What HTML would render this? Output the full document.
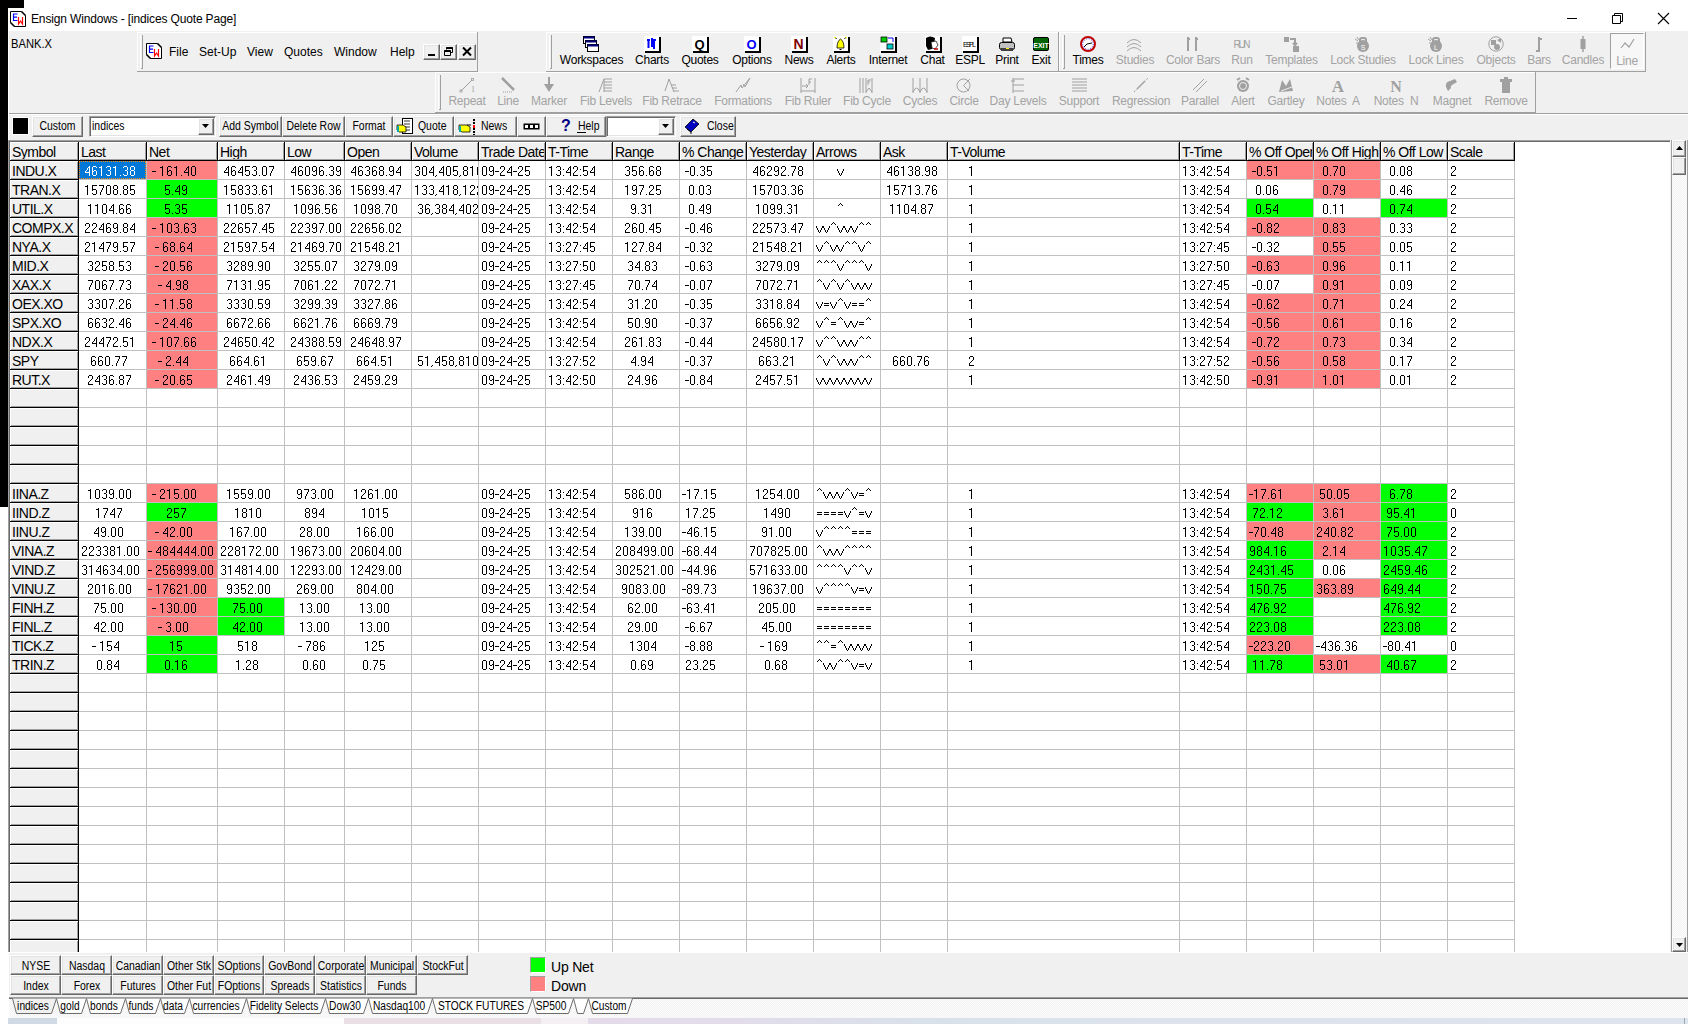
<!DOCTYPE html><html><head><meta charset="utf-8"><style>html,body{margin:0;padding:0;}
body{width:1696px;height:1024px;position:relative;overflow:hidden;background:#fff;font-family:"Liberation Sans", sans-serif;}
body div{position:absolute;box-sizing:border-box;}
.t{white-space:pre;line-height:1;}
.btn{background:#f0f0f0;border-style:solid;border-width:1px;border-color:#fff #696969 #696969 #fff;box-shadow:inset -1px -1px 0 #a0a0a0, inset 1px 1px 0 #e3e3e3;}
.sunk{border-style:solid;border-width:1px;border-color:#a0a0a0 #fff #fff #a0a0a0;box-shadow:inset 1px 1px 0 #696969, inset -1px -1px 0 #e3e3e3;}
.dis{color:#a3a3a3;}
svg{position:absolute;overflow:visible;}
.g{font-size:14px;letter-spacing:-0.5px;color:#000;}
.n{font-size:14px;letter-spacing:-1px;}
.b{letter-spacing:-0.4px;}
</style></head><body><div style="left:0px;top:0px;width:1696px;height:31px;background:#fff;"></div><div style="left:9px;top:31px;width:1679px;height:987px;background:#f0f0f0;"></div><div style="left:0px;top:0px;width:24px;height:8px;background:#000;"></div><div style="left:0px;top:0px;width:8px;height:507px;background:#000;"></div><svg style="left:10px;top:11px" width="16" height="16" viewBox="0 0 16 16"><path d="M0.5 0.5 H11.5 L15.5 4.5 V15.5 H4.5 L0.5 11.5 Z" fill="#fff" stroke="#000" stroke-width="1"/><path d="M11.5 0.5 L15.5 4.5 M0.5 11.5 L4.5 15.5" stroke="#000" stroke-width="1.6"/><path d="M7.5 3 H3.5 V9.5 H7.5 M3.5 6.2 H7" fill="none" stroke="#00f" stroke-width="1.2"/><path d="M8.5 6 V13 L10.5 10 L12.5 13 V6" fill="none" stroke="#f00" stroke-width="1.2"/></svg><div class="t " style="left:31px;top:13px;font-size:12px;color:#000;letter-spacing:-0.15px;">Ensign Windows - [indices Quote Page]</div><div style="left:1567px;top:18px;width:10px;height:1px;background:#000;"></div><svg style="left:1612px;top:13px" width="11" height="11" viewBox="0 0 11 11"><path d="M0.5 2.5 H8.5 V10.5 H0.5 Z M2.5 2.5 V0.5 H10.5 V8.5 H8.5" fill="none" stroke="#000" stroke-width="1"/></svg><svg style="left:1658px;top:13px" width="11" height="11" viewBox="0 0 11 11"><path d="M0 0 L11 11 M11 0 L0 11" stroke="#000" stroke-width="1.1"/></svg><div class="t " style="left:11px;top:37px;font-size:13px;color:#000;transform:scaleX(0.86);transform-origin:0 0;">BANK.X</div><div style="left:137px;top:32px;width:341px;height:40px;background:#f0f0f0;"></div><div style="left:137px;top:32px;width:341px;height:1px;background:#fff;"></div><div style="left:137px;top:32px;width:1px;height:40px;background:#fff;"></div><div style="left:137px;top:71px;width:341px;height:1px;background:#a0a0a0;"></div><div style="left:477px;top:32px;width:1px;height:40px;background:#a0a0a0;"></div><div style="left:140px;top:35px;width:1px;height:34px;background:#fff;"></div><div style="left:142px;top:35px;width:1px;height:34px;background:#a0a0a0;"></div><div style="left:141px;top:68px;width:2px;height:1px;background:#a0a0a0;"></div><svg style="left:146px;top:43px" width="16" height="16" viewBox="0 0 16 16"><path d="M0.5 0.5 H11.5 L15.5 4.5 V15.5 H4.5 L0.5 11.5 Z" fill="#fff" stroke="#000" stroke-width="1"/><path d="M11.5 0.5 L15.5 4.5 M0.5 11.5 L4.5 15.5" stroke="#000" stroke-width="1.6"/><path d="M7.5 3 H3.5 V9.5 H7.5 M3.5 6.2 H7" fill="none" stroke="#00f" stroke-width="1.2"/><path d="M8.5 6 V13 L10.5 10 L12.5 13 V6" fill="none" stroke="#f00" stroke-width="1.2"/></svg><div class="t " style="left:169px;top:46px;font-size:12px;color:#000;">File</div><div class="t " style="left:199px;top:46px;font-size:12px;color:#000;">Set-Up</div><div class="t " style="left:247px;top:46px;font-size:12px;color:#000;">View</div><div class="t " style="left:284px;top:46px;font-size:12px;color:#000;">Quotes</div><div class="t " style="left:334px;top:46px;font-size:12px;color:#000;">Window</div><div class="t " style="left:390px;top:46px;font-size:12px;color:#000;">Help</div><div class="btn" style="left:423px;top:44px;width:17px;height:16px;"></div><div class="btn" style="left:440px;top:44px;width:17px;height:16px;"></div><div class="btn" style="left:458px;top:44px;width:18px;height:16px;"></div><div style="left:428px;top:54px;width:7px;height:2px;background:#000;"></div><svg style="left:443px;top:46px" width="12" height="11" viewBox="0 0 12 11"><path d="M3.5 1.5 H9.5 V6.5 H7.5 M3.5 1.5 V3.5 M1.5 4.5 H7.5 V9.5 H1.5 Z" fill="none" stroke="#000" stroke-width="1"/><path d="M3.5 2 H9.5 M1.5 5 H7.5" stroke="#000" stroke-width="2"/></svg><svg style="left:462px;top:47px" width="10" height="9" viewBox="0 0 10 9"><path d="M1 0.5 L9 8.5 M9 0.5 L1 8.5" stroke="#000" stroke-width="2"/></svg><div style="left:546px;top:32px;width:513px;height:40px;background:#f0f0f0;"></div><div style="left:546px;top:32px;width:513px;height:1px;background:#fff;"></div><div style="left:546px;top:32px;width:1px;height:40px;background:#fff;"></div><div style="left:546px;top:71px;width:513px;height:1px;background:#a0a0a0;"></div><div style="left:1058px;top:32px;width:1px;height:40px;background:#a0a0a0;"></div><div style="left:549px;top:35px;width:1px;height:34px;background:#fff;"></div><div style="left:551px;top:35px;width:1px;height:34px;background:#a0a0a0;"></div><div style="left:550px;top:68px;width:2px;height:1px;background:#a0a0a0;"></div><div style="left:1059px;top:32px;width:587px;height:40px;background:#f0f0f0;"></div><div style="left:1059px;top:32px;width:587px;height:1px;background:#fff;"></div><div style="left:1059px;top:32px;width:1px;height:40px;background:#fff;"></div><div style="left:1059px;top:71px;width:587px;height:1px;background:#a0a0a0;"></div><div style="left:1645px;top:32px;width:1px;height:40px;background:#a0a0a0;"></div><div style="left:1062px;top:35px;width:1px;height:34px;background:#fff;"></div><div style="left:1064px;top:35px;width:1px;height:34px;background:#a0a0a0;"></div><div style="left:1063px;top:68px;width:2px;height:1px;background:#a0a0a0;"></div><div style="left:435px;top:72px;width:1101px;height:41px;background:#f0f0f0;"></div><div style="left:435px;top:72px;width:1101px;height:1px;background:#fff;"></div><div style="left:435px;top:72px;width:1px;height:41px;background:#fff;"></div><div style="left:435px;top:112px;width:1101px;height:1px;background:#a0a0a0;"></div><div style="left:1535px;top:72px;width:1px;height:41px;background:#a0a0a0;"></div><div style="left:438px;top:75px;width:1px;height:35px;background:#fff;"></div><div style="left:440px;top:75px;width:1px;height:35px;background:#a0a0a0;"></div><div style="left:439px;top:109px;width:2px;height:1px;background:#a0a0a0;"></div><svg style="left:583px;top:36px" width="17" height="17" viewBox="0 0 17 17"><rect x="0.5" y="0.5" width="11" height="7" fill="#fff" stroke="#000"/><rect x="0.5" y="0.5" width="11" height="2" fill="#000080"/><rect x="2.5" y="4.5" width="11" height="7" fill="#fff" stroke="#000"/><rect x="2.5" y="4.5" width="11" height="2" fill="#000080"/><rect x="4.5" y="8.5" width="11" height="7" fill="#fff" stroke="#000"/><rect x="4.5" y="8.5" width="11" height="2" fill="#000080"/></svg><div class="t " style="left:531.5px;top:54px;width:120px;text-align:center;font-size:12px;color:#000;letter-spacing:-0.25px;">Workspaces</div><svg style="left:644px;top:36px" width="17" height="17" viewBox="0 0 17 17"><rect x="1" y="1" width="16" height="16" fill="#000"/><rect x="0" y="0" width="15" height="15" fill="#fff"/><path d="M3 4 H6 M4.5 3 V12 M8 2 V11 M10 3 V13 M9 4 H12 M8 9 H11" stroke="#00f" stroke-width="2" fill="none"/></svg><div class="t " style="left:592.0px;top:54px;width:120px;text-align:center;font-size:12px;color:#000;letter-spacing:-0.25px;">Charts</div><svg style="left:692px;top:36px" width="17" height="17" viewBox="0 0 17 17"><rect x="1" y="1" width="16" height="16" fill="#000"/><rect x="0" y="0" width="15" height="15" fill="#fff"/><text x="7.5" y="12.5" font-family="Liberation Sans" font-weight="bold" font-size="13" text-anchor="middle" fill="#000">Q</text></svg><div class="t " style="left:640.0px;top:54px;width:120px;text-align:center;font-size:12px;color:#000;letter-spacing:-0.25px;">Quotes</div><svg style="left:744px;top:36px" width="17" height="17" viewBox="0 0 17 17"><rect x="1" y="1" width="16" height="16" fill="#000"/><rect x="0" y="0" width="15" height="15" fill="#fff"/><text x="7.5" y="12.5" font-family="Liberation Sans" font-weight="bold" font-size="13" text-anchor="middle" fill="#00f">O</text></svg><div class="t " style="left:692.0px;top:54px;width:120px;text-align:center;font-size:12px;color:#000;letter-spacing:-0.25px;">Options</div><svg style="left:791px;top:36px" width="17" height="17" viewBox="0 0 17 17"><rect x="1" y="1" width="16" height="16" fill="#000"/><rect x="0" y="0" width="15" height="15" fill="#fff"/><text x="7.5" y="13" font-family="Liberation Sans" font-weight="bold" font-size="14" text-anchor="middle" fill="#800000">N</text></svg><div class="t " style="left:739.0px;top:54px;width:120px;text-align:center;font-size:12px;color:#000;letter-spacing:-0.25px;">News</div><svg style="left:833px;top:36px" width="17" height="17" viewBox="0 0 17 17"><rect x="1" y="1" width="16" height="16" fill="#000"/><rect x="0" y="0" width="15" height="15" fill="#fff"/><path d="M4 12 Q4 5 7.5 3 Q11 5 11 12 Z" fill="#ff0" stroke="#000" stroke-width="0.8"/><path d="M2 1 L3.5 3 M13 1 L11.5 3 M6.5 13.5 H8.5" stroke="#000" stroke-width="1"/><path d="M1 2 L3 1 M14 2 L12 1" stroke="#ff0" stroke-width="1"/></svg><div class="t " style="left:781.0px;top:54px;width:120px;text-align:center;font-size:12px;color:#000;letter-spacing:-0.25px;">Alerts</div><svg style="left:880px;top:36px" width="17" height="17" viewBox="0 0 17 17"><rect x="1" y="1" width="16" height="16" fill="#000"/><rect x="0" y="0" width="15" height="15" fill="#fff"/><rect x="1" y="1" width="6" height="5" fill="#0c0" stroke="#000" stroke-width="0.8"/><rect x="7" y="8" width="6" height="5" fill="#0cc" stroke="#000" stroke-width="0.8"/><path d="M8 2 H13 V6" stroke="#00f" fill="none" stroke-width="1"/></svg><div class="t " style="left:828.0px;top:54px;width:120px;text-align:center;font-size:12px;color:#000;letter-spacing:-0.25px;">Internet</div><svg style="left:925px;top:36px" width="17" height="17" viewBox="0 0 17 17"><rect x="1" y="1" width="16" height="16" fill="#000"/><rect x="0" y="0" width="15" height="15" fill="#fff"/><path d="M1 2 Q5 -1 10 2 L9 9 L7 13 L3 14 L1 10 Z" fill="#000"/><path d="M6 6 L11 5 L13 9 L10 13 L7 12 Z" fill="#fff" stroke="#000" stroke-width="0.7"/><path d="M9 13 H13" stroke="#c00" stroke-width="1.5"/></svg><div class="t " style="left:872.5px;top:54px;width:120px;text-align:center;font-size:12px;color:#000;letter-spacing:-0.25px;">Chat</div><svg style="left:962px;top:36px" width="17" height="17" viewBox="0 0 17 17"><rect x="1" y="1" width="16" height="16" fill="#000"/><rect x="0" y="0" width="15" height="15" fill="#fff"/><text x="7.5" y="10.5" font-family="Liberation Sans" font-size="7" text-anchor="middle" fill="#000" textLength="13">ESPL</text></svg><div class="t " style="left:910.0px;top:54px;width:120px;text-align:center;font-size:12px;color:#000;letter-spacing:-0.25px;">ESPL</div><svg style="left:999px;top:37px" width="17" height="16" viewBox="0 0 17 16"><path d="M4 1 H12 L13 5 H4 Z" fill="#fff" stroke="#000"/><rect x="0.5" y="5.5" width="15" height="7" rx="2" fill="#c0c0c0" stroke="#000"/><rect x="2" y="11" width="12" height="3" fill="#404040"/><rect x="7" y="11" width="3" height="1" fill="#ff0"/></svg><div class="t " style="left:947.0px;top:54px;width:120px;text-align:center;font-size:12px;color:#000;letter-spacing:-0.25px;">Print</div><svg style="left:1033px;top:37px" width="17" height="15" viewBox="0 0 17 15"><rect x="0.5" y="0.5" width="15" height="13" rx="1.5" fill="#006400" stroke="#000"/><text x="8" y="10.5" font-family="Liberation Sans" font-weight="bold" font-size="7" text-anchor="middle" fill="#fff">EXIT</text></svg><div class="t " style="left:981.0px;top:54px;width:120px;text-align:center;font-size:12px;color:#000;letter-spacing:-0.25px;">Exit</div><svg style="left:1080px;top:36px" width="17" height="17" viewBox="0 0 17 17"><circle cx="8" cy="8" r="7" fill="#fff" stroke="#c00000" stroke-width="2"/><circle cx="8" cy="8" r="5.3" fill="none" stroke="#00f" stroke-width="0.8" stroke-dasharray="1 1.5"/><path d="M4 11 L7 8 L12 7" stroke="#000" stroke-width="1" fill="none"/></svg><div class="t " style="left:1028.0px;top:54px;width:120px;text-align:center;font-size:12px;color:#000;letter-spacing:-0.25px;">Times</div><svg style="left:1126px;top:36px" width="17" height="17" viewBox="0 0 17 17"><path d="M1 7 Q8 0 15 7 M1 11 Q8 4 15 11 M1 15 Q8 8 15 15" stroke="#a0a0a0" fill="none" stroke-width="1"/></svg><div class="t " style="left:1075.0px;top:54px;width:120px;text-align:center;font-size:12px;color:#a3a3a3;letter-spacing:-0.25px;">Studies</div><svg style="left:1185px;top:36px" width="17" height="17" viewBox="0 0 17 17"><path d="M3 1 V15 M2 14 H4 M3 3 H5 M11 1 V15 M10 14 H12 M11 3 H13" stroke="#a0a0a0" fill="none" stroke-width="2"/></svg><div class="t " style="left:1133.0px;top:54px;width:120px;text-align:center;font-size:12px;color:#a3a3a3;letter-spacing:-0.25px;">Color Bars</div><svg style="left:1233px;top:38px" width="18" height="12" viewBox="0 0 18 12"><text x="9" y="10" font-family="Liberation Sans" font-size="10" text-anchor="middle" fill="#a0a0a0" textLength="17">RUN</text></svg><div class="t " style="left:1182.0px;top:54px;width:120px;text-align:center;font-size:12px;color:#a3a3a3;letter-spacing:-0.25px;">Run</div><svg style="left:1283px;top:36px" width="17" height="17" viewBox="0 0 17 17"><rect x="1" y="1" width="5" height="5" fill="#a0a0a0"/><rect x="10" y="10" width="6" height="6" fill="#a0a0a0"/><path d="M7 3 H12 V9 M10 7 L12 9 L14 7" stroke="#a0a0a0" fill="none" stroke-width="2"/></svg><div class="t " style="left:1231.5px;top:54px;width:120px;text-align:center;font-size:12px;color:#a3a3a3;letter-spacing:-0.25px;">Templates</div><svg style="left:1354px;top:36px" width="17" height="17" viewBox="0 0 17 17"><circle cx="9" cy="10" r="6" fill="#a0a0a0"/><rect x="6" y="2" width="6" height="6" rx="2" fill="none" stroke="#a0a0a0" stroke-width="2"/><path d="M1 3 L4 5 M2 7 H4 M3 1 L5 4" stroke="#a0a0a0"/><text x="9" y="14" font-family="Liberation Sans" font-size="7" text-anchor="middle" fill="#fff">S</text></svg><div class="t " style="left:1303.0px;top:54px;width:120px;text-align:center;font-size:12px;color:#a3a3a3;letter-spacing:-0.25px;">Lock Studies</div><svg style="left:1427px;top:36px" width="17" height="17" viewBox="0 0 17 17"><circle cx="9" cy="10" r="6" fill="#a0a0a0"/><rect x="6" y="2" width="6" height="6" rx="2" fill="none" stroke="#a0a0a0" stroke-width="2"/><path d="M1 3 L4 5 M2 7 H4 M3 1 L5 4" stroke="#a0a0a0"/><text x="9" y="14" font-family="Liberation Sans" font-size="7" text-anchor="middle" fill="#fff">L</text></svg><div class="t " style="left:1376.0px;top:54px;width:120px;text-align:center;font-size:12px;color:#a3a3a3;letter-spacing:-0.25px;">Lock Lines</div><svg style="left:1488px;top:36px" width="17" height="17" viewBox="0 0 17 17"><circle cx="8" cy="8" r="7.2" fill="none" stroke="#a0a0a0" stroke-width="1"/><rect x="3" y="4" width="5" height="5" fill="#a0a0a0"/><path d="M9 4 L13 2 L13 7 Z" fill="#a0a0a0"/><circle cx="9" cy="11" r="3" fill="#a0a0a0"/></svg><div class="t " style="left:1436.0px;top:54px;width:120px;text-align:center;font-size:12px;color:#a3a3a3;letter-spacing:-0.25px;">Objects</div><svg style="left:1535px;top:36px" width="10" height="17" viewBox="0 0 10 17"><path d="M4 1 V16 M1 15 H4 M4 3 H7" stroke="#a0a0a0" fill="none" stroke-width="2"/></svg><div class="t " style="left:1479.0px;top:54px;width:120px;text-align:center;font-size:12px;color:#a3a3a3;letter-spacing:-0.25px;">Bars</div><svg style="left:1578px;top:36px" width="10" height="17" viewBox="0 0 10 17"><path d="M5 0 V16" stroke="#a0a0a0" stroke-width="1.5"/><rect x="2.5" y="3" width="5" height="10" fill="#a0a0a0"/></svg><div class="t " style="left:1523.0px;top:54px;width:120px;text-align:center;font-size:12px;color:#a3a3a3;letter-spacing:-0.25px;">Candles</div><div style="left:1610px;top:33px;width:34px;height:36px;border-style:solid;border-width:1px;border-color:#a0a0a0 #fff #fff #a0a0a0;background:#f7f7f7;"></div><svg style="left:1620px;top:38px" width="15" height="12" viewBox="0 0 15 12"><path d="M1 10 L5 5 L9 9 L14 1" stroke="#a0a0a0" fill="none" stroke-width="1.2"/></svg><div class="t " style="left:1567.0px;top:55px;width:120px;text-align:center;font-size:12px;color:#a3a3a3;letter-spacing:-0.25px;">Line</div><svg style="left:459px;top:77px" width="17" height="17" viewBox="0 0 17 17"><path d="M2 14 L13 3" stroke="#a0a0a0"/><rect x="1" y="13" width="2" height="2" fill="none" stroke="#a0a0a0" stroke-width="0.8"/><rect x="12.5" y="1.5" width="2" height="2" fill="none" stroke="#a0a0a0" stroke-width="0.8"/><text x="12" y="15" font-family="Liberation Serif" font-size="8" fill="#a0a0a0">1</text></svg><div class="t " style="left:407.0px;top:95px;width:120px;text-align:center;font-size:12px;color:#a3a3a3;letter-spacing:-0.25px;">Repeat</div><svg style="left:500px;top:77px" width="17" height="17" viewBox="0 0 17 17"><path d="M2 1 L14 13" stroke="#a0a0a0" stroke-width="2.5"/><path d="M3 15 H13" stroke="#a0a0a0" stroke-dasharray="1 1"/></svg><div class="t " style="left:448.0px;top:95px;width:120px;text-align:center;font-size:12px;color:#a3a3a3;letter-spacing:-0.25px;">Line</div><svg style="left:541px;top:77px" width="17" height="17" viewBox="0 0 17 17"><path d="M8 0 V10" stroke="#a0a0a0" stroke-width="2"/><path d="M3 7 L8 15 L13 7 Z" fill="#a0a0a0"/></svg><div class="t " style="left:489.0px;top:95px;width:120px;text-align:center;font-size:12px;color:#a3a3a3;letter-spacing:-0.25px;">Marker</div><svg style="left:598px;top:77px" width="17" height="17" viewBox="0 0 17 17"><path d="M1 15 L6 2 H14 M6 5 H14 M6 8 H14 M6 11 H14 M6 14 H14 M6 2 V15" stroke="#a0a0a0" fill="none" stroke-width="1"/></svg><div class="t " style="left:546.0px;top:95px;width:120px;text-align:center;font-size:12px;color:#a3a3a3;letter-spacing:-0.25px;">Fib Levels</div><svg style="left:664px;top:77px" width="17" height="17" viewBox="0 0 17 17"><path d="M1 14 L5 2 L10 15 M7 8 H12 M8 11 H13 M9 14 H15" stroke="#a0a0a0" fill="none" stroke-width="1"/></svg><div class="t " style="left:612.0px;top:95px;width:120px;text-align:center;font-size:12px;color:#a3a3a3;letter-spacing:-0.25px;">Fib Retrace</div><svg style="left:735px;top:77px" width="17" height="17" viewBox="0 0 17 17"><path d="M1 15 L6 8 L7 11 L15 1 L10 10 L8 7" stroke="#a0a0a0" fill="none" stroke-width="1"/></svg><div class="t " style="left:683.0px;top:95px;width:120px;text-align:center;font-size:12px;color:#a3a3a3;letter-spacing:-0.25px;">Formations</div><svg style="left:800px;top:77px" width="17" height="17" viewBox="0 0 17 17"><path d="M1 1 V16 M15 1 V16 M1 14 H15 M2 9 H8 M6 7 L8 9 L6 11 M9 2 V8 M9 2 H12 M9 5 H11" stroke="#a0a0a0" fill="none" stroke-width="1"/></svg><div class="t " style="left:748.0px;top:95px;width:120px;text-align:center;font-size:12px;color:#a3a3a3;letter-spacing:-0.25px;">Fib Ruler</div><svg style="left:859px;top:77px" width="17" height="17" viewBox="0 0 17 17"><path d="M1 1 V16 M4 1 V16 M7 1 V16 M13 1 V16 M7 15 L10 11 L13 15 M9 3 V8 M9 3 H12 M9 5 H11" stroke="#a0a0a0" fill="none" stroke-width="1"/></svg><div class="t " style="left:807.0px;top:95px;width:120px;text-align:center;font-size:12px;color:#a3a3a3;letter-spacing:-0.25px;">Fib Cycle</div><svg style="left:912px;top:77px" width="17" height="17" viewBox="0 0 17 17"><path d="M1 1 V16 M8 1 V16 M15 1 V16 M1 15 Q4.5 7 8 15 Q11.5 7 15 15" stroke="#a0a0a0" fill="none" stroke-width="1"/></svg><div class="t " style="left:860.0px;top:95px;width:120px;text-align:center;font-size:12px;color:#a3a3a3;letter-spacing:-0.25px;">Cycles</div><svg style="left:956px;top:77px" width="17" height="17" viewBox="0 0 17 17"><circle cx="7.5" cy="8.5" r="6.5" stroke="#a0a0a0" fill="none"/><path d="M7.5 8.5 L14 2 M7.5 8.5 L13 14" stroke="#a0a0a0"/></svg><div class="t " style="left:904.0px;top:95px;width:120px;text-align:center;font-size:12px;color:#a3a3a3;letter-spacing:-0.25px;">Circle</div><svg style="left:1010px;top:77px" width="17" height="17" viewBox="0 0 17 17"><path d="M3 1 V16 M3 2 H14 M3 8 H14 M3 14 H14 M1 4 H5" stroke="#a0a0a0" fill="none" stroke-width="1"/></svg><div class="t " style="left:958.0px;top:95px;width:120px;text-align:center;font-size:12px;color:#a3a3a3;letter-spacing:-0.25px;">Day Levels</div><svg style="left:1071px;top:77px" width="17" height="17" viewBox="0 0 17 17"><path d="M1 2 H16 M1 5 H16 M1 8 H16 M1 11 H16 M1 14 H16" stroke="#a0a0a0" stroke-width="1"/></svg><div class="t " style="left:1019.0px;top:95px;width:120px;text-align:center;font-size:12px;color:#a3a3a3;letter-spacing:-0.25px;">Support</div><svg style="left:1133px;top:77px" width="17" height="17" viewBox="0 0 17 17"><path d="M1 15 L15 1" stroke="#a0a0a0" stroke-dasharray="2 1.5"/><path d="M4 12 L12 4" stroke="#a0a0a0" stroke-width="1.5"/></svg><div class="t " style="left:1081.0px;top:95px;width:120px;text-align:center;font-size:12px;color:#a3a3a3;letter-spacing:-0.25px;">Regression</div><svg style="left:1192px;top:77px" width="17" height="17" viewBox="0 0 17 17"><path d="M1 13 L12 2 M4 15 L15 4" stroke="#a0a0a0" stroke-width="1"/></svg><div class="t " style="left:1140.0px;top:95px;width:120px;text-align:center;font-size:12px;color:#a3a3a3;letter-spacing:-0.25px;">Parallel</div><svg style="left:1235px;top:77px" width="17" height="17" viewBox="0 0 17 17"><circle cx="8" cy="9" r="6" fill="#a0a0a0"/><path d="M2 3 L5 1 M14 3 L11 1" stroke="#a0a0a0" stroke-width="2"/><circle cx="8" cy="9" r="3.5" fill="none" stroke="#f0f0f0" stroke-width="1"/></svg><div class="t " style="left:1183.0px;top:95px;width:120px;text-align:center;font-size:12px;color:#a3a3a3;letter-spacing:-0.25px;">Alert</div><svg style="left:1278px;top:77px" width="17" height="17" viewBox="0 0 17 17"><path d="M1 15 L4 3 L8 9 L12 2 L15 14 Z" fill="#a0a0a0"/><path d="M3 14 L14 10" stroke="#f0f0f0"/></svg><div class="t " style="left:1226.0px;top:95px;width:120px;text-align:center;font-size:12px;color:#a3a3a3;letter-spacing:-0.25px;">Gartley</div><svg style="left:1330px;top:77px" width="17" height="17" viewBox="0 0 17 17"><text x="8" y="15" font-family="Liberation Serif" font-weight="bold" font-size="17" text-anchor="middle" fill="#a0a0a0">A</text></svg><div class="t " style="left:1278.0px;top:95px;width:120px;text-align:center;font-size:12px;color:#a3a3a3;letter-spacing:-0.25px;">Notes  A</div><svg style="left:1388px;top:77px" width="17" height="17" viewBox="0 0 17 17"><text x="8" y="15" font-family="Liberation Serif" font-weight="bold" font-size="16" text-anchor="middle" fill="#a0a0a0">N</text></svg><div class="t " style="left:1336.0px;top:95px;width:120px;text-align:center;font-size:12px;color:#a3a3a3;letter-spacing:-0.25px;">Notes  N</div><svg style="left:1444px;top:77px" width="17" height="17" viewBox="0 0 17 17"><path d="M4 14 L2 10 Q1 5 6 4 L11 2 L13 5 L8 8 Q6 9 7 11 Z" fill="#a0a0a0"/></svg><div class="t " style="left:1392.0px;top:95px;width:120px;text-align:center;font-size:12px;color:#a3a3a3;letter-spacing:-0.25px;">Magnet</div><svg style="left:1498px;top:77px" width="17" height="17" viewBox="0 0 17 17"><rect x="4" y="5" width="8" height="11" fill="#a0a0a0"/><rect x="2" y="2" width="12" height="3" fill="#a0a0a0"/><rect x="6" y="0" width="4" height="2" fill="#a0a0a0"/></svg><div class="t " style="left:1446.0px;top:95px;width:120px;text-align:center;font-size:12px;color:#a3a3a3;letter-spacing:-0.25px;">Remove</div><div style="left:9px;top:113px;width:1679px;height:1px;background:#a0a0a0;"></div><div style="left:9px;top:114px;width:1679px;height:1px;background:#fff;"></div><div style="left:12px;top:117px;width:17px;height:18px;background:#fff;"></div><div style="left:13px;top:118px;width:15px;height:16px;background:#000;"></div><div class="btn" style="left:32px;top:116px;width:51px;height:21px;"></div><div class="t " style="left:12.0px;top:120px;width:91px;text-align:center;font-size:12px;color:#000;transform:scaleX(0.87);">Custom</div><div class="sunk" style="left:89px;top:116px;width:127px;height:21px;background:#fff"></div><div class="t " style="left:92px;top:120px;font-size:12px;color:#000;transform:scaleX(0.87);transform-origin:0 0;">indices</div><div class="btn" style="left:198px;top:118px;width:16px;height:17px;"></div><svg style="left:202px;top:124px" width="8" height="5" viewBox="0 0 8 5"><path d="M0 0 H7 L3.5 4 Z" fill="#000"/></svg><div class="btn" style="left:219px;top:116px;width:63px;height:21px;"></div><div class="t " style="left:199.0px;top:120px;width:103px;text-align:center;font-size:12px;color:#000;transform:scaleX(0.87);">Add Symbol</div><div class="btn" style="left:282px;top:116px;width:63px;height:21px;"></div><div class="t " style="left:262.0px;top:120px;width:103px;text-align:center;font-size:12px;color:#000;transform:scaleX(0.87);">Delete Row</div><div class="btn" style="left:345px;top:116px;width:48px;height:21px;"></div><div class="t " style="left:325.0px;top:120px;width:88px;text-align:center;font-size:12px;color:#000;transform:scaleX(0.87);">Format</div><div class="btn" style="left:393px;top:116px;width:61px;height:21px;"></div><div class="t " style="left:418px;top:120px;font-size:12px;color:#000;transform:scaleX(0.87);transform-origin:0 0;">Quote</div><svg style="left:397px;top:118px" width="18" height="17" viewBox="0 0 18 17"><rect x="5.5" y="0.5" width="10" height="15" fill="#fff" stroke="#000"/><path d="M7 3 H13 M7 6 H13 M7 9 H13 M7 12 H13" stroke="#000" stroke-width="0.8"/><path d="M0 7 H6 L9 9 V14 H2 L0 12 Z" fill="#ff0" stroke="#000" stroke-width="0.8"/><rect x="0" y="8" width="2" height="6" fill="#0aa"/></svg><div class="btn" style="left:454px;top:116px;width:63px;height:21px;"></div><div class="t " style="left:481px;top:120px;font-size:12px;color:#000;transform:scaleX(0.87);transform-origin:0 0;">News</div><svg style="left:459px;top:119px" width="20" height="16" viewBox="0 0 20 16"><path d="M0 6 H8 L11 8 V13 H3 L0 11 Z" fill="#ff0" stroke="#000" stroke-width="0.8"/><path d="M8 6 H12" stroke="#000"/><rect x="0" y="7" width="2" height="6" fill="#0aa"/><path d="M15 0 V16" stroke="#000" stroke-width="2" stroke-dasharray="2 1"/><rect x="14" y="6" width="2" height="3" fill="#f00"/></svg><div class="btn" style="left:517px;top:116px;width:29px;height:21px;"></div><svg style="left:523px;top:123px" width="17" height="7" viewBox="0 0 17 7"><rect x="0.5" y="0.5" width="16" height="6" fill="#000"/><rect x="2" y="2" width="3" height="3" fill="#fff"/><rect x="7" y="2" width="3" height="3" fill="#fff"/><rect x="12" y="2" width="3" height="3" fill="#fff"/></svg><div class="btn" style="left:546px;top:116px;width:60px;height:21px;"></div><div class="t" style="left:561px;top:118px;font-size:16px;font-weight:bold;color:#000080;">?</div><div class="t " style="left:578px;top:120px;font-size:12px;color:#000;transform:scaleX(0.87);transform-origin:0 0;">Help</div><div style="left:577px;top:132px;width:9px;height:1px;background:#000;"></div><div class="sunk" style="left:606px;top:116px;width:70px;height:21px;background:#fff"></div><div class="btn" style="left:658px;top:118px;width:16px;height:17px;"></div><svg style="left:662px;top:124px" width="8" height="5" viewBox="0 0 8 5"><path d="M0 0 H7 L3.5 4 Z" fill="#000"/></svg><div class="btn" style="left:680px;top:116px;width:56px;height:21px;"></div><svg style="left:684px;top:118px" width="17" height="16" viewBox="0 0 17 16"><path d="M1 9 L9 1 L15 6 L7 14 Z" fill="#0000c0" stroke="#000" stroke-width="0.8"/><path d="M7 14 L7 16 M3 11 L7 14" stroke="#000"/><path d="M9 4 L11 5" stroke="#fff"/></svg><div class="t " style="left:707px;top:120px;font-size:12px;color:#000;transform:scaleX(0.87);transform-origin:0 0;">Close</div><div style="left:8px;top:140px;width:1662px;height:1px;background:#a0a0a0;"></div><div style="left:8px;top:140px;width:1px;height:812px;background:#a0a0a0;"></div><div style="left:9px;top:141px;width:1661px;height:1px;background:#696969;"></div><div style="left:9px;top:141px;width:1px;height:811px;background:#696969;"></div><div style="left:10px;top:142px;width:1660px;height:810px;background:#fff;"></div><div style="left:10px;top:142px;width:68px;height:18px;background:#f0f0f0;"></div><div style="left:10px;top:142px;width:68px;height:1px;background:#fff;"></div><div style="left:10px;top:142px;width:1px;height:18px;background:#fff;"></div><div style="left:77px;top:143px;width:1px;height:17px;background:#a0a0a0;"></div><div style="left:11px;top:159px;width:67px;height:1px;background:#a0a0a0;"></div><div style="left:78px;top:142px;width:1px;height:19px;background:#000;"></div><div style="left:10px;top:160px;width:69px;height:1px;background:#000;"></div><div class="t g" style="left:12px;top:145px;width:65px;overflow:hidden;">Symbol</div><div style="left:79px;top:142px;width:67px;height:18px;background:#f0f0f0;"></div><div style="left:79px;top:142px;width:67px;height:1px;background:#fff;"></div><div style="left:79px;top:142px;width:1px;height:18px;background:#fff;"></div><div style="left:145px;top:143px;width:1px;height:17px;background:#a0a0a0;"></div><div style="left:80px;top:159px;width:66px;height:1px;background:#a0a0a0;"></div><div style="left:146px;top:142px;width:1px;height:19px;background:#000;"></div><div style="left:79px;top:160px;width:68px;height:1px;background:#000;"></div><div class="t g" style="left:81px;top:145px;width:64px;overflow:hidden;">Last</div><div style="left:147px;top:142px;width:70px;height:18px;background:#f0f0f0;"></div><div style="left:147px;top:142px;width:70px;height:1px;background:#fff;"></div><div style="left:147px;top:142px;width:1px;height:18px;background:#fff;"></div><div style="left:216px;top:143px;width:1px;height:17px;background:#a0a0a0;"></div><div style="left:148px;top:159px;width:69px;height:1px;background:#a0a0a0;"></div><div style="left:217px;top:142px;width:1px;height:19px;background:#000;"></div><div style="left:147px;top:160px;width:71px;height:1px;background:#000;"></div><div class="t g" style="left:149px;top:145px;width:67px;overflow:hidden;">Net</div><div style="left:218px;top:142px;width:66px;height:18px;background:#f0f0f0;"></div><div style="left:218px;top:142px;width:66px;height:1px;background:#fff;"></div><div style="left:218px;top:142px;width:1px;height:18px;background:#fff;"></div><div style="left:283px;top:143px;width:1px;height:17px;background:#a0a0a0;"></div><div style="left:219px;top:159px;width:65px;height:1px;background:#a0a0a0;"></div><div style="left:284px;top:142px;width:1px;height:19px;background:#000;"></div><div style="left:218px;top:160px;width:67px;height:1px;background:#000;"></div><div class="t g" style="left:220px;top:145px;width:63px;overflow:hidden;">High</div><div style="left:285px;top:142px;width:59px;height:18px;background:#f0f0f0;"></div><div style="left:285px;top:142px;width:59px;height:1px;background:#fff;"></div><div style="left:285px;top:142px;width:1px;height:18px;background:#fff;"></div><div style="left:343px;top:143px;width:1px;height:17px;background:#a0a0a0;"></div><div style="left:286px;top:159px;width:58px;height:1px;background:#a0a0a0;"></div><div style="left:344px;top:142px;width:1px;height:19px;background:#000;"></div><div style="left:285px;top:160px;width:60px;height:1px;background:#000;"></div><div class="t g" style="left:287px;top:145px;width:56px;overflow:hidden;">Low</div><div style="left:345px;top:142px;width:66px;height:18px;background:#f0f0f0;"></div><div style="left:345px;top:142px;width:66px;height:1px;background:#fff;"></div><div style="left:345px;top:142px;width:1px;height:18px;background:#fff;"></div><div style="left:410px;top:143px;width:1px;height:17px;background:#a0a0a0;"></div><div style="left:346px;top:159px;width:65px;height:1px;background:#a0a0a0;"></div><div style="left:411px;top:142px;width:1px;height:19px;background:#000;"></div><div style="left:345px;top:160px;width:67px;height:1px;background:#000;"></div><div class="t g" style="left:347px;top:145px;width:63px;overflow:hidden;">Open</div><div style="left:412px;top:142px;width:66px;height:18px;background:#f0f0f0;"></div><div style="left:412px;top:142px;width:66px;height:1px;background:#fff;"></div><div style="left:412px;top:142px;width:1px;height:18px;background:#fff;"></div><div style="left:477px;top:143px;width:1px;height:17px;background:#a0a0a0;"></div><div style="left:413px;top:159px;width:65px;height:1px;background:#a0a0a0;"></div><div style="left:478px;top:142px;width:1px;height:19px;background:#000;"></div><div style="left:412px;top:160px;width:67px;height:1px;background:#000;"></div><div class="t g" style="left:414px;top:145px;width:63px;overflow:hidden;">Volume</div><div style="left:479px;top:142px;width:66px;height:18px;background:#f0f0f0;"></div><div style="left:479px;top:142px;width:66px;height:1px;background:#fff;"></div><div style="left:479px;top:142px;width:1px;height:18px;background:#fff;"></div><div style="left:544px;top:143px;width:1px;height:17px;background:#a0a0a0;"></div><div style="left:480px;top:159px;width:65px;height:1px;background:#a0a0a0;"></div><div style="left:545px;top:142px;width:1px;height:19px;background:#000;"></div><div style="left:479px;top:160px;width:67px;height:1px;background:#000;"></div><div class="t g" style="left:481px;top:145px;width:63px;overflow:hidden;">Trade Date</div><div style="left:546px;top:142px;width:66px;height:18px;background:#f0f0f0;"></div><div style="left:546px;top:142px;width:66px;height:1px;background:#fff;"></div><div style="left:546px;top:142px;width:1px;height:18px;background:#fff;"></div><div style="left:611px;top:143px;width:1px;height:17px;background:#a0a0a0;"></div><div style="left:547px;top:159px;width:65px;height:1px;background:#a0a0a0;"></div><div style="left:612px;top:142px;width:1px;height:19px;background:#000;"></div><div style="left:546px;top:160px;width:67px;height:1px;background:#000;"></div><div class="t g" style="left:548px;top:145px;width:63px;overflow:hidden;">T-Time</div><div style="left:613px;top:142px;width:66px;height:18px;background:#f0f0f0;"></div><div style="left:613px;top:142px;width:66px;height:1px;background:#fff;"></div><div style="left:613px;top:142px;width:1px;height:18px;background:#fff;"></div><div style="left:678px;top:143px;width:1px;height:17px;background:#a0a0a0;"></div><div style="left:614px;top:159px;width:65px;height:1px;background:#a0a0a0;"></div><div style="left:679px;top:142px;width:1px;height:19px;background:#000;"></div><div style="left:613px;top:160px;width:67px;height:1px;background:#000;"></div><div class="t g" style="left:615px;top:145px;width:63px;overflow:hidden;">Range</div><div style="left:680px;top:142px;width:66px;height:18px;background:#f0f0f0;"></div><div style="left:680px;top:142px;width:66px;height:1px;background:#fff;"></div><div style="left:680px;top:142px;width:1px;height:18px;background:#fff;"></div><div style="left:745px;top:143px;width:1px;height:17px;background:#a0a0a0;"></div><div style="left:681px;top:159px;width:65px;height:1px;background:#a0a0a0;"></div><div style="left:746px;top:142px;width:1px;height:19px;background:#000;"></div><div style="left:680px;top:160px;width:67px;height:1px;background:#000;"></div><div class="t g" style="left:682px;top:145px;width:63px;overflow:hidden;">% Change</div><div style="left:747px;top:142px;width:66px;height:18px;background:#f0f0f0;"></div><div style="left:747px;top:142px;width:66px;height:1px;background:#fff;"></div><div style="left:747px;top:142px;width:1px;height:18px;background:#fff;"></div><div style="left:812px;top:143px;width:1px;height:17px;background:#a0a0a0;"></div><div style="left:748px;top:159px;width:65px;height:1px;background:#a0a0a0;"></div><div style="left:813px;top:142px;width:1px;height:19px;background:#000;"></div><div style="left:747px;top:160px;width:67px;height:1px;background:#000;"></div><div class="t g" style="left:749px;top:145px;width:63px;overflow:hidden;">Yesterday</div><div style="left:814px;top:142px;width:66px;height:18px;background:#f0f0f0;"></div><div style="left:814px;top:142px;width:66px;height:1px;background:#fff;"></div><div style="left:814px;top:142px;width:1px;height:18px;background:#fff;"></div><div style="left:879px;top:143px;width:1px;height:17px;background:#a0a0a0;"></div><div style="left:815px;top:159px;width:65px;height:1px;background:#a0a0a0;"></div><div style="left:880px;top:142px;width:1px;height:19px;background:#000;"></div><div style="left:814px;top:160px;width:67px;height:1px;background:#000;"></div><div class="t g" style="left:816px;top:145px;width:63px;overflow:hidden;">Arrows</div><div style="left:881px;top:142px;width:66px;height:18px;background:#f0f0f0;"></div><div style="left:881px;top:142px;width:66px;height:1px;background:#fff;"></div><div style="left:881px;top:142px;width:1px;height:18px;background:#fff;"></div><div style="left:946px;top:143px;width:1px;height:17px;background:#a0a0a0;"></div><div style="left:882px;top:159px;width:65px;height:1px;background:#a0a0a0;"></div><div style="left:947px;top:142px;width:1px;height:19px;background:#000;"></div><div style="left:881px;top:160px;width:67px;height:1px;background:#000;"></div><div class="t g" style="left:883px;top:145px;width:63px;overflow:hidden;">Ask</div><div style="left:948px;top:142px;width:231px;height:18px;background:#f0f0f0;"></div><div style="left:948px;top:142px;width:231px;height:1px;background:#fff;"></div><div style="left:948px;top:142px;width:1px;height:18px;background:#fff;"></div><div style="left:1178px;top:143px;width:1px;height:17px;background:#a0a0a0;"></div><div style="left:949px;top:159px;width:230px;height:1px;background:#a0a0a0;"></div><div style="left:1179px;top:142px;width:1px;height:19px;background:#000;"></div><div style="left:948px;top:160px;width:232px;height:1px;background:#000;"></div><div class="t g" style="left:950px;top:145px;width:228px;overflow:hidden;">T-Volume</div><div style="left:1180px;top:142px;width:66px;height:18px;background:#f0f0f0;"></div><div style="left:1180px;top:142px;width:66px;height:1px;background:#fff;"></div><div style="left:1180px;top:142px;width:1px;height:18px;background:#fff;"></div><div style="left:1245px;top:143px;width:1px;height:17px;background:#a0a0a0;"></div><div style="left:1181px;top:159px;width:65px;height:1px;background:#a0a0a0;"></div><div style="left:1246px;top:142px;width:1px;height:19px;background:#000;"></div><div style="left:1180px;top:160px;width:67px;height:1px;background:#000;"></div><div class="t g" style="left:1182px;top:145px;width:63px;overflow:hidden;">T-Time</div><div style="left:1247px;top:142px;width:66px;height:18px;background:#f0f0f0;"></div><div style="left:1247px;top:142px;width:66px;height:1px;background:#fff;"></div><div style="left:1247px;top:142px;width:1px;height:18px;background:#fff;"></div><div style="left:1312px;top:143px;width:1px;height:17px;background:#a0a0a0;"></div><div style="left:1248px;top:159px;width:65px;height:1px;background:#a0a0a0;"></div><div style="left:1313px;top:142px;width:1px;height:19px;background:#000;"></div><div style="left:1247px;top:160px;width:67px;height:1px;background:#000;"></div><div class="t g" style="left:1249px;top:145px;width:63px;overflow:hidden;">% Off Open</div><div style="left:1314px;top:142px;width:66px;height:18px;background:#f0f0f0;"></div><div style="left:1314px;top:142px;width:66px;height:1px;background:#fff;"></div><div style="left:1314px;top:142px;width:1px;height:18px;background:#fff;"></div><div style="left:1379px;top:143px;width:1px;height:17px;background:#a0a0a0;"></div><div style="left:1315px;top:159px;width:65px;height:1px;background:#a0a0a0;"></div><div style="left:1380px;top:142px;width:1px;height:19px;background:#000;"></div><div style="left:1314px;top:160px;width:67px;height:1px;background:#000;"></div><div class="t g" style="left:1316px;top:145px;width:63px;overflow:hidden;">% Off High</div><div style="left:1381px;top:142px;width:66px;height:18px;background:#f0f0f0;"></div><div style="left:1381px;top:142px;width:66px;height:1px;background:#fff;"></div><div style="left:1381px;top:142px;width:1px;height:18px;background:#fff;"></div><div style="left:1446px;top:143px;width:1px;height:17px;background:#a0a0a0;"></div><div style="left:1382px;top:159px;width:65px;height:1px;background:#a0a0a0;"></div><div style="left:1447px;top:142px;width:1px;height:19px;background:#000;"></div><div style="left:1381px;top:160px;width:67px;height:1px;background:#000;"></div><div class="t g" style="left:1383px;top:145px;width:63px;overflow:hidden;">% Off Low</div><div style="left:1448px;top:142px;width:66px;height:18px;background:#f0f0f0;"></div><div style="left:1448px;top:142px;width:66px;height:1px;background:#fff;"></div><div style="left:1448px;top:142px;width:1px;height:18px;background:#fff;"></div><div style="left:1513px;top:143px;width:1px;height:17px;background:#a0a0a0;"></div><div style="left:1449px;top:159px;width:65px;height:1px;background:#a0a0a0;"></div><div style="left:1514px;top:142px;width:1px;height:19px;background:#000;"></div><div style="left:1448px;top:160px;width:67px;height:1px;background:#000;"></div><div class="t g" style="left:1450px;top:145px;width:63px;overflow:hidden;">Scale</div><div style="left:10px;top:161px;width:68px;height:18px;background:#f0f0f0;"></div><div style="left:10px;top:161px;width:68px;height:1px;background:#fff;"></div><div style="left:10px;top:161px;width:1px;height:18px;background:#fff;"></div><div style="left:77px;top:162px;width:1px;height:17px;background:#a0a0a0;"></div><div style="left:11px;top:178px;width:67px;height:1px;background:#a0a0a0;"></div><div style="left:78px;top:161px;width:1px;height:19px;background:#000;"></div><div style="left:10px;top:179px;width:69px;height:1px;background:#000;"></div><div style="left:10px;top:180px;width:68px;height:18px;background:#f0f0f0;"></div><div style="left:10px;top:180px;width:68px;height:1px;background:#fff;"></div><div style="left:10px;top:180px;width:1px;height:18px;background:#fff;"></div><div style="left:77px;top:181px;width:1px;height:17px;background:#a0a0a0;"></div><div style="left:11px;top:197px;width:67px;height:1px;background:#a0a0a0;"></div><div style="left:78px;top:180px;width:1px;height:19px;background:#000;"></div><div style="left:10px;top:198px;width:69px;height:1px;background:#000;"></div><div style="left:10px;top:199px;width:68px;height:18px;background:#f0f0f0;"></div><div style="left:10px;top:199px;width:68px;height:1px;background:#fff;"></div><div style="left:10px;top:199px;width:1px;height:18px;background:#fff;"></div><div style="left:77px;top:200px;width:1px;height:17px;background:#a0a0a0;"></div><div style="left:11px;top:216px;width:67px;height:1px;background:#a0a0a0;"></div><div style="left:78px;top:199px;width:1px;height:19px;background:#000;"></div><div style="left:10px;top:217px;width:69px;height:1px;background:#000;"></div><div style="left:10px;top:218px;width:68px;height:18px;background:#f0f0f0;"></div><div style="left:10px;top:218px;width:68px;height:1px;background:#fff;"></div><div style="left:10px;top:218px;width:1px;height:18px;background:#fff;"></div><div style="left:77px;top:219px;width:1px;height:17px;background:#a0a0a0;"></div><div style="left:11px;top:235px;width:67px;height:1px;background:#a0a0a0;"></div><div style="left:78px;top:218px;width:1px;height:19px;background:#000;"></div><div style="left:10px;top:236px;width:69px;height:1px;background:#000;"></div><div style="left:10px;top:237px;width:68px;height:18px;background:#f0f0f0;"></div><div style="left:10px;top:237px;width:68px;height:1px;background:#fff;"></div><div style="left:10px;top:237px;width:1px;height:18px;background:#fff;"></div><div style="left:77px;top:238px;width:1px;height:17px;background:#a0a0a0;"></div><div style="left:11px;top:254px;width:67px;height:1px;background:#a0a0a0;"></div><div style="left:78px;top:237px;width:1px;height:19px;background:#000;"></div><div style="left:10px;top:255px;width:69px;height:1px;background:#000;"></div><div style="left:10px;top:256px;width:68px;height:18px;background:#f0f0f0;"></div><div style="left:10px;top:256px;width:68px;height:1px;background:#fff;"></div><div style="left:10px;top:256px;width:1px;height:18px;background:#fff;"></div><div style="left:77px;top:257px;width:1px;height:17px;background:#a0a0a0;"></div><div style="left:11px;top:273px;width:67px;height:1px;background:#a0a0a0;"></div><div style="left:78px;top:256px;width:1px;height:19px;background:#000;"></div><div style="left:10px;top:274px;width:69px;height:1px;background:#000;"></div><div style="left:10px;top:275px;width:68px;height:18px;background:#f0f0f0;"></div><div style="left:10px;top:275px;width:68px;height:1px;background:#fff;"></div><div style="left:10px;top:275px;width:1px;height:18px;background:#fff;"></div><div style="left:77px;top:276px;width:1px;height:17px;background:#a0a0a0;"></div><div style="left:11px;top:292px;width:67px;height:1px;background:#a0a0a0;"></div><div style="left:78px;top:275px;width:1px;height:19px;background:#000;"></div><div style="left:10px;top:293px;width:69px;height:1px;background:#000;"></div><div style="left:10px;top:294px;width:68px;height:18px;background:#f0f0f0;"></div><div style="left:10px;top:294px;width:68px;height:1px;background:#fff;"></div><div style="left:10px;top:294px;width:1px;height:18px;background:#fff;"></div><div style="left:77px;top:295px;width:1px;height:17px;background:#a0a0a0;"></div><div style="left:11px;top:311px;width:67px;height:1px;background:#a0a0a0;"></div><div style="left:78px;top:294px;width:1px;height:19px;background:#000;"></div><div style="left:10px;top:312px;width:69px;height:1px;background:#000;"></div><div style="left:10px;top:313px;width:68px;height:18px;background:#f0f0f0;"></div><div style="left:10px;top:313px;width:68px;height:1px;background:#fff;"></div><div style="left:10px;top:313px;width:1px;height:18px;background:#fff;"></div><div style="left:77px;top:314px;width:1px;height:17px;background:#a0a0a0;"></div><div style="left:11px;top:330px;width:67px;height:1px;background:#a0a0a0;"></div><div style="left:78px;top:313px;width:1px;height:19px;background:#000;"></div><div style="left:10px;top:331px;width:69px;height:1px;background:#000;"></div><div style="left:10px;top:332px;width:68px;height:18px;background:#f0f0f0;"></div><div style="left:10px;top:332px;width:68px;height:1px;background:#fff;"></div><div style="left:10px;top:332px;width:1px;height:18px;background:#fff;"></div><div style="left:77px;top:333px;width:1px;height:17px;background:#a0a0a0;"></div><div style="left:11px;top:349px;width:67px;height:1px;background:#a0a0a0;"></div><div style="left:78px;top:332px;width:1px;height:19px;background:#000;"></div><div style="left:10px;top:350px;width:69px;height:1px;background:#000;"></div><div style="left:10px;top:351px;width:68px;height:18px;background:#f0f0f0;"></div><div style="left:10px;top:351px;width:68px;height:1px;background:#fff;"></div><div style="left:10px;top:351px;width:1px;height:18px;background:#fff;"></div><div style="left:77px;top:352px;width:1px;height:17px;background:#a0a0a0;"></div><div style="left:11px;top:368px;width:67px;height:1px;background:#a0a0a0;"></div><div style="left:78px;top:351px;width:1px;height:19px;background:#000;"></div><div style="left:10px;top:369px;width:69px;height:1px;background:#000;"></div><div style="left:10px;top:370px;width:68px;height:18px;background:#f0f0f0;"></div><div style="left:10px;top:370px;width:68px;height:1px;background:#fff;"></div><div style="left:10px;top:370px;width:1px;height:18px;background:#fff;"></div><div style="left:77px;top:371px;width:1px;height:17px;background:#a0a0a0;"></div><div style="left:11px;top:387px;width:67px;height:1px;background:#a0a0a0;"></div><div style="left:78px;top:370px;width:1px;height:19px;background:#000;"></div><div style="left:10px;top:388px;width:69px;height:1px;background:#000;"></div><div style="left:10px;top:389px;width:68px;height:18px;background:#f0f0f0;"></div><div style="left:10px;top:389px;width:68px;height:1px;background:#fff;"></div><div style="left:10px;top:389px;width:1px;height:18px;background:#fff;"></div><div style="left:77px;top:390px;width:1px;height:17px;background:#a0a0a0;"></div><div style="left:11px;top:406px;width:67px;height:1px;background:#a0a0a0;"></div><div style="left:78px;top:389px;width:1px;height:19px;background:#000;"></div><div style="left:10px;top:407px;width:69px;height:1px;background:#000;"></div><div style="left:10px;top:408px;width:68px;height:18px;background:#f0f0f0;"></div><div style="left:10px;top:408px;width:68px;height:1px;background:#fff;"></div><div style="left:10px;top:408px;width:1px;height:18px;background:#fff;"></div><div style="left:77px;top:409px;width:1px;height:17px;background:#a0a0a0;"></div><div style="left:11px;top:425px;width:67px;height:1px;background:#a0a0a0;"></div><div style="left:78px;top:408px;width:1px;height:19px;background:#000;"></div><div style="left:10px;top:426px;width:69px;height:1px;background:#000;"></div><div style="left:10px;top:427px;width:68px;height:18px;background:#f0f0f0;"></div><div style="left:10px;top:427px;width:68px;height:1px;background:#fff;"></div><div style="left:10px;top:427px;width:1px;height:18px;background:#fff;"></div><div style="left:77px;top:428px;width:1px;height:17px;background:#a0a0a0;"></div><div style="left:11px;top:444px;width:67px;height:1px;background:#a0a0a0;"></div><div style="left:78px;top:427px;width:1px;height:19px;background:#000;"></div><div style="left:10px;top:445px;width:69px;height:1px;background:#000;"></div><div style="left:10px;top:446px;width:68px;height:18px;background:#f0f0f0;"></div><div style="left:10px;top:446px;width:68px;height:1px;background:#fff;"></div><div style="left:10px;top:446px;width:1px;height:18px;background:#fff;"></div><div style="left:77px;top:447px;width:1px;height:17px;background:#a0a0a0;"></div><div style="left:11px;top:463px;width:67px;height:1px;background:#a0a0a0;"></div><div style="left:78px;top:446px;width:1px;height:19px;background:#000;"></div><div style="left:10px;top:464px;width:69px;height:1px;background:#000;"></div><div style="left:10px;top:465px;width:68px;height:18px;background:#f0f0f0;"></div><div style="left:10px;top:465px;width:68px;height:1px;background:#fff;"></div><div style="left:10px;top:465px;width:1px;height:18px;background:#fff;"></div><div style="left:77px;top:466px;width:1px;height:17px;background:#a0a0a0;"></div><div style="left:11px;top:482px;width:67px;height:1px;background:#a0a0a0;"></div><div style="left:78px;top:465px;width:1px;height:19px;background:#000;"></div><div style="left:10px;top:483px;width:69px;height:1px;background:#000;"></div><div style="left:10px;top:484px;width:68px;height:18px;background:#f0f0f0;"></div><div style="left:10px;top:484px;width:68px;height:1px;background:#fff;"></div><div style="left:10px;top:484px;width:1px;height:18px;background:#fff;"></div><div style="left:77px;top:485px;width:1px;height:17px;background:#a0a0a0;"></div><div style="left:11px;top:501px;width:67px;height:1px;background:#a0a0a0;"></div><div style="left:78px;top:484px;width:1px;height:19px;background:#000;"></div><div style="left:10px;top:502px;width:69px;height:1px;background:#000;"></div><div style="left:10px;top:503px;width:68px;height:18px;background:#f0f0f0;"></div><div style="left:10px;top:503px;width:68px;height:1px;background:#fff;"></div><div style="left:10px;top:503px;width:1px;height:18px;background:#fff;"></div><div style="left:77px;top:504px;width:1px;height:17px;background:#a0a0a0;"></div><div style="left:11px;top:520px;width:67px;height:1px;background:#a0a0a0;"></div><div style="left:78px;top:503px;width:1px;height:19px;background:#000;"></div><div style="left:10px;top:521px;width:69px;height:1px;background:#000;"></div><div style="left:10px;top:522px;width:68px;height:18px;background:#f0f0f0;"></div><div style="left:10px;top:522px;width:68px;height:1px;background:#fff;"></div><div style="left:10px;top:522px;width:1px;height:18px;background:#fff;"></div><div style="left:77px;top:523px;width:1px;height:17px;background:#a0a0a0;"></div><div style="left:11px;top:539px;width:67px;height:1px;background:#a0a0a0;"></div><div style="left:78px;top:522px;width:1px;height:19px;background:#000;"></div><div style="left:10px;top:540px;width:69px;height:1px;background:#000;"></div><div style="left:10px;top:541px;width:68px;height:18px;background:#f0f0f0;"></div><div style="left:10px;top:541px;width:68px;height:1px;background:#fff;"></div><div style="left:10px;top:541px;width:1px;height:18px;background:#fff;"></div><div style="left:77px;top:542px;width:1px;height:17px;background:#a0a0a0;"></div><div style="left:11px;top:558px;width:67px;height:1px;background:#a0a0a0;"></div><div style="left:78px;top:541px;width:1px;height:19px;background:#000;"></div><div style="left:10px;top:559px;width:69px;height:1px;background:#000;"></div><div style="left:10px;top:560px;width:68px;height:18px;background:#f0f0f0;"></div><div style="left:10px;top:560px;width:68px;height:1px;background:#fff;"></div><div style="left:10px;top:560px;width:1px;height:18px;background:#fff;"></div><div style="left:77px;top:561px;width:1px;height:17px;background:#a0a0a0;"></div><div style="left:11px;top:577px;width:67px;height:1px;background:#a0a0a0;"></div><div style="left:78px;top:560px;width:1px;height:19px;background:#000;"></div><div style="left:10px;top:578px;width:69px;height:1px;background:#000;"></div><div style="left:10px;top:579px;width:68px;height:18px;background:#f0f0f0;"></div><div style="left:10px;top:579px;width:68px;height:1px;background:#fff;"></div><div style="left:10px;top:579px;width:1px;height:18px;background:#fff;"></div><div style="left:77px;top:580px;width:1px;height:17px;background:#a0a0a0;"></div><div style="left:11px;top:596px;width:67px;height:1px;background:#a0a0a0;"></div><div style="left:78px;top:579px;width:1px;height:19px;background:#000;"></div><div style="left:10px;top:597px;width:69px;height:1px;background:#000;"></div><div style="left:10px;top:598px;width:68px;height:18px;background:#f0f0f0;"></div><div style="left:10px;top:598px;width:68px;height:1px;background:#fff;"></div><div style="left:10px;top:598px;width:1px;height:18px;background:#fff;"></div><div style="left:77px;top:599px;width:1px;height:17px;background:#a0a0a0;"></div><div style="left:11px;top:615px;width:67px;height:1px;background:#a0a0a0;"></div><div style="left:78px;top:598px;width:1px;height:19px;background:#000;"></div><div style="left:10px;top:616px;width:69px;height:1px;background:#000;"></div><div style="left:10px;top:617px;width:68px;height:18px;background:#f0f0f0;"></div><div style="left:10px;top:617px;width:68px;height:1px;background:#fff;"></div><div style="left:10px;top:617px;width:1px;height:18px;background:#fff;"></div><div style="left:77px;top:618px;width:1px;height:17px;background:#a0a0a0;"></div><div style="left:11px;top:634px;width:67px;height:1px;background:#a0a0a0;"></div><div style="left:78px;top:617px;width:1px;height:19px;background:#000;"></div><div style="left:10px;top:635px;width:69px;height:1px;background:#000;"></div><div style="left:10px;top:636px;width:68px;height:18px;background:#f0f0f0;"></div><div style="left:10px;top:636px;width:68px;height:1px;background:#fff;"></div><div style="left:10px;top:636px;width:1px;height:18px;background:#fff;"></div><div style="left:77px;top:637px;width:1px;height:17px;background:#a0a0a0;"></div><div style="left:11px;top:653px;width:67px;height:1px;background:#a0a0a0;"></div><div style="left:78px;top:636px;width:1px;height:19px;background:#000;"></div><div style="left:10px;top:654px;width:69px;height:1px;background:#000;"></div><div style="left:10px;top:655px;width:68px;height:18px;background:#f0f0f0;"></div><div style="left:10px;top:655px;width:68px;height:1px;background:#fff;"></div><div style="left:10px;top:655px;width:1px;height:18px;background:#fff;"></div><div style="left:77px;top:656px;width:1px;height:17px;background:#a0a0a0;"></div><div style="left:11px;top:672px;width:67px;height:1px;background:#a0a0a0;"></div><div style="left:78px;top:655px;width:1px;height:19px;background:#000;"></div><div style="left:10px;top:673px;width:69px;height:1px;background:#000;"></div><div style="left:10px;top:674px;width:68px;height:18px;background:#f0f0f0;"></div><div style="left:10px;top:674px;width:68px;height:1px;background:#fff;"></div><div style="left:10px;top:674px;width:1px;height:18px;background:#fff;"></div><div style="left:77px;top:675px;width:1px;height:17px;background:#a0a0a0;"></div><div style="left:11px;top:691px;width:67px;height:1px;background:#a0a0a0;"></div><div style="left:78px;top:674px;width:1px;height:19px;background:#000;"></div><div style="left:10px;top:692px;width:69px;height:1px;background:#000;"></div><div style="left:10px;top:693px;width:68px;height:18px;background:#f0f0f0;"></div><div style="left:10px;top:693px;width:68px;height:1px;background:#fff;"></div><div style="left:10px;top:693px;width:1px;height:18px;background:#fff;"></div><div style="left:77px;top:694px;width:1px;height:17px;background:#a0a0a0;"></div><div style="left:11px;top:710px;width:67px;height:1px;background:#a0a0a0;"></div><div style="left:78px;top:693px;width:1px;height:19px;background:#000;"></div><div style="left:10px;top:711px;width:69px;height:1px;background:#000;"></div><div style="left:10px;top:712px;width:68px;height:18px;background:#f0f0f0;"></div><div style="left:10px;top:712px;width:68px;height:1px;background:#fff;"></div><div style="left:10px;top:712px;width:1px;height:18px;background:#fff;"></div><div style="left:77px;top:713px;width:1px;height:17px;background:#a0a0a0;"></div><div style="left:11px;top:729px;width:67px;height:1px;background:#a0a0a0;"></div><div style="left:78px;top:712px;width:1px;height:19px;background:#000;"></div><div style="left:10px;top:730px;width:69px;height:1px;background:#000;"></div><div style="left:10px;top:731px;width:68px;height:18px;background:#f0f0f0;"></div><div style="left:10px;top:731px;width:68px;height:1px;background:#fff;"></div><div style="left:10px;top:731px;width:1px;height:18px;background:#fff;"></div><div style="left:77px;top:732px;width:1px;height:17px;background:#a0a0a0;"></div><div style="left:11px;top:748px;width:67px;height:1px;background:#a0a0a0;"></div><div style="left:78px;top:731px;width:1px;height:19px;background:#000;"></div><div style="left:10px;top:749px;width:69px;height:1px;background:#000;"></div><div style="left:10px;top:750px;width:68px;height:18px;background:#f0f0f0;"></div><div style="left:10px;top:750px;width:68px;height:1px;background:#fff;"></div><div style="left:10px;top:750px;width:1px;height:18px;background:#fff;"></div><div style="left:77px;top:751px;width:1px;height:17px;background:#a0a0a0;"></div><div style="left:11px;top:767px;width:67px;height:1px;background:#a0a0a0;"></div><div style="left:78px;top:750px;width:1px;height:19px;background:#000;"></div><div style="left:10px;top:768px;width:69px;height:1px;background:#000;"></div><div style="left:10px;top:769px;width:68px;height:18px;background:#f0f0f0;"></div><div style="left:10px;top:769px;width:68px;height:1px;background:#fff;"></div><div style="left:10px;top:769px;width:1px;height:18px;background:#fff;"></div><div style="left:77px;top:770px;width:1px;height:17px;background:#a0a0a0;"></div><div style="left:11px;top:786px;width:67px;height:1px;background:#a0a0a0;"></div><div style="left:78px;top:769px;width:1px;height:19px;background:#000;"></div><div style="left:10px;top:787px;width:69px;height:1px;background:#000;"></div><div style="left:10px;top:788px;width:68px;height:18px;background:#f0f0f0;"></div><div style="left:10px;top:788px;width:68px;height:1px;background:#fff;"></div><div style="left:10px;top:788px;width:1px;height:18px;background:#fff;"></div><div style="left:77px;top:789px;width:1px;height:17px;background:#a0a0a0;"></div><div style="left:11px;top:805px;width:67px;height:1px;background:#a0a0a0;"></div><div style="left:78px;top:788px;width:1px;height:19px;background:#000;"></div><div style="left:10px;top:806px;width:69px;height:1px;background:#000;"></div><div style="left:10px;top:807px;width:68px;height:18px;background:#f0f0f0;"></div><div style="left:10px;top:807px;width:68px;height:1px;background:#fff;"></div><div style="left:10px;top:807px;width:1px;height:18px;background:#fff;"></div><div style="left:77px;top:808px;width:1px;height:17px;background:#a0a0a0;"></div><div style="left:11px;top:824px;width:67px;height:1px;background:#a0a0a0;"></div><div style="left:78px;top:807px;width:1px;height:19px;background:#000;"></div><div style="left:10px;top:825px;width:69px;height:1px;background:#000;"></div><div style="left:10px;top:826px;width:68px;height:18px;background:#f0f0f0;"></div><div style="left:10px;top:826px;width:68px;height:1px;background:#fff;"></div><div style="left:10px;top:826px;width:1px;height:18px;background:#fff;"></div><div style="left:77px;top:827px;width:1px;height:17px;background:#a0a0a0;"></div><div style="left:11px;top:843px;width:67px;height:1px;background:#a0a0a0;"></div><div style="left:78px;top:826px;width:1px;height:19px;background:#000;"></div><div style="left:10px;top:844px;width:69px;height:1px;background:#000;"></div><div style="left:10px;top:845px;width:68px;height:18px;background:#f0f0f0;"></div><div style="left:10px;top:845px;width:68px;height:1px;background:#fff;"></div><div style="left:10px;top:845px;width:1px;height:18px;background:#fff;"></div><div style="left:77px;top:846px;width:1px;height:17px;background:#a0a0a0;"></div><div style="left:11px;top:862px;width:67px;height:1px;background:#a0a0a0;"></div><div style="left:78px;top:845px;width:1px;height:19px;background:#000;"></div><div style="left:10px;top:863px;width:69px;height:1px;background:#000;"></div><div style="left:10px;top:864px;width:68px;height:18px;background:#f0f0f0;"></div><div style="left:10px;top:864px;width:68px;height:1px;background:#fff;"></div><div style="left:10px;top:864px;width:1px;height:18px;background:#fff;"></div><div style="left:77px;top:865px;width:1px;height:17px;background:#a0a0a0;"></div><div style="left:11px;top:881px;width:67px;height:1px;background:#a0a0a0;"></div><div style="left:78px;top:864px;width:1px;height:19px;background:#000;"></div><div style="left:10px;top:882px;width:69px;height:1px;background:#000;"></div><div style="left:10px;top:883px;width:68px;height:18px;background:#f0f0f0;"></div><div style="left:10px;top:883px;width:68px;height:1px;background:#fff;"></div><div style="left:10px;top:883px;width:1px;height:18px;background:#fff;"></div><div style="left:77px;top:884px;width:1px;height:17px;background:#a0a0a0;"></div><div style="left:11px;top:900px;width:67px;height:1px;background:#a0a0a0;"></div><div style="left:78px;top:883px;width:1px;height:19px;background:#000;"></div><div style="left:10px;top:901px;width:69px;height:1px;background:#000;"></div><div style="left:10px;top:902px;width:68px;height:18px;background:#f0f0f0;"></div><div style="left:10px;top:902px;width:68px;height:1px;background:#fff;"></div><div style="left:10px;top:902px;width:1px;height:18px;background:#fff;"></div><div style="left:77px;top:903px;width:1px;height:17px;background:#a0a0a0;"></div><div style="left:11px;top:919px;width:67px;height:1px;background:#a0a0a0;"></div><div style="left:78px;top:902px;width:1px;height:19px;background:#000;"></div><div style="left:10px;top:920px;width:69px;height:1px;background:#000;"></div><div style="left:10px;top:921px;width:68px;height:18px;background:#f0f0f0;"></div><div style="left:10px;top:921px;width:68px;height:1px;background:#fff;"></div><div style="left:10px;top:921px;width:1px;height:18px;background:#fff;"></div><div style="left:77px;top:922px;width:1px;height:17px;background:#a0a0a0;"></div><div style="left:11px;top:938px;width:67px;height:1px;background:#a0a0a0;"></div><div style="left:78px;top:921px;width:1px;height:19px;background:#000;"></div><div style="left:10px;top:939px;width:69px;height:1px;background:#000;"></div><div style="left:10px;top:940px;width:68px;height:12px;background:#f0f0f0;"></div><div style="left:10px;top:940px;width:68px;height:1px;background:#fff;"></div><div style="left:10px;top:940px;width:1px;height:12px;background:#fff;"></div><div style="left:77px;top:941px;width:1px;height:11px;background:#a0a0a0;"></div><div style="left:78px;top:940px;width:1px;height:12px;background:#000;"></div><div style="left:147px;top:161px;width:70px;height:18px;background:#ff8080;"></div><div style="left:1247px;top:161px;width:66px;height:18px;background:#ff8080;"></div><div style="left:1314px;top:161px;width:66px;height:18px;background:#ff8080;"></div><div style="left:147px;top:180px;width:70px;height:18px;background:#00ff00;"></div><div style="left:1314px;top:180px;width:66px;height:18px;background:#ff8080;"></div><div style="left:147px;top:199px;width:70px;height:18px;background:#00ff00;"></div><div style="left:1247px;top:199px;width:66px;height:18px;background:#00ff00;"></div><div style="left:1381px;top:199px;width:66px;height:18px;background:#00ff00;"></div><div style="left:147px;top:218px;width:70px;height:18px;background:#ff8080;"></div><div style="left:1247px;top:218px;width:66px;height:18px;background:#ff8080;"></div><div style="left:1314px;top:218px;width:66px;height:18px;background:#ff8080;"></div><div style="left:147px;top:237px;width:70px;height:18px;background:#ff8080;"></div><div style="left:1314px;top:237px;width:66px;height:18px;background:#ff8080;"></div><div style="left:147px;top:256px;width:70px;height:18px;background:#ff8080;"></div><div style="left:1247px;top:256px;width:66px;height:18px;background:#ff8080;"></div><div style="left:1314px;top:256px;width:66px;height:18px;background:#ff8080;"></div><div style="left:147px;top:275px;width:70px;height:18px;background:#ff8080;"></div><div style="left:1314px;top:275px;width:66px;height:18px;background:#ff8080;"></div><div style="left:147px;top:294px;width:70px;height:18px;background:#ff8080;"></div><div style="left:1247px;top:294px;width:66px;height:18px;background:#ff8080;"></div><div style="left:1314px;top:294px;width:66px;height:18px;background:#ff8080;"></div><div style="left:147px;top:313px;width:70px;height:18px;background:#ff8080;"></div><div style="left:1247px;top:313px;width:66px;height:18px;background:#ff8080;"></div><div style="left:1314px;top:313px;width:66px;height:18px;background:#ff8080;"></div><div style="left:147px;top:332px;width:70px;height:18px;background:#ff8080;"></div><div style="left:1247px;top:332px;width:66px;height:18px;background:#ff8080;"></div><div style="left:1314px;top:332px;width:66px;height:18px;background:#ff8080;"></div><div style="left:147px;top:351px;width:70px;height:18px;background:#ff8080;"></div><div style="left:1247px;top:351px;width:66px;height:18px;background:#ff8080;"></div><div style="left:1314px;top:351px;width:66px;height:18px;background:#ff8080;"></div><div style="left:147px;top:370px;width:70px;height:18px;background:#ff8080;"></div><div style="left:1247px;top:370px;width:66px;height:18px;background:#ff8080;"></div><div style="left:1314px;top:370px;width:66px;height:18px;background:#ff8080;"></div><div style="left:147px;top:484px;width:70px;height:18px;background:#ff8080;"></div><div style="left:1247px;top:484px;width:66px;height:18px;background:#ff8080;"></div><div style="left:1314px;top:484px;width:66px;height:18px;background:#ff8080;"></div><div style="left:1381px;top:484px;width:66px;height:18px;background:#00ff00;"></div><div style="left:147px;top:503px;width:70px;height:18px;background:#00ff00;"></div><div style="left:1247px;top:503px;width:66px;height:18px;background:#00ff00;"></div><div style="left:1314px;top:503px;width:66px;height:18px;background:#ff8080;"></div><div style="left:1381px;top:503px;width:66px;height:18px;background:#00ff00;"></div><div style="left:147px;top:522px;width:70px;height:18px;background:#ff8080;"></div><div style="left:1247px;top:522px;width:66px;height:18px;background:#ff8080;"></div><div style="left:1314px;top:522px;width:66px;height:18px;background:#ff8080;"></div><div style="left:1381px;top:522px;width:66px;height:18px;background:#00ff00;"></div><div style="left:147px;top:541px;width:70px;height:18px;background:#ff8080;"></div><div style="left:1247px;top:541px;width:66px;height:18px;background:#00ff00;"></div><div style="left:1314px;top:541px;width:66px;height:18px;background:#ff8080;"></div><div style="left:1381px;top:541px;width:66px;height:18px;background:#00ff00;"></div><div style="left:147px;top:560px;width:70px;height:18px;background:#ff8080;"></div><div style="left:1247px;top:560px;width:66px;height:18px;background:#00ff00;"></div><div style="left:1381px;top:560px;width:66px;height:18px;background:#00ff00;"></div><div style="left:147px;top:579px;width:70px;height:18px;background:#ff8080;"></div><div style="left:1247px;top:579px;width:66px;height:18px;background:#00ff00;"></div><div style="left:1314px;top:579px;width:66px;height:18px;background:#ff8080;"></div><div style="left:1381px;top:579px;width:66px;height:18px;background:#00ff00;"></div><div style="left:147px;top:598px;width:70px;height:18px;background:#ff8080;"></div><div style="left:218px;top:598px;width:66px;height:18px;background:#00ff00;"></div><div style="left:1247px;top:598px;width:66px;height:18px;background:#00ff00;"></div><div style="left:1381px;top:598px;width:66px;height:18px;background:#00ff00;"></div><div style="left:147px;top:617px;width:70px;height:18px;background:#ff8080;"></div><div style="left:218px;top:617px;width:66px;height:18px;background:#00ff00;"></div><div style="left:1247px;top:617px;width:66px;height:18px;background:#00ff00;"></div><div style="left:1381px;top:617px;width:66px;height:18px;background:#00ff00;"></div><div style="left:147px;top:636px;width:70px;height:18px;background:#00ff00;"></div><div style="left:1247px;top:636px;width:66px;height:18px;background:#ff8080;"></div><div style="left:147px;top:655px;width:70px;height:18px;background:#00ff00;"></div><div style="left:1247px;top:655px;width:66px;height:18px;background:#00ff00;"></div><div style="left:1314px;top:655px;width:66px;height:18px;background:#ff8080;"></div><div style="left:1381px;top:655px;width:66px;height:18px;background:#00ff00;"></div><div style="left:79px;top:161px;width:67px;height:18px;background:#0078d7;"></div><div style="left:79px;top:161px;width:67px;height:18px;border:1px dotted #ff8c00;"></div><div style="left:79px;top:179px;width:1436px;height:1px;background:#c0c0c0;"></div><div style="left:79px;top:198px;width:1436px;height:1px;background:#c0c0c0;"></div><div style="left:79px;top:217px;width:1436px;height:1px;background:#c0c0c0;"></div><div style="left:79px;top:236px;width:1436px;height:1px;background:#c0c0c0;"></div><div style="left:79px;top:255px;width:1436px;height:1px;background:#c0c0c0;"></div><div style="left:79px;top:274px;width:1436px;height:1px;background:#c0c0c0;"></div><div style="left:79px;top:293px;width:1436px;height:1px;background:#c0c0c0;"></div><div style="left:79px;top:312px;width:1436px;height:1px;background:#c0c0c0;"></div><div style="left:79px;top:331px;width:1436px;height:1px;background:#c0c0c0;"></div><div style="left:79px;top:350px;width:1436px;height:1px;background:#c0c0c0;"></div><div style="left:79px;top:369px;width:1436px;height:1px;background:#c0c0c0;"></div><div style="left:79px;top:388px;width:1436px;height:1px;background:#c0c0c0;"></div><div style="left:79px;top:407px;width:1436px;height:1px;background:#c0c0c0;"></div><div style="left:79px;top:426px;width:1436px;height:1px;background:#c0c0c0;"></div><div style="left:79px;top:445px;width:1436px;height:1px;background:#c0c0c0;"></div><div style="left:79px;top:464px;width:1436px;height:1px;background:#c0c0c0;"></div><div style="left:79px;top:483px;width:1436px;height:1px;background:#c0c0c0;"></div><div style="left:79px;top:502px;width:1436px;height:1px;background:#c0c0c0;"></div><div style="left:79px;top:521px;width:1436px;height:1px;background:#c0c0c0;"></div><div style="left:79px;top:540px;width:1436px;height:1px;background:#c0c0c0;"></div><div style="left:79px;top:559px;width:1436px;height:1px;background:#c0c0c0;"></div><div style="left:79px;top:578px;width:1436px;height:1px;background:#c0c0c0;"></div><div style="left:79px;top:597px;width:1436px;height:1px;background:#c0c0c0;"></div><div style="left:79px;top:616px;width:1436px;height:1px;background:#c0c0c0;"></div><div style="left:79px;top:635px;width:1436px;height:1px;background:#c0c0c0;"></div><div style="left:79px;top:654px;width:1436px;height:1px;background:#c0c0c0;"></div><div style="left:79px;top:673px;width:1436px;height:1px;background:#c0c0c0;"></div><div style="left:79px;top:692px;width:1436px;height:1px;background:#c0c0c0;"></div><div style="left:79px;top:711px;width:1436px;height:1px;background:#c0c0c0;"></div><div style="left:79px;top:730px;width:1436px;height:1px;background:#c0c0c0;"></div><div style="left:79px;top:749px;width:1436px;height:1px;background:#c0c0c0;"></div><div style="left:79px;top:768px;width:1436px;height:1px;background:#c0c0c0;"></div><div style="left:79px;top:787px;width:1436px;height:1px;background:#c0c0c0;"></div><div style="left:79px;top:806px;width:1436px;height:1px;background:#c0c0c0;"></div><div style="left:79px;top:825px;width:1436px;height:1px;background:#c0c0c0;"></div><div style="left:79px;top:844px;width:1436px;height:1px;background:#c0c0c0;"></div><div style="left:79px;top:863px;width:1436px;height:1px;background:#c0c0c0;"></div><div style="left:79px;top:882px;width:1436px;height:1px;background:#c0c0c0;"></div><div style="left:79px;top:901px;width:1436px;height:1px;background:#c0c0c0;"></div><div style="left:79px;top:920px;width:1436px;height:1px;background:#c0c0c0;"></div><div style="left:79px;top:939px;width:1436px;height:1px;background:#c0c0c0;"></div><div style="left:146px;top:161px;width:1px;height:791px;background:#c0c0c0;"></div><div style="left:217px;top:161px;width:1px;height:791px;background:#c0c0c0;"></div><div style="left:284px;top:161px;width:1px;height:791px;background:#c0c0c0;"></div><div style="left:344px;top:161px;width:1px;height:791px;background:#c0c0c0;"></div><div style="left:411px;top:161px;width:1px;height:791px;background:#c0c0c0;"></div><div style="left:478px;top:161px;width:1px;height:791px;background:#c0c0c0;"></div><div style="left:545px;top:161px;width:1px;height:791px;background:#c0c0c0;"></div><div style="left:612px;top:161px;width:1px;height:791px;background:#c0c0c0;"></div><div style="left:679px;top:161px;width:1px;height:791px;background:#c0c0c0;"></div><div style="left:746px;top:161px;width:1px;height:791px;background:#c0c0c0;"></div><div style="left:813px;top:161px;width:1px;height:791px;background:#c0c0c0;"></div><div style="left:880px;top:161px;width:1px;height:791px;background:#c0c0c0;"></div><div style="left:947px;top:161px;width:1px;height:791px;background:#c0c0c0;"></div><div style="left:1179px;top:161px;width:1px;height:791px;background:#c0c0c0;"></div><div style="left:1246px;top:161px;width:1px;height:791px;background:#c0c0c0;"></div><div style="left:1313px;top:161px;width:1px;height:791px;background:#c0c0c0;"></div><div style="left:1380px;top:161px;width:1px;height:791px;background:#c0c0c0;"></div><div style="left:1447px;top:161px;width:1px;height:791px;background:#c0c0c0;"></div><div style="left:1514px;top:161px;width:1px;height:791px;background:#c0c0c0;"></div><div class="t g" style="left:12px;top:164px;">INDU.X</div><div class="t g" style="left:12px;top:183px;">TRAN.X</div><div class="t g" style="left:12px;top:202px;">UTIL.X</div><div class="t g" style="left:12px;top:221px;">COMPX.X</div><div class="t g" style="left:12px;top:240px;">NYA.X</div><div class="t g" style="left:12px;top:259px;">MID.X</div><div class="t g" style="left:12px;top:278px;">XAX.X</div><div class="t g" style="left:12px;top:297px;">OEX.XO</div><div class="t g" style="left:12px;top:316px;">SPX.XO</div><div class="t g" style="left:12px;top:335px;">NDX.X</div><div class="t g" style="left:12px;top:354px;">SPY</div><div class="t g" style="left:12px;top:373px;">RUT.X</div><div class="t g" style="left:12px;top:487px;">IINA.Z</div><div class="t g" style="left:12px;top:506px;">IIND.Z</div><div class="t g" style="left:12px;top:525px;">IINU.Z</div><div class="t g" style="left:12px;top:544px;">VINA.Z</div><div class="t g" style="left:12px;top:563px;">VIND.Z</div><div class="t g" style="left:12px;top:582px;">VINU.Z</div><div class="t g" style="left:12px;top:601px;">FINH.Z</div><div class="t g" style="left:12px;top:620px;">FINL.Z</div><div class="t g" style="left:12px;top:639px;">TICK.Z</div><div class="t g" style="left:12px;top:658px;">TRIN.Z</div><svg style="left:0;top:0" width="1696" height="1024" shape-rendering="crispEdges"><defs><path id="d0" d="M1 0h3v1h-3zM0 1h1v1h-1zM4 1h1v1h-1zM0 2h1v1h-1zM4 2h1v1h-1zM0 3h1v1h-1zM4 3h1v1h-1zM0 4h1v1h-1zM4 4h1v1h-1zM0 5h1v1h-1zM4 5h1v1h-1zM0 6h1v1h-1zM4 6h1v1h-1zM0 7h1v1h-1zM4 7h1v1h-1zM0 8h1v1h-1zM4 8h1v1h-1zM1 9h3v1h-3z"/><path id="d1" d="M2 0h1v1h-1zM0 1h3v1h-3zM2 2h1v1h-1zM2 3h1v1h-1zM2 4h1v1h-1zM2 5h1v1h-1zM2 6h1v1h-1zM2 7h1v1h-1zM2 8h1v1h-1zM2 9h1v1h-1z"/><path id="d2" d="M1 0h3v1h-3zM0 1h1v1h-1zM4 1h1v1h-1zM0 2h1v1h-1zM4 2h1v1h-1zM4 3h1v1h-1zM3 4h1v1h-1zM2 5h1v1h-1zM1 6h1v1h-1zM0 7h1v1h-1zM0 8h1v1h-1zM0 9h5v1h-5z"/><path id="d3" d="M1 0h3v1h-3zM0 1h1v1h-1zM4 1h1v1h-1zM4 2h1v1h-1zM4 3h1v1h-1zM2 4h2v1h-2zM4 5h1v1h-1zM4 6h1v1h-1zM4 7h1v1h-1zM0 8h1v1h-1zM4 8h1v1h-1zM1 9h3v1h-3z"/><path id="d4" d="M4 0h1v1h-1zM3 1h2v1h-2zM2 2h1v1h-1zM4 2h1v1h-1zM2 3h1v1h-1zM4 3h1v1h-1zM1 4h1v1h-1zM4 4h1v1h-1zM0 5h1v1h-1zM4 5h1v1h-1zM0 6h5v1h-5zM4 7h1v1h-1zM4 8h1v1h-1zM4 9h1v1h-1z"/><path id="d5" d="M0 0h5v1h-5zM0 1h1v1h-1zM0 2h1v1h-1zM0 3h1v1h-1zM0 4h4v1h-4zM0 5h1v1h-1zM4 5h1v1h-1zM4 6h1v1h-1zM4 7h1v1h-1zM0 8h1v1h-1zM4 8h1v1h-1zM1 9h3v1h-3z"/><path id="d6" d="M1 0h3v1h-3zM0 1h1v1h-1zM4 1h1v1h-1zM0 2h1v1h-1zM0 3h1v1h-1zM0 4h1v1h-1zM2 4h2v1h-2zM0 5h2v1h-2zM4 5h1v1h-1zM0 6h1v1h-1zM4 6h1v1h-1zM0 7h1v1h-1zM4 7h1v1h-1zM0 8h1v1h-1zM4 8h1v1h-1zM1 9h3v1h-3z"/><path id="d7" d="M0 0h5v1h-5zM4 1h1v1h-1zM4 2h1v1h-1zM3 3h1v1h-1zM3 4h1v1h-1zM2 5h1v1h-1zM2 6h1v1h-1zM1 7h1v1h-1zM1 8h1v1h-1zM1 9h1v1h-1z"/><path id="d8" d="M1 0h3v1h-3zM0 1h1v1h-1zM4 1h1v1h-1zM0 2h1v1h-1zM4 2h1v1h-1zM0 3h1v1h-1zM4 3h1v1h-1zM1 4h3v1h-3zM0 5h1v1h-1zM4 5h1v1h-1zM0 6h1v1h-1zM4 6h1v1h-1zM0 7h1v1h-1zM4 7h1v1h-1zM0 8h1v1h-1zM4 8h1v1h-1zM1 9h3v1h-3z"/><path id="d9" d="M1 0h3v1h-3zM0 1h1v1h-1zM4 1h1v1h-1zM0 2h1v1h-1zM4 2h1v1h-1zM0 3h1v1h-1zM4 3h1v1h-1zM0 4h1v1h-1zM3 4h2v1h-2zM1 5h2v1h-2zM4 5h1v1h-1zM4 6h1v1h-1zM4 7h1v1h-1zM0 8h1v1h-1zM4 8h1v1h-1zM1 9h3v1h-3z"/><path id="ddot" d="M0 9h1v1h-1z"/><path id="dcol" d="M0 3h1v1h-1zM0 9h1v1h-1z"/><path id="dcom" d="M0 9h1v1h-1zM-1 10h1v1h-1z"/><path id="ddash" d="M-1 5h4v1h-4z"/></defs><g fill="#000"><use href="#d4" x="85" y="166" fill="#fff"/><use href="#d6" x="92" y="166" fill="#fff"/><use href="#d1" x="99" y="166" fill="#fff"/><use href="#d3" x="106" y="166" fill="#fff"/><use href="#d1" x="113" y="166" fill="#fff"/><use href="#ddot" x="120" y="166" fill="#fff"/><use href="#d3" x="123" y="166" fill="#fff"/><use href="#d8" x="130" y="166" fill="#fff"/><use href="#ddash" x="153" y="166"/><use href="#d1" x="160" y="166"/><use href="#d6" x="167" y="166"/><use href="#d1" x="174" y="166"/><use href="#ddot" x="181" y="166"/><use href="#d4" x="184" y="166"/><use href="#d0" x="191" y="166"/><use href="#d4" x="224" y="166"/><use href="#d6" x="231" y="166"/><use href="#d4" x="238" y="166"/><use href="#d5" x="245" y="166"/><use href="#d3" x="252" y="166"/><use href="#ddot" x="259" y="166"/><use href="#d0" x="262" y="166"/><use href="#d7" x="269" y="166"/><use href="#d4" x="291" y="166"/><use href="#d6" x="298" y="166"/><use href="#d0" x="305" y="166"/><use href="#d9" x="312" y="166"/><use href="#d6" x="319" y="166"/><use href="#ddot" x="326" y="166"/><use href="#d3" x="329" y="166"/><use href="#d9" x="336" y="166"/><use href="#d4" x="351" y="166"/><use href="#d6" x="358" y="166"/><use href="#d3" x="365" y="166"/><use href="#d6" x="372" y="166"/><use href="#d8" x="379" y="166"/><use href="#ddot" x="386" y="166"/><use href="#d9" x="389" y="166"/><use href="#d4" x="396" y="166"/><use href="#d3" x="415" y="166"/><use href="#d0" x="422" y="166"/><use href="#d4" x="429" y="166"/><use href="#dcom" x="436" y="166"/><use href="#d4" x="439" y="166"/><use href="#d0" x="446" y="166"/><use href="#d5" x="453" y="166"/><use href="#dcom" x="460" y="166"/><use href="#d8" x="463" y="166"/><use href="#d1" x="470" y="166"/><path d="M477 167h1v1h-1zM477 168h1v1h-1zM477 169h1v1h-1zM477 170h1v1h-1zM477 171h1v1h-1zM477 172h1v1h-1zM477 173h1v1h-1zM477 174h1v1h-1z" fill="#000"/><use href="#d0" x="482" y="166"/><use href="#d9" x="489" y="166"/><use href="#ddash" x="496" y="166"/><use href="#d2" x="500" y="166"/><use href="#d4" x="507" y="166"/><use href="#ddash" x="514" y="166"/><use href="#d2" x="518" y="166"/><use href="#d5" x="525" y="166"/><use href="#d1" x="549" y="166"/><use href="#d3" x="556" y="166"/><use href="#dcol" x="563" y="166"/><use href="#d4" x="566" y="166"/><use href="#d2" x="573" y="166"/><use href="#dcol" x="580" y="166"/><use href="#d5" x="583" y="166"/><use href="#d4" x="590" y="166"/><use href="#d3" x="625" y="166"/><use href="#d5" x="632" y="166"/><use href="#d6" x="639" y="166"/><use href="#ddot" x="646" y="166"/><use href="#d6" x="649" y="166"/><use href="#d8" x="656" y="166"/><use href="#ddash" x="686" y="166"/><use href="#d0" x="690" y="166"/><use href="#ddot" x="697" y="166"/><use href="#d3" x="700" y="166"/><use href="#d5" x="707" y="166"/><use href="#d4" x="753" y="166"/><use href="#d6" x="760" y="166"/><use href="#d2" x="767" y="166"/><use href="#d9" x="774" y="166"/><use href="#d2" x="781" y="166"/><use href="#ddot" x="788" y="166"/><use href="#d7" x="791" y="166"/><use href="#d8" x="798" y="166"/><path d="M837 169h1v1h-1zM837 170h1v1h-1zM838 171h1v1h-1zM838 172h1v1h-1zM839 173h1v1h-1zM839 174h1v1h-1zM840 175h1v1h-1zM841 173h1v1h-1zM841 174h1v1h-1zM842 171h1v1h-1zM842 172h1v1h-1zM843 169h1v1h-1zM843 170h1v1h-1z"/><use href="#d4" x="887" y="166"/><use href="#d6" x="894" y="166"/><use href="#d1" x="901" y="166"/><use href="#d3" x="908" y="166"/><use href="#d8" x="915" y="166"/><use href="#ddot" x="922" y="166"/><use href="#d9" x="925" y="166"/><use href="#d8" x="932" y="166"/><use href="#d1" x="969" y="166"/><use href="#d1" x="1183" y="166"/><use href="#d3" x="1190" y="166"/><use href="#dcol" x="1197" y="166"/><use href="#d4" x="1200" y="166"/><use href="#d2" x="1207" y="166"/><use href="#dcol" x="1214" y="166"/><use href="#d5" x="1217" y="166"/><use href="#d4" x="1224" y="166"/><use href="#ddash" x="1253" y="166"/><use href="#d0" x="1257" y="166"/><use href="#ddot" x="1264" y="166"/><use href="#d5" x="1267" y="166"/><use href="#d1" x="1274" y="166"/><use href="#d0" x="1323" y="166"/><use href="#ddot" x="1330" y="166"/><use href="#d7" x="1333" y="166"/><use href="#d0" x="1340" y="166"/><use href="#d0" x="1390" y="166"/><use href="#ddot" x="1397" y="166"/><use href="#d0" x="1400" y="166"/><use href="#d8" x="1407" y="166"/><use href="#d2" x="1451" y="166"/><use href="#d1" x="85" y="185"/><use href="#d5" x="92" y="185"/><use href="#d7" x="99" y="185"/><use href="#d0" x="106" y="185"/><use href="#d8" x="113" y="185"/><use href="#ddot" x="120" y="185"/><use href="#d8" x="123" y="185"/><use href="#d5" x="130" y="185"/><use href="#d5" x="165" y="185"/><use href="#ddot" x="172" y="185"/><use href="#d4" x="175" y="185"/><use href="#d9" x="182" y="185"/><use href="#d1" x="224" y="185"/><use href="#d5" x="231" y="185"/><use href="#d8" x="238" y="185"/><use href="#d3" x="245" y="185"/><use href="#d3" x="252" y="185"/><use href="#ddot" x="259" y="185"/><use href="#d6" x="262" y="185"/><use href="#d1" x="269" y="185"/><use href="#d1" x="291" y="185"/><use href="#d5" x="298" y="185"/><use href="#d6" x="305" y="185"/><use href="#d3" x="312" y="185"/><use href="#d6" x="319" y="185"/><use href="#ddot" x="326" y="185"/><use href="#d3" x="329" y="185"/><use href="#d6" x="336" y="185"/><use href="#d1" x="351" y="185"/><use href="#d5" x="358" y="185"/><use href="#d6" x="365" y="185"/><use href="#d9" x="372" y="185"/><use href="#d9" x="379" y="185"/><use href="#ddot" x="386" y="185"/><use href="#d4" x="389" y="185"/><use href="#d7" x="396" y="185"/><use href="#d1" x="415" y="185"/><use href="#d3" x="422" y="185"/><use href="#d3" x="429" y="185"/><use href="#dcom" x="436" y="185"/><use href="#d4" x="439" y="185"/><use href="#d1" x="446" y="185"/><use href="#d8" x="453" y="185"/><use href="#dcom" x="460" y="185"/><use href="#d1" x="463" y="185"/><use href="#d2" x="470" y="185"/><path d="M477 186h1v1h-1zM477 187h1v1h-1zM477 192h1v1h-1zM477 193h1v1h-1zM477 194h1v1h-1z" fill="#000"/><use href="#d0" x="482" y="185"/><use href="#d9" x="489" y="185"/><use href="#ddash" x="496" y="185"/><use href="#d2" x="500" y="185"/><use href="#d4" x="507" y="185"/><use href="#ddash" x="514" y="185"/><use href="#d2" x="518" y="185"/><use href="#d5" x="525" y="185"/><use href="#d1" x="549" y="185"/><use href="#d3" x="556" y="185"/><use href="#dcol" x="563" y="185"/><use href="#d4" x="566" y="185"/><use href="#d2" x="573" y="185"/><use href="#dcol" x="580" y="185"/><use href="#d5" x="583" y="185"/><use href="#d4" x="590" y="185"/><use href="#d1" x="625" y="185"/><use href="#d9" x="632" y="185"/><use href="#d7" x="639" y="185"/><use href="#ddot" x="646" y="185"/><use href="#d2" x="649" y="185"/><use href="#d5" x="656" y="185"/><use href="#d0" x="689" y="185"/><use href="#ddot" x="696" y="185"/><use href="#d0" x="699" y="185"/><use href="#d3" x="706" y="185"/><use href="#d1" x="753" y="185"/><use href="#d5" x="760" y="185"/><use href="#d7" x="767" y="185"/><use href="#d0" x="774" y="185"/><use href="#d3" x="781" y="185"/><use href="#ddot" x="788" y="185"/><use href="#d3" x="791" y="185"/><use href="#d6" x="798" y="185"/><use href="#d1" x="887" y="185"/><use href="#d5" x="894" y="185"/><use href="#d7" x="901" y="185"/><use href="#d1" x="908" y="185"/><use href="#d3" x="915" y="185"/><use href="#ddot" x="922" y="185"/><use href="#d7" x="925" y="185"/><use href="#d6" x="932" y="185"/><use href="#d1" x="969" y="185"/><use href="#d1" x="1183" y="185"/><use href="#d3" x="1190" y="185"/><use href="#dcol" x="1197" y="185"/><use href="#d4" x="1200" y="185"/><use href="#d2" x="1207" y="185"/><use href="#dcol" x="1214" y="185"/><use href="#d5" x="1217" y="185"/><use href="#d4" x="1224" y="185"/><use href="#d0" x="1256" y="185"/><use href="#ddot" x="1263" y="185"/><use href="#d0" x="1266" y="185"/><use href="#d6" x="1273" y="185"/><use href="#d0" x="1323" y="185"/><use href="#ddot" x="1330" y="185"/><use href="#d7" x="1333" y="185"/><use href="#d9" x="1340" y="185"/><use href="#d0" x="1390" y="185"/><use href="#ddot" x="1397" y="185"/><use href="#d4" x="1400" y="185"/><use href="#d6" x="1407" y="185"/><use href="#d2" x="1451" y="185"/><use href="#d1" x="88" y="204"/><use href="#d1" x="95" y="204"/><use href="#d0" x="102" y="204"/><use href="#d4" x="109" y="204"/><use href="#ddot" x="116" y="204"/><use href="#d6" x="119" y="204"/><use href="#d6" x="126" y="204"/><use href="#d5" x="165" y="204"/><use href="#ddot" x="172" y="204"/><use href="#d3" x="175" y="204"/><use href="#d5" x="182" y="204"/><use href="#d1" x="227" y="204"/><use href="#d1" x="234" y="204"/><use href="#d0" x="241" y="204"/><use href="#d5" x="248" y="204"/><use href="#ddot" x="255" y="204"/><use href="#d8" x="258" y="204"/><use href="#d7" x="265" y="204"/><use href="#d1" x="294" y="204"/><use href="#d0" x="301" y="204"/><use href="#d9" x="308" y="204"/><use href="#d6" x="315" y="204"/><use href="#ddot" x="322" y="204"/><use href="#d5" x="325" y="204"/><use href="#d6" x="332" y="204"/><use href="#d1" x="354" y="204"/><use href="#d0" x="361" y="204"/><use href="#d9" x="368" y="204"/><use href="#d8" x="375" y="204"/><use href="#ddot" x="382" y="204"/><use href="#d7" x="385" y="204"/><use href="#d0" x="392" y="204"/><use href="#d3" x="418" y="204"/><use href="#d6" x="425" y="204"/><use href="#dcom" x="432" y="204"/><use href="#d3" x="435" y="204"/><use href="#d8" x="442" y="204"/><use href="#d4" x="449" y="204"/><use href="#dcom" x="456" y="204"/><use href="#d4" x="459" y="204"/><use href="#d0" x="466" y="204"/><use href="#d2" x="473" y="204"/><use href="#d0" x="482" y="204"/><use href="#d9" x="489" y="204"/><use href="#ddash" x="496" y="204"/><use href="#d2" x="500" y="204"/><use href="#d4" x="507" y="204"/><use href="#ddash" x="514" y="204"/><use href="#d2" x="518" y="204"/><use href="#d5" x="525" y="204"/><use href="#d1" x="549" y="204"/><use href="#d3" x="556" y="204"/><use href="#dcol" x="563" y="204"/><use href="#d4" x="566" y="204"/><use href="#d2" x="573" y="204"/><use href="#dcol" x="580" y="204"/><use href="#d5" x="583" y="204"/><use href="#d4" x="590" y="204"/><use href="#d9" x="631" y="204"/><use href="#ddot" x="638" y="204"/><use href="#d3" x="641" y="204"/><use href="#d1" x="648" y="204"/><use href="#d0" x="689" y="204"/><use href="#ddot" x="696" y="204"/><use href="#d4" x="699" y="204"/><use href="#d9" x="706" y="204"/><use href="#d1" x="756" y="204"/><use href="#d0" x="763" y="204"/><use href="#d9" x="770" y="204"/><use href="#d9" x="777" y="204"/><use href="#ddot" x="784" y="204"/><use href="#d3" x="787" y="204"/><use href="#d1" x="794" y="204"/><path d="M838 205h1v1h-1zM839 204h1v1h-1zM840 203h1v1h-1zM841 204h1v1h-1zM842 205h1v1h-1z"/><use href="#d1" x="890" y="204"/><use href="#d1" x="897" y="204"/><use href="#d0" x="904" y="204"/><use href="#d4" x="911" y="204"/><use href="#ddot" x="918" y="204"/><use href="#d8" x="921" y="204"/><use href="#d7" x="928" y="204"/><use href="#d1" x="969" y="204"/><use href="#d1" x="1183" y="204"/><use href="#d3" x="1190" y="204"/><use href="#dcol" x="1197" y="204"/><use href="#d4" x="1200" y="204"/><use href="#d2" x="1207" y="204"/><use href="#dcol" x="1214" y="204"/><use href="#d5" x="1217" y="204"/><use href="#d4" x="1224" y="204"/><use href="#d0" x="1256" y="204"/><use href="#ddot" x="1263" y="204"/><use href="#d5" x="1266" y="204"/><use href="#d4" x="1273" y="204"/><use href="#d0" x="1323" y="204"/><use href="#ddot" x="1330" y="204"/><use href="#d1" x="1333" y="204"/><use href="#d1" x="1340" y="204"/><use href="#d0" x="1390" y="204"/><use href="#ddot" x="1397" y="204"/><use href="#d7" x="1400" y="204"/><use href="#d4" x="1407" y="204"/><use href="#d2" x="1451" y="204"/><use href="#d2" x="85" y="223"/><use href="#d2" x="92" y="223"/><use href="#d4" x="99" y="223"/><use href="#d6" x="106" y="223"/><use href="#d9" x="113" y="223"/><use href="#ddot" x="120" y="223"/><use href="#d8" x="123" y="223"/><use href="#d4" x="130" y="223"/><use href="#ddash" x="153" y="223"/><use href="#d1" x="160" y="223"/><use href="#d0" x="167" y="223"/><use href="#d3" x="174" y="223"/><use href="#ddot" x="181" y="223"/><use href="#d6" x="184" y="223"/><use href="#d3" x="191" y="223"/><use href="#d2" x="224" y="223"/><use href="#d2" x="231" y="223"/><use href="#d6" x="238" y="223"/><use href="#d5" x="245" y="223"/><use href="#d7" x="252" y="223"/><use href="#ddot" x="259" y="223"/><use href="#d4" x="262" y="223"/><use href="#d5" x="269" y="223"/><use href="#d2" x="291" y="223"/><use href="#d2" x="298" y="223"/><use href="#d3" x="305" y="223"/><use href="#d9" x="312" y="223"/><use href="#d7" x="319" y="223"/><use href="#ddot" x="326" y="223"/><use href="#d0" x="329" y="223"/><use href="#d0" x="336" y="223"/><use href="#d2" x="351" y="223"/><use href="#d2" x="358" y="223"/><use href="#d6" x="365" y="223"/><use href="#d5" x="372" y="223"/><use href="#d6" x="379" y="223"/><use href="#ddot" x="386" y="223"/><use href="#d0" x="389" y="223"/><use href="#d2" x="396" y="223"/><use href="#d0" x="482" y="223"/><use href="#d9" x="489" y="223"/><use href="#ddash" x="496" y="223"/><use href="#d2" x="500" y="223"/><use href="#d4" x="507" y="223"/><use href="#ddash" x="514" y="223"/><use href="#d2" x="518" y="223"/><use href="#d5" x="525" y="223"/><use href="#d1" x="549" y="223"/><use href="#d3" x="556" y="223"/><use href="#dcol" x="563" y="223"/><use href="#d4" x="566" y="223"/><use href="#d2" x="573" y="223"/><use href="#dcol" x="580" y="223"/><use href="#d5" x="583" y="223"/><use href="#d4" x="590" y="223"/><use href="#d2" x="625" y="223"/><use href="#d6" x="632" y="223"/><use href="#d0" x="639" y="223"/><use href="#ddot" x="646" y="223"/><use href="#d4" x="649" y="223"/><use href="#d5" x="656" y="223"/><use href="#ddash" x="686" y="223"/><use href="#d0" x="690" y="223"/><use href="#ddot" x="697" y="223"/><use href="#d4" x="700" y="223"/><use href="#d6" x="707" y="223"/><use href="#d2" x="753" y="223"/><use href="#d2" x="760" y="223"/><use href="#d5" x="767" y="223"/><use href="#d7" x="774" y="223"/><use href="#d3" x="781" y="223"/><use href="#ddot" x="788" y="223"/><use href="#d4" x="791" y="223"/><use href="#d7" x="798" y="223"/><path d="M816 226h1v1h-1zM816 227h1v1h-1zM817 228h1v1h-1zM817 229h1v1h-1zM818 230h1v1h-1zM818 231h1v1h-1zM819 232h1v1h-1zM820 230h1v1h-1zM820 231h1v1h-1zM821 228h1v1h-1zM821 229h1v1h-1zM822 226h1v1h-1zM822 227h1v1h-1zM823 226h1v1h-1zM823 227h1v1h-1zM824 228h1v1h-1zM824 229h1v1h-1zM825 230h1v1h-1zM825 231h1v1h-1zM826 232h1v1h-1zM827 230h1v1h-1zM827 231h1v1h-1zM828 228h1v1h-1zM828 229h1v1h-1zM829 226h1v1h-1zM829 227h1v1h-1zM831 224h1v1h-1zM832 223h1v1h-1zM833 222h1v1h-1zM834 223h1v1h-1zM835 224h1v1h-1zM837 226h1v1h-1zM837 227h1v1h-1zM838 228h1v1h-1zM838 229h1v1h-1zM839 230h1v1h-1zM839 231h1v1h-1zM840 232h1v1h-1zM841 230h1v1h-1zM841 231h1v1h-1zM842 228h1v1h-1zM842 229h1v1h-1zM843 226h1v1h-1zM843 227h1v1h-1zM844 226h1v1h-1zM844 227h1v1h-1zM845 228h1v1h-1zM845 229h1v1h-1zM846 230h1v1h-1zM846 231h1v1h-1zM847 232h1v1h-1zM848 230h1v1h-1zM848 231h1v1h-1zM849 228h1v1h-1zM849 229h1v1h-1zM850 226h1v1h-1zM850 227h1v1h-1zM851 226h1v1h-1zM851 227h1v1h-1zM852 228h1v1h-1zM852 229h1v1h-1zM853 230h1v1h-1zM853 231h1v1h-1zM854 232h1v1h-1zM855 230h1v1h-1zM855 231h1v1h-1zM856 228h1v1h-1zM856 229h1v1h-1zM857 226h1v1h-1zM857 227h1v1h-1zM859 224h1v1h-1zM860 223h1v1h-1zM861 222h1v1h-1zM862 223h1v1h-1zM863 224h1v1h-1zM866 224h1v1h-1zM867 223h1v1h-1zM868 222h1v1h-1zM869 223h1v1h-1zM870 224h1v1h-1z"/><use href="#d1" x="969" y="223"/><use href="#d1" x="1183" y="223"/><use href="#d3" x="1190" y="223"/><use href="#dcol" x="1197" y="223"/><use href="#d4" x="1200" y="223"/><use href="#d2" x="1207" y="223"/><use href="#dcol" x="1214" y="223"/><use href="#d5" x="1217" y="223"/><use href="#d4" x="1224" y="223"/><use href="#ddash" x="1253" y="223"/><use href="#d0" x="1257" y="223"/><use href="#ddot" x="1264" y="223"/><use href="#d8" x="1267" y="223"/><use href="#d2" x="1274" y="223"/><use href="#d0" x="1323" y="223"/><use href="#ddot" x="1330" y="223"/><use href="#d8" x="1333" y="223"/><use href="#d3" x="1340" y="223"/><use href="#d0" x="1390" y="223"/><use href="#ddot" x="1397" y="223"/><use href="#d3" x="1400" y="223"/><use href="#d3" x="1407" y="223"/><use href="#d2" x="1451" y="223"/><use href="#d2" x="85" y="242"/><use href="#d1" x="92" y="242"/><use href="#d4" x="99" y="242"/><use href="#d7" x="106" y="242"/><use href="#d9" x="113" y="242"/><use href="#ddot" x="120" y="242"/><use href="#d5" x="123" y="242"/><use href="#d7" x="130" y="242"/><use href="#ddash" x="156" y="242"/><use href="#d6" x="163" y="242"/><use href="#d8" x="170" y="242"/><use href="#ddot" x="177" y="242"/><use href="#d6" x="180" y="242"/><use href="#d4" x="187" y="242"/><use href="#d2" x="224" y="242"/><use href="#d1" x="231" y="242"/><use href="#d5" x="238" y="242"/><use href="#d9" x="245" y="242"/><use href="#d7" x="252" y="242"/><use href="#ddot" x="259" y="242"/><use href="#d5" x="262" y="242"/><use href="#d4" x="269" y="242"/><use href="#d2" x="291" y="242"/><use href="#d1" x="298" y="242"/><use href="#d4" x="305" y="242"/><use href="#d6" x="312" y="242"/><use href="#d9" x="319" y="242"/><use href="#ddot" x="326" y="242"/><use href="#d7" x="329" y="242"/><use href="#d0" x="336" y="242"/><use href="#d2" x="351" y="242"/><use href="#d1" x="358" y="242"/><use href="#d5" x="365" y="242"/><use href="#d4" x="372" y="242"/><use href="#d8" x="379" y="242"/><use href="#ddot" x="386" y="242"/><use href="#d2" x="389" y="242"/><use href="#d1" x="396" y="242"/><use href="#d0" x="482" y="242"/><use href="#d9" x="489" y="242"/><use href="#ddash" x="496" y="242"/><use href="#d2" x="500" y="242"/><use href="#d4" x="507" y="242"/><use href="#ddash" x="514" y="242"/><use href="#d2" x="518" y="242"/><use href="#d5" x="525" y="242"/><use href="#d1" x="549" y="242"/><use href="#d3" x="556" y="242"/><use href="#dcol" x="563" y="242"/><use href="#d2" x="566" y="242"/><use href="#d7" x="573" y="242"/><use href="#dcol" x="580" y="242"/><use href="#d4" x="583" y="242"/><use href="#d5" x="590" y="242"/><use href="#d1" x="625" y="242"/><use href="#d2" x="632" y="242"/><use href="#d7" x="639" y="242"/><use href="#ddot" x="646" y="242"/><use href="#d8" x="649" y="242"/><use href="#d4" x="656" y="242"/><use href="#ddash" x="686" y="242"/><use href="#d0" x="690" y="242"/><use href="#ddot" x="697" y="242"/><use href="#d3" x="700" y="242"/><use href="#d2" x="707" y="242"/><use href="#d2" x="753" y="242"/><use href="#d1" x="760" y="242"/><use href="#d5" x="767" y="242"/><use href="#d4" x="774" y="242"/><use href="#d8" x="781" y="242"/><use href="#ddot" x="788" y="242"/><use href="#d2" x="791" y="242"/><use href="#d1" x="798" y="242"/><path d="M816 245h1v1h-1zM816 246h1v1h-1zM817 247h1v1h-1zM817 248h1v1h-1zM818 249h1v1h-1zM818 250h1v1h-1zM819 251h1v1h-1zM820 249h1v1h-1zM820 250h1v1h-1zM821 247h1v1h-1zM821 248h1v1h-1zM822 245h1v1h-1zM822 246h1v1h-1zM824 243h1v1h-1zM825 242h1v1h-1zM826 241h1v1h-1zM827 242h1v1h-1zM828 243h1v1h-1zM830 245h1v1h-1zM830 246h1v1h-1zM831 247h1v1h-1zM831 248h1v1h-1zM832 249h1v1h-1zM832 250h1v1h-1zM833 251h1v1h-1zM834 249h1v1h-1zM834 250h1v1h-1zM835 247h1v1h-1zM835 248h1v1h-1zM836 245h1v1h-1zM836 246h1v1h-1zM837 245h1v1h-1zM837 246h1v1h-1zM838 247h1v1h-1zM838 248h1v1h-1zM839 249h1v1h-1zM839 250h1v1h-1zM840 251h1v1h-1zM841 249h1v1h-1zM841 250h1v1h-1zM842 247h1v1h-1zM842 248h1v1h-1zM843 245h1v1h-1zM843 246h1v1h-1zM845 243h1v1h-1zM846 242h1v1h-1zM847 241h1v1h-1zM848 242h1v1h-1zM849 243h1v1h-1zM852 243h1v1h-1zM853 242h1v1h-1zM854 241h1v1h-1zM855 242h1v1h-1zM856 243h1v1h-1zM858 245h1v1h-1zM858 246h1v1h-1zM859 247h1v1h-1zM859 248h1v1h-1zM860 249h1v1h-1zM860 250h1v1h-1zM861 251h1v1h-1zM862 249h1v1h-1zM862 250h1v1h-1zM863 247h1v1h-1zM863 248h1v1h-1zM864 245h1v1h-1zM864 246h1v1h-1zM866 243h1v1h-1zM867 242h1v1h-1zM868 241h1v1h-1zM869 242h1v1h-1zM870 243h1v1h-1z"/><use href="#d1" x="969" y="242"/><use href="#d1" x="1183" y="242"/><use href="#d3" x="1190" y="242"/><use href="#dcol" x="1197" y="242"/><use href="#d2" x="1200" y="242"/><use href="#d7" x="1207" y="242"/><use href="#dcol" x="1214" y="242"/><use href="#d4" x="1217" y="242"/><use href="#d5" x="1224" y="242"/><use href="#ddash" x="1253" y="242"/><use href="#d0" x="1257" y="242"/><use href="#ddot" x="1264" y="242"/><use href="#d3" x="1267" y="242"/><use href="#d2" x="1274" y="242"/><use href="#d0" x="1323" y="242"/><use href="#ddot" x="1330" y="242"/><use href="#d5" x="1333" y="242"/><use href="#d5" x="1340" y="242"/><use href="#d0" x="1390" y="242"/><use href="#ddot" x="1397" y="242"/><use href="#d0" x="1400" y="242"/><use href="#d5" x="1407" y="242"/><use href="#d2" x="1451" y="242"/><use href="#d3" x="88" y="261"/><use href="#d2" x="95" y="261"/><use href="#d5" x="102" y="261"/><use href="#d8" x="109" y="261"/><use href="#ddot" x="116" y="261"/><use href="#d5" x="119" y="261"/><use href="#d3" x="126" y="261"/><use href="#ddash" x="156" y="261"/><use href="#d2" x="163" y="261"/><use href="#d0" x="170" y="261"/><use href="#ddot" x="177" y="261"/><use href="#d5" x="180" y="261"/><use href="#d6" x="187" y="261"/><use href="#d3" x="227" y="261"/><use href="#d2" x="234" y="261"/><use href="#d8" x="241" y="261"/><use href="#d9" x="248" y="261"/><use href="#ddot" x="255" y="261"/><use href="#d9" x="258" y="261"/><use href="#d0" x="265" y="261"/><use href="#d3" x="294" y="261"/><use href="#d2" x="301" y="261"/><use href="#d5" x="308" y="261"/><use href="#d5" x="315" y="261"/><use href="#ddot" x="322" y="261"/><use href="#d0" x="325" y="261"/><use href="#d7" x="332" y="261"/><use href="#d3" x="354" y="261"/><use href="#d2" x="361" y="261"/><use href="#d7" x="368" y="261"/><use href="#d9" x="375" y="261"/><use href="#ddot" x="382" y="261"/><use href="#d0" x="385" y="261"/><use href="#d9" x="392" y="261"/><use href="#d0" x="482" y="261"/><use href="#d9" x="489" y="261"/><use href="#ddash" x="496" y="261"/><use href="#d2" x="500" y="261"/><use href="#d4" x="507" y="261"/><use href="#ddash" x="514" y="261"/><use href="#d2" x="518" y="261"/><use href="#d5" x="525" y="261"/><use href="#d1" x="549" y="261"/><use href="#d3" x="556" y="261"/><use href="#dcol" x="563" y="261"/><use href="#d2" x="566" y="261"/><use href="#d7" x="573" y="261"/><use href="#dcol" x="580" y="261"/><use href="#d5" x="583" y="261"/><use href="#d0" x="590" y="261"/><use href="#d3" x="628" y="261"/><use href="#d4" x="635" y="261"/><use href="#ddot" x="642" y="261"/><use href="#d8" x="645" y="261"/><use href="#d3" x="652" y="261"/><use href="#ddash" x="686" y="261"/><use href="#d0" x="690" y="261"/><use href="#ddot" x="697" y="261"/><use href="#d6" x="700" y="261"/><use href="#d3" x="707" y="261"/><use href="#d3" x="756" y="261"/><use href="#d2" x="763" y="261"/><use href="#d7" x="770" y="261"/><use href="#d9" x="777" y="261"/><use href="#ddot" x="784" y="261"/><use href="#d0" x="787" y="261"/><use href="#d9" x="794" y="261"/><path d="M817 262h1v1h-1zM818 261h1v1h-1zM819 260h1v1h-1zM820 261h1v1h-1zM821 262h1v1h-1zM824 262h1v1h-1zM825 261h1v1h-1zM826 260h1v1h-1zM827 261h1v1h-1zM828 262h1v1h-1zM831 262h1v1h-1zM832 261h1v1h-1zM833 260h1v1h-1zM834 261h1v1h-1zM835 262h1v1h-1zM837 264h1v1h-1zM837 265h1v1h-1zM838 266h1v1h-1zM838 267h1v1h-1zM839 268h1v1h-1zM839 269h1v1h-1zM840 270h1v1h-1zM841 268h1v1h-1zM841 269h1v1h-1zM842 266h1v1h-1zM842 267h1v1h-1zM843 264h1v1h-1zM843 265h1v1h-1zM845 262h1v1h-1zM846 261h1v1h-1zM847 260h1v1h-1zM848 261h1v1h-1zM849 262h1v1h-1zM852 262h1v1h-1zM853 261h1v1h-1zM854 260h1v1h-1zM855 261h1v1h-1zM856 262h1v1h-1zM859 262h1v1h-1zM860 261h1v1h-1zM861 260h1v1h-1zM862 261h1v1h-1zM863 262h1v1h-1zM865 264h1v1h-1zM865 265h1v1h-1zM866 266h1v1h-1zM866 267h1v1h-1zM867 268h1v1h-1zM867 269h1v1h-1zM868 270h1v1h-1zM869 268h1v1h-1zM869 269h1v1h-1zM870 266h1v1h-1zM870 267h1v1h-1zM871 264h1v1h-1zM871 265h1v1h-1z"/><use href="#d1" x="969" y="261"/><use href="#d1" x="1183" y="261"/><use href="#d3" x="1190" y="261"/><use href="#dcol" x="1197" y="261"/><use href="#d2" x="1200" y="261"/><use href="#d7" x="1207" y="261"/><use href="#dcol" x="1214" y="261"/><use href="#d5" x="1217" y="261"/><use href="#d0" x="1224" y="261"/><use href="#ddash" x="1253" y="261"/><use href="#d0" x="1257" y="261"/><use href="#ddot" x="1264" y="261"/><use href="#d6" x="1267" y="261"/><use href="#d3" x="1274" y="261"/><use href="#d0" x="1323" y="261"/><use href="#ddot" x="1330" y="261"/><use href="#d9" x="1333" y="261"/><use href="#d6" x="1340" y="261"/><use href="#d0" x="1390" y="261"/><use href="#ddot" x="1397" y="261"/><use href="#d1" x="1400" y="261"/><use href="#d1" x="1407" y="261"/><use href="#d2" x="1451" y="261"/><use href="#d7" x="88" y="280"/><use href="#d0" x="95" y="280"/><use href="#d6" x="102" y="280"/><use href="#d7" x="109" y="280"/><use href="#ddot" x="116" y="280"/><use href="#d7" x="119" y="280"/><use href="#d3" x="126" y="280"/><use href="#ddash" x="159" y="280"/><use href="#d4" x="166" y="280"/><use href="#ddot" x="173" y="280"/><use href="#d9" x="176" y="280"/><use href="#d8" x="183" y="280"/><use href="#d7" x="227" y="280"/><use href="#d1" x="234" y="280"/><use href="#d3" x="241" y="280"/><use href="#d1" x="248" y="280"/><use href="#ddot" x="255" y="280"/><use href="#d9" x="258" y="280"/><use href="#d5" x="265" y="280"/><use href="#d7" x="294" y="280"/><use href="#d0" x="301" y="280"/><use href="#d6" x="308" y="280"/><use href="#d1" x="315" y="280"/><use href="#ddot" x="322" y="280"/><use href="#d2" x="325" y="280"/><use href="#d2" x="332" y="280"/><use href="#d7" x="354" y="280"/><use href="#d0" x="361" y="280"/><use href="#d7" x="368" y="280"/><use href="#d2" x="375" y="280"/><use href="#ddot" x="382" y="280"/><use href="#d7" x="385" y="280"/><use href="#d1" x="392" y="280"/><use href="#d0" x="482" y="280"/><use href="#d9" x="489" y="280"/><use href="#ddash" x="496" y="280"/><use href="#d2" x="500" y="280"/><use href="#d4" x="507" y="280"/><use href="#ddash" x="514" y="280"/><use href="#d2" x="518" y="280"/><use href="#d5" x="525" y="280"/><use href="#d1" x="549" y="280"/><use href="#d3" x="556" y="280"/><use href="#dcol" x="563" y="280"/><use href="#d2" x="566" y="280"/><use href="#d7" x="573" y="280"/><use href="#dcol" x="580" y="280"/><use href="#d4" x="583" y="280"/><use href="#d5" x="590" y="280"/><use href="#d7" x="628" y="280"/><use href="#d0" x="635" y="280"/><use href="#ddot" x="642" y="280"/><use href="#d7" x="645" y="280"/><use href="#d4" x="652" y="280"/><use href="#ddash" x="686" y="280"/><use href="#d0" x="690" y="280"/><use href="#ddot" x="697" y="280"/><use href="#d0" x="700" y="280"/><use href="#d7" x="707" y="280"/><use href="#d7" x="756" y="280"/><use href="#d0" x="763" y="280"/><use href="#d7" x="770" y="280"/><use href="#d2" x="777" y="280"/><use href="#ddot" x="784" y="280"/><use href="#d7" x="787" y="280"/><use href="#d1" x="794" y="280"/><path d="M817 281h1v1h-1zM818 280h1v1h-1zM819 279h1v1h-1zM820 280h1v1h-1zM821 281h1v1h-1zM823 283h1v1h-1zM823 284h1v1h-1zM824 285h1v1h-1zM824 286h1v1h-1zM825 287h1v1h-1zM825 288h1v1h-1zM826 289h1v1h-1zM827 287h1v1h-1zM827 288h1v1h-1zM828 285h1v1h-1zM828 286h1v1h-1zM829 283h1v1h-1zM829 284h1v1h-1zM831 281h1v1h-1zM832 280h1v1h-1zM833 279h1v1h-1zM834 280h1v1h-1zM835 281h1v1h-1zM837 283h1v1h-1zM837 284h1v1h-1zM838 285h1v1h-1zM838 286h1v1h-1zM839 287h1v1h-1zM839 288h1v1h-1zM840 289h1v1h-1zM841 287h1v1h-1zM841 288h1v1h-1zM842 285h1v1h-1zM842 286h1v1h-1zM843 283h1v1h-1zM843 284h1v1h-1zM845 281h1v1h-1zM846 280h1v1h-1zM847 279h1v1h-1zM848 280h1v1h-1zM849 281h1v1h-1zM851 283h1v1h-1zM851 284h1v1h-1zM852 285h1v1h-1zM852 286h1v1h-1zM853 287h1v1h-1zM853 288h1v1h-1zM854 289h1v1h-1zM855 287h1v1h-1zM855 288h1v1h-1zM856 285h1v1h-1zM856 286h1v1h-1zM857 283h1v1h-1zM857 284h1v1h-1zM858 283h1v1h-1zM858 284h1v1h-1zM859 285h1v1h-1zM859 286h1v1h-1zM860 287h1v1h-1zM860 288h1v1h-1zM861 289h1v1h-1zM862 287h1v1h-1zM862 288h1v1h-1zM863 285h1v1h-1zM863 286h1v1h-1zM864 283h1v1h-1zM864 284h1v1h-1zM865 283h1v1h-1zM865 284h1v1h-1zM866 285h1v1h-1zM866 286h1v1h-1zM867 287h1v1h-1zM867 288h1v1h-1zM868 289h1v1h-1zM869 287h1v1h-1zM869 288h1v1h-1zM870 285h1v1h-1zM870 286h1v1h-1zM871 283h1v1h-1zM871 284h1v1h-1z"/><use href="#d1" x="969" y="280"/><use href="#d1" x="1183" y="280"/><use href="#d3" x="1190" y="280"/><use href="#dcol" x="1197" y="280"/><use href="#d2" x="1200" y="280"/><use href="#d7" x="1207" y="280"/><use href="#dcol" x="1214" y="280"/><use href="#d4" x="1217" y="280"/><use href="#d5" x="1224" y="280"/><use href="#ddash" x="1253" y="280"/><use href="#d0" x="1257" y="280"/><use href="#ddot" x="1264" y="280"/><use href="#d0" x="1267" y="280"/><use href="#d7" x="1274" y="280"/><use href="#d0" x="1323" y="280"/><use href="#ddot" x="1330" y="280"/><use href="#d9" x="1333" y="280"/><use href="#d1" x="1340" y="280"/><use href="#d0" x="1390" y="280"/><use href="#ddot" x="1397" y="280"/><use href="#d0" x="1400" y="280"/><use href="#d9" x="1407" y="280"/><use href="#d2" x="1451" y="280"/><use href="#d3" x="88" y="299"/><use href="#d3" x="95" y="299"/><use href="#d0" x="102" y="299"/><use href="#d7" x="109" y="299"/><use href="#ddot" x="116" y="299"/><use href="#d2" x="119" y="299"/><use href="#d6" x="126" y="299"/><use href="#ddash" x="156" y="299"/><use href="#d1" x="163" y="299"/><use href="#d1" x="170" y="299"/><use href="#ddot" x="177" y="299"/><use href="#d5" x="180" y="299"/><use href="#d8" x="187" y="299"/><use href="#d3" x="227" y="299"/><use href="#d3" x="234" y="299"/><use href="#d3" x="241" y="299"/><use href="#d0" x="248" y="299"/><use href="#ddot" x="255" y="299"/><use href="#d5" x="258" y="299"/><use href="#d9" x="265" y="299"/><use href="#d3" x="294" y="299"/><use href="#d2" x="301" y="299"/><use href="#d9" x="308" y="299"/><use href="#d9" x="315" y="299"/><use href="#ddot" x="322" y="299"/><use href="#d3" x="325" y="299"/><use href="#d9" x="332" y="299"/><use href="#d3" x="354" y="299"/><use href="#d3" x="361" y="299"/><use href="#d2" x="368" y="299"/><use href="#d7" x="375" y="299"/><use href="#ddot" x="382" y="299"/><use href="#d8" x="385" y="299"/><use href="#d6" x="392" y="299"/><use href="#d0" x="482" y="299"/><use href="#d9" x="489" y="299"/><use href="#ddash" x="496" y="299"/><use href="#d2" x="500" y="299"/><use href="#d4" x="507" y="299"/><use href="#ddash" x="514" y="299"/><use href="#d2" x="518" y="299"/><use href="#d5" x="525" y="299"/><use href="#d1" x="549" y="299"/><use href="#d3" x="556" y="299"/><use href="#dcol" x="563" y="299"/><use href="#d4" x="566" y="299"/><use href="#d2" x="573" y="299"/><use href="#dcol" x="580" y="299"/><use href="#d5" x="583" y="299"/><use href="#d4" x="590" y="299"/><use href="#d3" x="628" y="299"/><use href="#d1" x="635" y="299"/><use href="#ddot" x="642" y="299"/><use href="#d2" x="645" y="299"/><use href="#d0" x="652" y="299"/><use href="#ddash" x="686" y="299"/><use href="#d0" x="690" y="299"/><use href="#ddot" x="697" y="299"/><use href="#d3" x="700" y="299"/><use href="#d5" x="707" y="299"/><use href="#d3" x="756" y="299"/><use href="#d3" x="763" y="299"/><use href="#d1" x="770" y="299"/><use href="#d8" x="777" y="299"/><use href="#ddot" x="784" y="299"/><use href="#d8" x="787" y="299"/><use href="#d4" x="794" y="299"/><path d="M816 302h1v1h-1zM816 303h1v1h-1zM817 304h1v1h-1zM817 305h1v1h-1zM818 306h1v1h-1zM818 307h1v1h-1zM819 308h1v1h-1zM820 306h1v1h-1zM820 307h1v1h-1zM821 304h1v1h-1zM821 305h1v1h-1zM822 302h1v1h-1zM822 303h1v1h-1zM824 303h1v1h-1zM825 303h1v1h-1zM826 303h1v1h-1zM827 303h1v1h-1zM828 303h1v1h-1zM824 305h1v1h-1zM825 305h1v1h-1zM826 305h1v1h-1zM827 305h1v1h-1zM828 305h1v1h-1zM830 302h1v1h-1zM830 303h1v1h-1zM831 304h1v1h-1zM831 305h1v1h-1zM832 306h1v1h-1zM832 307h1v1h-1zM833 308h1v1h-1zM834 306h1v1h-1zM834 307h1v1h-1zM835 304h1v1h-1zM835 305h1v1h-1zM836 302h1v1h-1zM836 303h1v1h-1zM838 300h1v1h-1zM839 299h1v1h-1zM840 298h1v1h-1zM841 299h1v1h-1zM842 300h1v1h-1zM844 302h1v1h-1zM844 303h1v1h-1zM845 304h1v1h-1zM845 305h1v1h-1zM846 306h1v1h-1zM846 307h1v1h-1zM847 308h1v1h-1zM848 306h1v1h-1zM848 307h1v1h-1zM849 304h1v1h-1zM849 305h1v1h-1zM850 302h1v1h-1zM850 303h1v1h-1zM852 303h1v1h-1zM853 303h1v1h-1zM854 303h1v1h-1zM855 303h1v1h-1zM856 303h1v1h-1zM852 305h1v1h-1zM853 305h1v1h-1zM854 305h1v1h-1zM855 305h1v1h-1zM856 305h1v1h-1zM859 303h1v1h-1zM860 303h1v1h-1zM861 303h1v1h-1zM862 303h1v1h-1zM863 303h1v1h-1zM859 305h1v1h-1zM860 305h1v1h-1zM861 305h1v1h-1zM862 305h1v1h-1zM863 305h1v1h-1zM866 300h1v1h-1zM867 299h1v1h-1zM868 298h1v1h-1zM869 299h1v1h-1zM870 300h1v1h-1z"/><use href="#d1" x="969" y="299"/><use href="#d1" x="1183" y="299"/><use href="#d3" x="1190" y="299"/><use href="#dcol" x="1197" y="299"/><use href="#d4" x="1200" y="299"/><use href="#d2" x="1207" y="299"/><use href="#dcol" x="1214" y="299"/><use href="#d5" x="1217" y="299"/><use href="#d4" x="1224" y="299"/><use href="#ddash" x="1253" y="299"/><use href="#d0" x="1257" y="299"/><use href="#ddot" x="1264" y="299"/><use href="#d6" x="1267" y="299"/><use href="#d2" x="1274" y="299"/><use href="#d0" x="1323" y="299"/><use href="#ddot" x="1330" y="299"/><use href="#d7" x="1333" y="299"/><use href="#d1" x="1340" y="299"/><use href="#d0" x="1390" y="299"/><use href="#ddot" x="1397" y="299"/><use href="#d2" x="1400" y="299"/><use href="#d4" x="1407" y="299"/><use href="#d2" x="1451" y="299"/><use href="#d6" x="88" y="318"/><use href="#d6" x="95" y="318"/><use href="#d3" x="102" y="318"/><use href="#d2" x="109" y="318"/><use href="#ddot" x="116" y="318"/><use href="#d4" x="119" y="318"/><use href="#d6" x="126" y="318"/><use href="#ddash" x="156" y="318"/><use href="#d2" x="163" y="318"/><use href="#d4" x="170" y="318"/><use href="#ddot" x="177" y="318"/><use href="#d4" x="180" y="318"/><use href="#d6" x="187" y="318"/><use href="#d6" x="227" y="318"/><use href="#d6" x="234" y="318"/><use href="#d7" x="241" y="318"/><use href="#d2" x="248" y="318"/><use href="#ddot" x="255" y="318"/><use href="#d6" x="258" y="318"/><use href="#d6" x="265" y="318"/><use href="#d6" x="294" y="318"/><use href="#d6" x="301" y="318"/><use href="#d2" x="308" y="318"/><use href="#d1" x="315" y="318"/><use href="#ddot" x="322" y="318"/><use href="#d7" x="325" y="318"/><use href="#d6" x="332" y="318"/><use href="#d6" x="354" y="318"/><use href="#d6" x="361" y="318"/><use href="#d6" x="368" y="318"/><use href="#d9" x="375" y="318"/><use href="#ddot" x="382" y="318"/><use href="#d7" x="385" y="318"/><use href="#d9" x="392" y="318"/><use href="#d0" x="482" y="318"/><use href="#d9" x="489" y="318"/><use href="#ddash" x="496" y="318"/><use href="#d2" x="500" y="318"/><use href="#d4" x="507" y="318"/><use href="#ddash" x="514" y="318"/><use href="#d2" x="518" y="318"/><use href="#d5" x="525" y="318"/><use href="#d1" x="549" y="318"/><use href="#d3" x="556" y="318"/><use href="#dcol" x="563" y="318"/><use href="#d4" x="566" y="318"/><use href="#d2" x="573" y="318"/><use href="#dcol" x="580" y="318"/><use href="#d5" x="583" y="318"/><use href="#d4" x="590" y="318"/><use href="#d5" x="628" y="318"/><use href="#d0" x="635" y="318"/><use href="#ddot" x="642" y="318"/><use href="#d9" x="645" y="318"/><use href="#d0" x="652" y="318"/><use href="#ddash" x="686" y="318"/><use href="#d0" x="690" y="318"/><use href="#ddot" x="697" y="318"/><use href="#d3" x="700" y="318"/><use href="#d7" x="707" y="318"/><use href="#d6" x="756" y="318"/><use href="#d6" x="763" y="318"/><use href="#d5" x="770" y="318"/><use href="#d6" x="777" y="318"/><use href="#ddot" x="784" y="318"/><use href="#d9" x="787" y="318"/><use href="#d2" x="794" y="318"/><path d="M816 321h1v1h-1zM816 322h1v1h-1zM817 323h1v1h-1zM817 324h1v1h-1zM818 325h1v1h-1zM818 326h1v1h-1zM819 327h1v1h-1zM820 325h1v1h-1zM820 326h1v1h-1zM821 323h1v1h-1zM821 324h1v1h-1zM822 321h1v1h-1zM822 322h1v1h-1zM824 319h1v1h-1zM825 318h1v1h-1zM826 317h1v1h-1zM827 318h1v1h-1zM828 319h1v1h-1zM831 322h1v1h-1zM832 322h1v1h-1zM833 322h1v1h-1zM834 322h1v1h-1zM835 322h1v1h-1zM831 324h1v1h-1zM832 324h1v1h-1zM833 324h1v1h-1zM834 324h1v1h-1zM835 324h1v1h-1zM838 319h1v1h-1zM839 318h1v1h-1zM840 317h1v1h-1zM841 318h1v1h-1zM842 319h1v1h-1zM844 321h1v1h-1zM844 322h1v1h-1zM845 323h1v1h-1zM845 324h1v1h-1zM846 325h1v1h-1zM846 326h1v1h-1zM847 327h1v1h-1zM848 325h1v1h-1zM848 326h1v1h-1zM849 323h1v1h-1zM849 324h1v1h-1zM850 321h1v1h-1zM850 322h1v1h-1zM851 321h1v1h-1zM851 322h1v1h-1zM852 323h1v1h-1zM852 324h1v1h-1zM853 325h1v1h-1zM853 326h1v1h-1zM854 327h1v1h-1zM855 325h1v1h-1zM855 326h1v1h-1zM856 323h1v1h-1zM856 324h1v1h-1zM857 321h1v1h-1zM857 322h1v1h-1zM859 322h1v1h-1zM860 322h1v1h-1zM861 322h1v1h-1zM862 322h1v1h-1zM863 322h1v1h-1zM859 324h1v1h-1zM860 324h1v1h-1zM861 324h1v1h-1zM862 324h1v1h-1zM863 324h1v1h-1zM866 319h1v1h-1zM867 318h1v1h-1zM868 317h1v1h-1zM869 318h1v1h-1zM870 319h1v1h-1z"/><use href="#d1" x="969" y="318"/><use href="#d1" x="1183" y="318"/><use href="#d3" x="1190" y="318"/><use href="#dcol" x="1197" y="318"/><use href="#d4" x="1200" y="318"/><use href="#d2" x="1207" y="318"/><use href="#dcol" x="1214" y="318"/><use href="#d5" x="1217" y="318"/><use href="#d4" x="1224" y="318"/><use href="#ddash" x="1253" y="318"/><use href="#d0" x="1257" y="318"/><use href="#ddot" x="1264" y="318"/><use href="#d5" x="1267" y="318"/><use href="#d6" x="1274" y="318"/><use href="#d0" x="1323" y="318"/><use href="#ddot" x="1330" y="318"/><use href="#d6" x="1333" y="318"/><use href="#d1" x="1340" y="318"/><use href="#d0" x="1390" y="318"/><use href="#ddot" x="1397" y="318"/><use href="#d1" x="1400" y="318"/><use href="#d6" x="1407" y="318"/><use href="#d2" x="1451" y="318"/><use href="#d2" x="85" y="337"/><use href="#d4" x="92" y="337"/><use href="#d4" x="99" y="337"/><use href="#d7" x="106" y="337"/><use href="#d2" x="113" y="337"/><use href="#ddot" x="120" y="337"/><use href="#d5" x="123" y="337"/><use href="#d1" x="130" y="337"/><use href="#ddash" x="153" y="337"/><use href="#d1" x="160" y="337"/><use href="#d0" x="167" y="337"/><use href="#d7" x="174" y="337"/><use href="#ddot" x="181" y="337"/><use href="#d6" x="184" y="337"/><use href="#d6" x="191" y="337"/><use href="#d2" x="224" y="337"/><use href="#d4" x="231" y="337"/><use href="#d6" x="238" y="337"/><use href="#d5" x="245" y="337"/><use href="#d0" x="252" y="337"/><use href="#ddot" x="259" y="337"/><use href="#d4" x="262" y="337"/><use href="#d2" x="269" y="337"/><use href="#d2" x="291" y="337"/><use href="#d4" x="298" y="337"/><use href="#d3" x="305" y="337"/><use href="#d8" x="312" y="337"/><use href="#d8" x="319" y="337"/><use href="#ddot" x="326" y="337"/><use href="#d5" x="329" y="337"/><use href="#d9" x="336" y="337"/><use href="#d2" x="351" y="337"/><use href="#d4" x="358" y="337"/><use href="#d6" x="365" y="337"/><use href="#d4" x="372" y="337"/><use href="#d8" x="379" y="337"/><use href="#ddot" x="386" y="337"/><use href="#d9" x="389" y="337"/><use href="#d7" x="396" y="337"/><use href="#d0" x="482" y="337"/><use href="#d9" x="489" y="337"/><use href="#ddash" x="496" y="337"/><use href="#d2" x="500" y="337"/><use href="#d4" x="507" y="337"/><use href="#ddash" x="514" y="337"/><use href="#d2" x="518" y="337"/><use href="#d5" x="525" y="337"/><use href="#d1" x="549" y="337"/><use href="#d3" x="556" y="337"/><use href="#dcol" x="563" y="337"/><use href="#d4" x="566" y="337"/><use href="#d2" x="573" y="337"/><use href="#dcol" x="580" y="337"/><use href="#d5" x="583" y="337"/><use href="#d4" x="590" y="337"/><use href="#d2" x="625" y="337"/><use href="#d6" x="632" y="337"/><use href="#d1" x="639" y="337"/><use href="#ddot" x="646" y="337"/><use href="#d8" x="649" y="337"/><use href="#d3" x="656" y="337"/><use href="#ddash" x="686" y="337"/><use href="#d0" x="690" y="337"/><use href="#ddot" x="697" y="337"/><use href="#d4" x="700" y="337"/><use href="#d4" x="707" y="337"/><use href="#d2" x="753" y="337"/><use href="#d4" x="760" y="337"/><use href="#d5" x="767" y="337"/><use href="#d8" x="774" y="337"/><use href="#d0" x="781" y="337"/><use href="#ddot" x="788" y="337"/><use href="#d1" x="791" y="337"/><use href="#d7" x="798" y="337"/><path d="M816 340h1v1h-1zM816 341h1v1h-1zM817 342h1v1h-1zM817 343h1v1h-1zM818 344h1v1h-1zM818 345h1v1h-1zM819 346h1v1h-1zM820 344h1v1h-1zM820 345h1v1h-1zM821 342h1v1h-1zM821 343h1v1h-1zM822 340h1v1h-1zM822 341h1v1h-1zM824 338h1v1h-1zM825 337h1v1h-1zM826 336h1v1h-1zM827 337h1v1h-1zM828 338h1v1h-1zM831 338h1v1h-1zM832 337h1v1h-1zM833 336h1v1h-1zM834 337h1v1h-1zM835 338h1v1h-1zM837 340h1v1h-1zM837 341h1v1h-1zM838 342h1v1h-1zM838 343h1v1h-1zM839 344h1v1h-1zM839 345h1v1h-1zM840 346h1v1h-1zM841 344h1v1h-1zM841 345h1v1h-1zM842 342h1v1h-1zM842 343h1v1h-1zM843 340h1v1h-1zM843 341h1v1h-1zM844 340h1v1h-1zM844 341h1v1h-1zM845 342h1v1h-1zM845 343h1v1h-1zM846 344h1v1h-1zM846 345h1v1h-1zM847 346h1v1h-1zM848 344h1v1h-1zM848 345h1v1h-1zM849 342h1v1h-1zM849 343h1v1h-1zM850 340h1v1h-1zM850 341h1v1h-1zM851 340h1v1h-1zM851 341h1v1h-1zM852 342h1v1h-1zM852 343h1v1h-1zM853 344h1v1h-1zM853 345h1v1h-1zM854 346h1v1h-1zM855 344h1v1h-1zM855 345h1v1h-1zM856 342h1v1h-1zM856 343h1v1h-1zM857 340h1v1h-1zM857 341h1v1h-1zM859 338h1v1h-1zM860 337h1v1h-1zM861 336h1v1h-1zM862 337h1v1h-1zM863 338h1v1h-1zM866 338h1v1h-1zM867 337h1v1h-1zM868 336h1v1h-1zM869 337h1v1h-1zM870 338h1v1h-1z"/><use href="#d1" x="969" y="337"/><use href="#d1" x="1183" y="337"/><use href="#d3" x="1190" y="337"/><use href="#dcol" x="1197" y="337"/><use href="#d4" x="1200" y="337"/><use href="#d2" x="1207" y="337"/><use href="#dcol" x="1214" y="337"/><use href="#d5" x="1217" y="337"/><use href="#d4" x="1224" y="337"/><use href="#ddash" x="1253" y="337"/><use href="#d0" x="1257" y="337"/><use href="#ddot" x="1264" y="337"/><use href="#d7" x="1267" y="337"/><use href="#d2" x="1274" y="337"/><use href="#d0" x="1323" y="337"/><use href="#ddot" x="1330" y="337"/><use href="#d7" x="1333" y="337"/><use href="#d3" x="1340" y="337"/><use href="#d0" x="1390" y="337"/><use href="#ddot" x="1397" y="337"/><use href="#d3" x="1400" y="337"/><use href="#d4" x="1407" y="337"/><use href="#d2" x="1451" y="337"/><use href="#d6" x="91" y="356"/><use href="#d6" x="98" y="356"/><use href="#d0" x="105" y="356"/><use href="#ddot" x="112" y="356"/><use href="#d7" x="115" y="356"/><use href="#d7" x="122" y="356"/><use href="#ddash" x="159" y="356"/><use href="#d2" x="166" y="356"/><use href="#ddot" x="173" y="356"/><use href="#d4" x="176" y="356"/><use href="#d4" x="183" y="356"/><use href="#d6" x="230" y="356"/><use href="#d6" x="237" y="356"/><use href="#d4" x="244" y="356"/><use href="#ddot" x="251" y="356"/><use href="#d6" x="254" y="356"/><use href="#d1" x="261" y="356"/><use href="#d6" x="297" y="356"/><use href="#d5" x="304" y="356"/><use href="#d9" x="311" y="356"/><use href="#ddot" x="318" y="356"/><use href="#d6" x="321" y="356"/><use href="#d7" x="328" y="356"/><use href="#d6" x="357" y="356"/><use href="#d6" x="364" y="356"/><use href="#d4" x="371" y="356"/><use href="#ddot" x="378" y="356"/><use href="#d5" x="381" y="356"/><use href="#d1" x="388" y="356"/><use href="#d5" x="418" y="356"/><use href="#d1" x="425" y="356"/><use href="#dcom" x="432" y="356"/><use href="#d4" x="435" y="356"/><use href="#d5" x="442" y="356"/><use href="#d8" x="449" y="356"/><use href="#dcom" x="456" y="356"/><use href="#d8" x="459" y="356"/><use href="#d1" x="466" y="356"/><use href="#d0" x="473" y="356"/><use href="#d0" x="482" y="356"/><use href="#d9" x="489" y="356"/><use href="#ddash" x="496" y="356"/><use href="#d2" x="500" y="356"/><use href="#d4" x="507" y="356"/><use href="#ddash" x="514" y="356"/><use href="#d2" x="518" y="356"/><use href="#d5" x="525" y="356"/><use href="#d1" x="549" y="356"/><use href="#d3" x="556" y="356"/><use href="#dcol" x="563" y="356"/><use href="#d2" x="566" y="356"/><use href="#d7" x="573" y="356"/><use href="#dcol" x="580" y="356"/><use href="#d5" x="583" y="356"/><use href="#d2" x="590" y="356"/><use href="#d4" x="631" y="356"/><use href="#ddot" x="638" y="356"/><use href="#d9" x="641" y="356"/><use href="#d4" x="648" y="356"/><use href="#ddash" x="686" y="356"/><use href="#d0" x="690" y="356"/><use href="#ddot" x="697" y="356"/><use href="#d3" x="700" y="356"/><use href="#d7" x="707" y="356"/><use href="#d6" x="759" y="356"/><use href="#d6" x="766" y="356"/><use href="#d3" x="773" y="356"/><use href="#ddot" x="780" y="356"/><use href="#d2" x="783" y="356"/><use href="#d1" x="790" y="356"/><path d="M817 357h1v1h-1zM818 356h1v1h-1zM819 355h1v1h-1zM820 356h1v1h-1zM821 357h1v1h-1zM823 359h1v1h-1zM823 360h1v1h-1zM824 361h1v1h-1zM824 362h1v1h-1zM825 363h1v1h-1zM825 364h1v1h-1zM826 365h1v1h-1zM827 363h1v1h-1zM827 364h1v1h-1zM828 361h1v1h-1zM828 362h1v1h-1zM829 359h1v1h-1zM829 360h1v1h-1zM831 357h1v1h-1zM832 356h1v1h-1zM833 355h1v1h-1zM834 356h1v1h-1zM835 357h1v1h-1zM837 359h1v1h-1zM837 360h1v1h-1zM838 361h1v1h-1zM838 362h1v1h-1zM839 363h1v1h-1zM839 364h1v1h-1zM840 365h1v1h-1zM841 363h1v1h-1zM841 364h1v1h-1zM842 361h1v1h-1zM842 362h1v1h-1zM843 359h1v1h-1zM843 360h1v1h-1zM844 359h1v1h-1zM844 360h1v1h-1zM845 361h1v1h-1zM845 362h1v1h-1zM846 363h1v1h-1zM846 364h1v1h-1zM847 365h1v1h-1zM848 363h1v1h-1zM848 364h1v1h-1zM849 361h1v1h-1zM849 362h1v1h-1zM850 359h1v1h-1zM850 360h1v1h-1zM851 359h1v1h-1zM851 360h1v1h-1zM852 361h1v1h-1zM852 362h1v1h-1zM853 363h1v1h-1zM853 364h1v1h-1zM854 365h1v1h-1zM855 363h1v1h-1zM855 364h1v1h-1zM856 361h1v1h-1zM856 362h1v1h-1zM857 359h1v1h-1zM857 360h1v1h-1zM859 357h1v1h-1zM860 356h1v1h-1zM861 355h1v1h-1zM862 356h1v1h-1zM863 357h1v1h-1zM866 357h1v1h-1zM867 356h1v1h-1zM868 355h1v1h-1zM869 356h1v1h-1zM870 357h1v1h-1z"/><use href="#d6" x="893" y="356"/><use href="#d6" x="900" y="356"/><use href="#d0" x="907" y="356"/><use href="#ddot" x="914" y="356"/><use href="#d7" x="917" y="356"/><use href="#d6" x="924" y="356"/><use href="#d2" x="969" y="356"/><use href="#d1" x="1183" y="356"/><use href="#d3" x="1190" y="356"/><use href="#dcol" x="1197" y="356"/><use href="#d2" x="1200" y="356"/><use href="#d7" x="1207" y="356"/><use href="#dcol" x="1214" y="356"/><use href="#d5" x="1217" y="356"/><use href="#d2" x="1224" y="356"/><use href="#ddash" x="1253" y="356"/><use href="#d0" x="1257" y="356"/><use href="#ddot" x="1264" y="356"/><use href="#d5" x="1267" y="356"/><use href="#d6" x="1274" y="356"/><use href="#d0" x="1323" y="356"/><use href="#ddot" x="1330" y="356"/><use href="#d5" x="1333" y="356"/><use href="#d8" x="1340" y="356"/><use href="#d0" x="1390" y="356"/><use href="#ddot" x="1397" y="356"/><use href="#d1" x="1400" y="356"/><use href="#d7" x="1407" y="356"/><use href="#d2" x="1451" y="356"/><use href="#d2" x="88" y="375"/><use href="#d4" x="95" y="375"/><use href="#d3" x="102" y="375"/><use href="#d6" x="109" y="375"/><use href="#ddot" x="116" y="375"/><use href="#d8" x="119" y="375"/><use href="#d7" x="126" y="375"/><use href="#ddash" x="156" y="375"/><use href="#d2" x="163" y="375"/><use href="#d0" x="170" y="375"/><use href="#ddot" x="177" y="375"/><use href="#d6" x="180" y="375"/><use href="#d5" x="187" y="375"/><use href="#d2" x="227" y="375"/><use href="#d4" x="234" y="375"/><use href="#d6" x="241" y="375"/><use href="#d1" x="248" y="375"/><use href="#ddot" x="255" y="375"/><use href="#d4" x="258" y="375"/><use href="#d9" x="265" y="375"/><use href="#d2" x="294" y="375"/><use href="#d4" x="301" y="375"/><use href="#d3" x="308" y="375"/><use href="#d6" x="315" y="375"/><use href="#ddot" x="322" y="375"/><use href="#d5" x="325" y="375"/><use href="#d3" x="332" y="375"/><use href="#d2" x="354" y="375"/><use href="#d4" x="361" y="375"/><use href="#d5" x="368" y="375"/><use href="#d9" x="375" y="375"/><use href="#ddot" x="382" y="375"/><use href="#d2" x="385" y="375"/><use href="#d9" x="392" y="375"/><use href="#d0" x="482" y="375"/><use href="#d9" x="489" y="375"/><use href="#ddash" x="496" y="375"/><use href="#d2" x="500" y="375"/><use href="#d4" x="507" y="375"/><use href="#ddash" x="514" y="375"/><use href="#d2" x="518" y="375"/><use href="#d5" x="525" y="375"/><use href="#d1" x="549" y="375"/><use href="#d3" x="556" y="375"/><use href="#dcol" x="563" y="375"/><use href="#d4" x="566" y="375"/><use href="#d2" x="573" y="375"/><use href="#dcol" x="580" y="375"/><use href="#d5" x="583" y="375"/><use href="#d0" x="590" y="375"/><use href="#d2" x="628" y="375"/><use href="#d4" x="635" y="375"/><use href="#ddot" x="642" y="375"/><use href="#d9" x="645" y="375"/><use href="#d6" x="652" y="375"/><use href="#ddash" x="686" y="375"/><use href="#d0" x="690" y="375"/><use href="#ddot" x="697" y="375"/><use href="#d8" x="700" y="375"/><use href="#d4" x="707" y="375"/><use href="#d2" x="756" y="375"/><use href="#d4" x="763" y="375"/><use href="#d5" x="770" y="375"/><use href="#d7" x="777" y="375"/><use href="#ddot" x="784" y="375"/><use href="#d5" x="787" y="375"/><use href="#d1" x="794" y="375"/><path d="M816 378h1v1h-1zM816 379h1v1h-1zM817 380h1v1h-1zM817 381h1v1h-1zM818 382h1v1h-1zM818 383h1v1h-1zM819 384h1v1h-1zM820 382h1v1h-1zM820 383h1v1h-1zM821 380h1v1h-1zM821 381h1v1h-1zM822 378h1v1h-1zM822 379h1v1h-1zM823 378h1v1h-1zM823 379h1v1h-1zM824 380h1v1h-1zM824 381h1v1h-1zM825 382h1v1h-1zM825 383h1v1h-1zM826 384h1v1h-1zM827 382h1v1h-1zM827 383h1v1h-1zM828 380h1v1h-1zM828 381h1v1h-1zM829 378h1v1h-1zM829 379h1v1h-1zM830 378h1v1h-1zM830 379h1v1h-1zM831 380h1v1h-1zM831 381h1v1h-1zM832 382h1v1h-1zM832 383h1v1h-1zM833 384h1v1h-1zM834 382h1v1h-1zM834 383h1v1h-1zM835 380h1v1h-1zM835 381h1v1h-1zM836 378h1v1h-1zM836 379h1v1h-1zM837 378h1v1h-1zM837 379h1v1h-1zM838 380h1v1h-1zM838 381h1v1h-1zM839 382h1v1h-1zM839 383h1v1h-1zM840 384h1v1h-1zM841 382h1v1h-1zM841 383h1v1h-1zM842 380h1v1h-1zM842 381h1v1h-1zM843 378h1v1h-1zM843 379h1v1h-1zM844 378h1v1h-1zM844 379h1v1h-1zM845 380h1v1h-1zM845 381h1v1h-1zM846 382h1v1h-1zM846 383h1v1h-1zM847 384h1v1h-1zM848 382h1v1h-1zM848 383h1v1h-1zM849 380h1v1h-1zM849 381h1v1h-1zM850 378h1v1h-1zM850 379h1v1h-1zM851 378h1v1h-1zM851 379h1v1h-1zM852 380h1v1h-1zM852 381h1v1h-1zM853 382h1v1h-1zM853 383h1v1h-1zM854 384h1v1h-1zM855 382h1v1h-1zM855 383h1v1h-1zM856 380h1v1h-1zM856 381h1v1h-1zM857 378h1v1h-1zM857 379h1v1h-1zM858 378h1v1h-1zM858 379h1v1h-1zM859 380h1v1h-1zM859 381h1v1h-1zM860 382h1v1h-1zM860 383h1v1h-1zM861 384h1v1h-1zM862 382h1v1h-1zM862 383h1v1h-1zM863 380h1v1h-1zM863 381h1v1h-1zM864 378h1v1h-1zM864 379h1v1h-1zM865 378h1v1h-1zM865 379h1v1h-1zM866 380h1v1h-1zM866 381h1v1h-1zM867 382h1v1h-1zM867 383h1v1h-1zM868 384h1v1h-1zM869 382h1v1h-1zM869 383h1v1h-1zM870 380h1v1h-1zM870 381h1v1h-1zM871 378h1v1h-1zM871 379h1v1h-1z"/><use href="#d1" x="969" y="375"/><use href="#d1" x="1183" y="375"/><use href="#d3" x="1190" y="375"/><use href="#dcol" x="1197" y="375"/><use href="#d4" x="1200" y="375"/><use href="#d2" x="1207" y="375"/><use href="#dcol" x="1214" y="375"/><use href="#d5" x="1217" y="375"/><use href="#d0" x="1224" y="375"/><use href="#ddash" x="1253" y="375"/><use href="#d0" x="1257" y="375"/><use href="#ddot" x="1264" y="375"/><use href="#d9" x="1267" y="375"/><use href="#d1" x="1274" y="375"/><use href="#d1" x="1323" y="375"/><use href="#ddot" x="1330" y="375"/><use href="#d0" x="1333" y="375"/><use href="#d1" x="1340" y="375"/><use href="#d0" x="1390" y="375"/><use href="#ddot" x="1397" y="375"/><use href="#d0" x="1400" y="375"/><use href="#d1" x="1407" y="375"/><use href="#d2" x="1451" y="375"/><use href="#d1" x="88" y="489"/><use href="#d0" x="95" y="489"/><use href="#d3" x="102" y="489"/><use href="#d9" x="109" y="489"/><use href="#ddot" x="116" y="489"/><use href="#d0" x="119" y="489"/><use href="#d0" x="126" y="489"/><use href="#ddash" x="153" y="489"/><use href="#d2" x="160" y="489"/><use href="#d1" x="167" y="489"/><use href="#d5" x="174" y="489"/><use href="#ddot" x="181" y="489"/><use href="#d0" x="184" y="489"/><use href="#d0" x="191" y="489"/><use href="#d1" x="227" y="489"/><use href="#d5" x="234" y="489"/><use href="#d5" x="241" y="489"/><use href="#d9" x="248" y="489"/><use href="#ddot" x="255" y="489"/><use href="#d0" x="258" y="489"/><use href="#d0" x="265" y="489"/><use href="#d9" x="297" y="489"/><use href="#d7" x="304" y="489"/><use href="#d3" x="311" y="489"/><use href="#ddot" x="318" y="489"/><use href="#d0" x="321" y="489"/><use href="#d0" x="328" y="489"/><use href="#d1" x="354" y="489"/><use href="#d2" x="361" y="489"/><use href="#d6" x="368" y="489"/><use href="#d1" x="375" y="489"/><use href="#ddot" x="382" y="489"/><use href="#d0" x="385" y="489"/><use href="#d0" x="392" y="489"/><use href="#d0" x="482" y="489"/><use href="#d9" x="489" y="489"/><use href="#ddash" x="496" y="489"/><use href="#d2" x="500" y="489"/><use href="#d4" x="507" y="489"/><use href="#ddash" x="514" y="489"/><use href="#d2" x="518" y="489"/><use href="#d5" x="525" y="489"/><use href="#d1" x="549" y="489"/><use href="#d3" x="556" y="489"/><use href="#dcol" x="563" y="489"/><use href="#d4" x="566" y="489"/><use href="#d2" x="573" y="489"/><use href="#dcol" x="580" y="489"/><use href="#d5" x="583" y="489"/><use href="#d4" x="590" y="489"/><use href="#d5" x="625" y="489"/><use href="#d8" x="632" y="489"/><use href="#d6" x="639" y="489"/><use href="#ddot" x="646" y="489"/><use href="#d0" x="649" y="489"/><use href="#d0" x="656" y="489"/><use href="#ddash" x="683" y="489"/><use href="#d1" x="687" y="489"/><use href="#d7" x="694" y="489"/><use href="#ddot" x="701" y="489"/><use href="#d1" x="704" y="489"/><use href="#d5" x="711" y="489"/><use href="#d1" x="756" y="489"/><use href="#d2" x="763" y="489"/><use href="#d5" x="770" y="489"/><use href="#d4" x="777" y="489"/><use href="#ddot" x="784" y="489"/><use href="#d0" x="787" y="489"/><use href="#d0" x="794" y="489"/><path d="M817 490h1v1h-1zM818 489h1v1h-1zM819 488h1v1h-1zM820 489h1v1h-1zM821 490h1v1h-1zM823 492h1v1h-1zM823 493h1v1h-1zM824 494h1v1h-1zM824 495h1v1h-1zM825 496h1v1h-1zM825 497h1v1h-1zM826 498h1v1h-1zM827 496h1v1h-1zM827 497h1v1h-1zM828 494h1v1h-1zM828 495h1v1h-1zM829 492h1v1h-1zM829 493h1v1h-1zM830 492h1v1h-1zM830 493h1v1h-1zM831 494h1v1h-1zM831 495h1v1h-1zM832 496h1v1h-1zM832 497h1v1h-1zM833 498h1v1h-1zM834 496h1v1h-1zM834 497h1v1h-1zM835 494h1v1h-1zM835 495h1v1h-1zM836 492h1v1h-1zM836 493h1v1h-1zM837 492h1v1h-1zM837 493h1v1h-1zM838 494h1v1h-1zM838 495h1v1h-1zM839 496h1v1h-1zM839 497h1v1h-1zM840 498h1v1h-1zM841 496h1v1h-1zM841 497h1v1h-1zM842 494h1v1h-1zM842 495h1v1h-1zM843 492h1v1h-1zM843 493h1v1h-1zM845 490h1v1h-1zM846 489h1v1h-1zM847 488h1v1h-1zM848 489h1v1h-1zM849 490h1v1h-1zM851 492h1v1h-1zM851 493h1v1h-1zM852 494h1v1h-1zM852 495h1v1h-1zM853 496h1v1h-1zM853 497h1v1h-1zM854 498h1v1h-1zM855 496h1v1h-1zM855 497h1v1h-1zM856 494h1v1h-1zM856 495h1v1h-1zM857 492h1v1h-1zM857 493h1v1h-1zM859 493h1v1h-1zM860 493h1v1h-1zM861 493h1v1h-1zM862 493h1v1h-1zM863 493h1v1h-1zM859 495h1v1h-1zM860 495h1v1h-1zM861 495h1v1h-1zM862 495h1v1h-1zM863 495h1v1h-1zM866 490h1v1h-1zM867 489h1v1h-1zM868 488h1v1h-1zM869 489h1v1h-1zM870 490h1v1h-1z"/><use href="#d1" x="969" y="489"/><use href="#d1" x="1183" y="489"/><use href="#d3" x="1190" y="489"/><use href="#dcol" x="1197" y="489"/><use href="#d4" x="1200" y="489"/><use href="#d2" x="1207" y="489"/><use href="#dcol" x="1214" y="489"/><use href="#d5" x="1217" y="489"/><use href="#d4" x="1224" y="489"/><use href="#ddash" x="1250" y="489"/><use href="#d1" x="1254" y="489"/><use href="#d7" x="1261" y="489"/><use href="#ddot" x="1268" y="489"/><use href="#d6" x="1271" y="489"/><use href="#d1" x="1278" y="489"/><use href="#d5" x="1320" y="489"/><use href="#d0" x="1327" y="489"/><use href="#ddot" x="1334" y="489"/><use href="#d0" x="1337" y="489"/><use href="#d5" x="1344" y="489"/><use href="#d6" x="1390" y="489"/><use href="#ddot" x="1397" y="489"/><use href="#d7" x="1400" y="489"/><use href="#d8" x="1407" y="489"/><use href="#d2" x="1451" y="489"/><use href="#d1" x="96" y="508"/><use href="#d7" x="103" y="508"/><use href="#d4" x="110" y="508"/><use href="#d7" x="117" y="508"/><use href="#d2" x="167" y="508"/><use href="#d5" x="174" y="508"/><use href="#d7" x="181" y="508"/><use href="#d1" x="235" y="508"/><use href="#d8" x="242" y="508"/><use href="#d1" x="249" y="508"/><use href="#d0" x="256" y="508"/><use href="#d8" x="305" y="508"/><use href="#d9" x="312" y="508"/><use href="#d4" x="319" y="508"/><use href="#d1" x="362" y="508"/><use href="#d0" x="369" y="508"/><use href="#d1" x="376" y="508"/><use href="#d5" x="383" y="508"/><use href="#d0" x="482" y="508"/><use href="#d9" x="489" y="508"/><use href="#ddash" x="496" y="508"/><use href="#d2" x="500" y="508"/><use href="#d4" x="507" y="508"/><use href="#ddash" x="514" y="508"/><use href="#d2" x="518" y="508"/><use href="#d5" x="525" y="508"/><use href="#d1" x="549" y="508"/><use href="#d3" x="556" y="508"/><use href="#dcol" x="563" y="508"/><use href="#d4" x="566" y="508"/><use href="#d2" x="573" y="508"/><use href="#dcol" x="580" y="508"/><use href="#d5" x="583" y="508"/><use href="#d4" x="590" y="508"/><use href="#d9" x="633" y="508"/><use href="#d1" x="640" y="508"/><use href="#d6" x="647" y="508"/><use href="#d1" x="686" y="508"/><use href="#d7" x="693" y="508"/><use href="#ddot" x="700" y="508"/><use href="#d2" x="703" y="508"/><use href="#d5" x="710" y="508"/><use href="#d1" x="764" y="508"/><use href="#d4" x="771" y="508"/><use href="#d9" x="778" y="508"/><use href="#d0" x="785" y="508"/><path d="M817 512h1v1h-1zM818 512h1v1h-1zM819 512h1v1h-1zM820 512h1v1h-1zM821 512h1v1h-1zM817 514h1v1h-1zM818 514h1v1h-1zM819 514h1v1h-1zM820 514h1v1h-1zM821 514h1v1h-1zM824 512h1v1h-1zM825 512h1v1h-1zM826 512h1v1h-1zM827 512h1v1h-1zM828 512h1v1h-1zM824 514h1v1h-1zM825 514h1v1h-1zM826 514h1v1h-1zM827 514h1v1h-1zM828 514h1v1h-1zM831 512h1v1h-1zM832 512h1v1h-1zM833 512h1v1h-1zM834 512h1v1h-1zM835 512h1v1h-1zM831 514h1v1h-1zM832 514h1v1h-1zM833 514h1v1h-1zM834 514h1v1h-1zM835 514h1v1h-1zM838 512h1v1h-1zM839 512h1v1h-1zM840 512h1v1h-1zM841 512h1v1h-1zM842 512h1v1h-1zM838 514h1v1h-1zM839 514h1v1h-1zM840 514h1v1h-1zM841 514h1v1h-1zM842 514h1v1h-1zM844 511h1v1h-1zM844 512h1v1h-1zM845 513h1v1h-1zM845 514h1v1h-1zM846 515h1v1h-1zM846 516h1v1h-1zM847 517h1v1h-1zM848 515h1v1h-1zM848 516h1v1h-1zM849 513h1v1h-1zM849 514h1v1h-1zM850 511h1v1h-1zM850 512h1v1h-1zM852 509h1v1h-1zM853 508h1v1h-1zM854 507h1v1h-1zM855 508h1v1h-1zM856 509h1v1h-1zM859 512h1v1h-1zM860 512h1v1h-1zM861 512h1v1h-1zM862 512h1v1h-1zM863 512h1v1h-1zM859 514h1v1h-1zM860 514h1v1h-1zM861 514h1v1h-1zM862 514h1v1h-1zM863 514h1v1h-1zM865 511h1v1h-1zM865 512h1v1h-1zM866 513h1v1h-1zM866 514h1v1h-1zM867 515h1v1h-1zM867 516h1v1h-1zM868 517h1v1h-1zM869 515h1v1h-1zM869 516h1v1h-1zM870 513h1v1h-1zM870 514h1v1h-1zM871 511h1v1h-1zM871 512h1v1h-1z"/><use href="#d1" x="969" y="508"/><use href="#d1" x="1183" y="508"/><use href="#d3" x="1190" y="508"/><use href="#dcol" x="1197" y="508"/><use href="#d4" x="1200" y="508"/><use href="#d2" x="1207" y="508"/><use href="#dcol" x="1214" y="508"/><use href="#d5" x="1217" y="508"/><use href="#d4" x="1224" y="508"/><use href="#d7" x="1253" y="508"/><use href="#d2" x="1260" y="508"/><use href="#ddot" x="1267" y="508"/><use href="#d1" x="1270" y="508"/><use href="#d2" x="1277" y="508"/><use href="#d3" x="1323" y="508"/><use href="#ddot" x="1330" y="508"/><use href="#d6" x="1333" y="508"/><use href="#d1" x="1340" y="508"/><use href="#d9" x="1387" y="508"/><use href="#d5" x="1394" y="508"/><use href="#ddot" x="1401" y="508"/><use href="#d4" x="1404" y="508"/><use href="#d1" x="1411" y="508"/><use href="#d0" x="1451" y="508"/><use href="#d4" x="94" y="527"/><use href="#d9" x="101" y="527"/><use href="#ddot" x="108" y="527"/><use href="#d0" x="111" y="527"/><use href="#d0" x="118" y="527"/><use href="#ddash" x="156" y="527"/><use href="#d4" x="163" y="527"/><use href="#d2" x="170" y="527"/><use href="#ddot" x="177" y="527"/><use href="#d0" x="180" y="527"/><use href="#d0" x="187" y="527"/><use href="#d1" x="230" y="527"/><use href="#d6" x="237" y="527"/><use href="#d7" x="244" y="527"/><use href="#ddot" x="251" y="527"/><use href="#d0" x="254" y="527"/><use href="#d0" x="261" y="527"/><use href="#d2" x="300" y="527"/><use href="#d8" x="307" y="527"/><use href="#ddot" x="314" y="527"/><use href="#d0" x="317" y="527"/><use href="#d0" x="324" y="527"/><use href="#d1" x="357" y="527"/><use href="#d6" x="364" y="527"/><use href="#d6" x="371" y="527"/><use href="#ddot" x="378" y="527"/><use href="#d0" x="381" y="527"/><use href="#d0" x="388" y="527"/><use href="#d0" x="482" y="527"/><use href="#d9" x="489" y="527"/><use href="#ddash" x="496" y="527"/><use href="#d2" x="500" y="527"/><use href="#d4" x="507" y="527"/><use href="#ddash" x="514" y="527"/><use href="#d2" x="518" y="527"/><use href="#d5" x="525" y="527"/><use href="#d1" x="549" y="527"/><use href="#d3" x="556" y="527"/><use href="#dcol" x="563" y="527"/><use href="#d4" x="566" y="527"/><use href="#d2" x="573" y="527"/><use href="#dcol" x="580" y="527"/><use href="#d5" x="583" y="527"/><use href="#d4" x="590" y="527"/><use href="#d1" x="625" y="527"/><use href="#d3" x="632" y="527"/><use href="#d9" x="639" y="527"/><use href="#ddot" x="646" y="527"/><use href="#d0" x="649" y="527"/><use href="#d0" x="656" y="527"/><use href="#ddash" x="683" y="527"/><use href="#d4" x="687" y="527"/><use href="#d6" x="694" y="527"/><use href="#ddot" x="701" y="527"/><use href="#d1" x="704" y="527"/><use href="#d5" x="711" y="527"/><use href="#d9" x="762" y="527"/><use href="#d1" x="769" y="527"/><use href="#ddot" x="776" y="527"/><use href="#d0" x="779" y="527"/><use href="#d0" x="786" y="527"/><path d="M816 530h1v1h-1zM816 531h1v1h-1zM817 532h1v1h-1zM817 533h1v1h-1zM818 534h1v1h-1zM818 535h1v1h-1zM819 536h1v1h-1zM820 534h1v1h-1zM820 535h1v1h-1zM821 532h1v1h-1zM821 533h1v1h-1zM822 530h1v1h-1zM822 531h1v1h-1zM824 528h1v1h-1zM825 527h1v1h-1zM826 526h1v1h-1zM827 527h1v1h-1zM828 528h1v1h-1zM831 528h1v1h-1zM832 527h1v1h-1zM833 526h1v1h-1zM834 527h1v1h-1zM835 528h1v1h-1zM838 528h1v1h-1zM839 527h1v1h-1zM840 526h1v1h-1zM841 527h1v1h-1zM842 528h1v1h-1zM845 528h1v1h-1zM846 527h1v1h-1zM847 526h1v1h-1zM848 527h1v1h-1zM849 528h1v1h-1zM852 531h1v1h-1zM853 531h1v1h-1zM854 531h1v1h-1zM855 531h1v1h-1zM856 531h1v1h-1zM852 533h1v1h-1zM853 533h1v1h-1zM854 533h1v1h-1zM855 533h1v1h-1zM856 533h1v1h-1zM859 531h1v1h-1zM860 531h1v1h-1zM861 531h1v1h-1zM862 531h1v1h-1zM863 531h1v1h-1zM859 533h1v1h-1zM860 533h1v1h-1zM861 533h1v1h-1zM862 533h1v1h-1zM863 533h1v1h-1zM866 531h1v1h-1zM867 531h1v1h-1zM868 531h1v1h-1zM869 531h1v1h-1zM870 531h1v1h-1zM866 533h1v1h-1zM867 533h1v1h-1zM868 533h1v1h-1zM869 533h1v1h-1zM870 533h1v1h-1z"/><use href="#d1" x="969" y="527"/><use href="#d1" x="1183" y="527"/><use href="#d3" x="1190" y="527"/><use href="#dcol" x="1197" y="527"/><use href="#d4" x="1200" y="527"/><use href="#d2" x="1207" y="527"/><use href="#dcol" x="1214" y="527"/><use href="#d5" x="1217" y="527"/><use href="#d4" x="1224" y="527"/><use href="#ddash" x="1250" y="527"/><use href="#d7" x="1254" y="527"/><use href="#d0" x="1261" y="527"/><use href="#ddot" x="1268" y="527"/><use href="#d4" x="1271" y="527"/><use href="#d8" x="1278" y="527"/><use href="#d2" x="1317" y="527"/><use href="#d4" x="1324" y="527"/><use href="#d0" x="1331" y="527"/><use href="#ddot" x="1338" y="527"/><use href="#d8" x="1341" y="527"/><use href="#d2" x="1348" y="527"/><use href="#d7" x="1387" y="527"/><use href="#d5" x="1394" y="527"/><use href="#ddot" x="1401" y="527"/><use href="#d0" x="1404" y="527"/><use href="#d0" x="1411" y="527"/><use href="#d2" x="1451" y="527"/><use href="#d2" x="82" y="546"/><use href="#d2" x="89" y="546"/><use href="#d3" x="96" y="546"/><use href="#d3" x="103" y="546"/><use href="#d8" x="110" y="546"/><use href="#d1" x="117" y="546"/><use href="#ddot" x="124" y="546"/><use href="#d0" x="127" y="546"/><use href="#d0" x="134" y="546"/><use href="#ddash" x="149" y="546"/><use href="#d4" x="156" y="546"/><use href="#d8" x="163" y="546"/><use href="#d4" x="170" y="546"/><use href="#d4" x="177" y="546"/><use href="#d4" x="184" y="546"/><use href="#d4" x="191" y="546"/><use href="#ddot" x="198" y="546"/><use href="#d0" x="201" y="546"/><use href="#d0" x="208" y="546"/><use href="#d2" x="221" y="546"/><use href="#d2" x="228" y="546"/><use href="#d8" x="235" y="546"/><use href="#d1" x="242" y="546"/><use href="#d7" x="249" y="546"/><use href="#d2" x="256" y="546"/><use href="#ddot" x="263" y="546"/><use href="#d0" x="266" y="546"/><use href="#d0" x="273" y="546"/><use href="#d1" x="291" y="546"/><use href="#d9" x="298" y="546"/><use href="#d6" x="305" y="546"/><use href="#d7" x="312" y="546"/><use href="#d3" x="319" y="546"/><use href="#ddot" x="326" y="546"/><use href="#d0" x="329" y="546"/><use href="#d0" x="336" y="546"/><use href="#d2" x="351" y="546"/><use href="#d0" x="358" y="546"/><use href="#d6" x="365" y="546"/><use href="#d0" x="372" y="546"/><use href="#d4" x="379" y="546"/><use href="#ddot" x="386" y="546"/><use href="#d0" x="389" y="546"/><use href="#d0" x="396" y="546"/><use href="#d0" x="482" y="546"/><use href="#d9" x="489" y="546"/><use href="#ddash" x="496" y="546"/><use href="#d2" x="500" y="546"/><use href="#d4" x="507" y="546"/><use href="#ddash" x="514" y="546"/><use href="#d2" x="518" y="546"/><use href="#d5" x="525" y="546"/><use href="#d1" x="549" y="546"/><use href="#d3" x="556" y="546"/><use href="#dcol" x="563" y="546"/><use href="#d4" x="566" y="546"/><use href="#d2" x="573" y="546"/><use href="#dcol" x="580" y="546"/><use href="#d5" x="583" y="546"/><use href="#d4" x="590" y="546"/><use href="#d2" x="616" y="546"/><use href="#d0" x="623" y="546"/><use href="#d8" x="630" y="546"/><use href="#d4" x="637" y="546"/><use href="#d9" x="644" y="546"/><use href="#d9" x="651" y="546"/><use href="#ddot" x="658" y="546"/><use href="#d0" x="661" y="546"/><use href="#d0" x="668" y="546"/><use href="#ddash" x="683" y="546"/><use href="#d6" x="687" y="546"/><use href="#d8" x="694" y="546"/><use href="#ddot" x="701" y="546"/><use href="#d4" x="704" y="546"/><use href="#d4" x="711" y="546"/><use href="#d7" x="750" y="546"/><use href="#d0" x="757" y="546"/><use href="#d7" x="764" y="546"/><use href="#d8" x="771" y="546"/><use href="#d2" x="778" y="546"/><use href="#d5" x="785" y="546"/><use href="#ddot" x="792" y="546"/><use href="#d0" x="795" y="546"/><use href="#d0" x="802" y="546"/><path d="M817 547h1v1h-1zM818 546h1v1h-1zM819 545h1v1h-1zM820 546h1v1h-1zM821 547h1v1h-1zM823 549h1v1h-1zM823 550h1v1h-1zM824 551h1v1h-1zM824 552h1v1h-1zM825 553h1v1h-1zM825 554h1v1h-1zM826 555h1v1h-1zM827 553h1v1h-1zM827 554h1v1h-1zM828 551h1v1h-1zM828 552h1v1h-1zM829 549h1v1h-1zM829 550h1v1h-1zM830 549h1v1h-1zM830 550h1v1h-1zM831 551h1v1h-1zM831 552h1v1h-1zM832 553h1v1h-1zM832 554h1v1h-1zM833 555h1v1h-1zM834 553h1v1h-1zM834 554h1v1h-1zM835 551h1v1h-1zM835 552h1v1h-1zM836 549h1v1h-1zM836 550h1v1h-1zM837 549h1v1h-1zM837 550h1v1h-1zM838 551h1v1h-1zM838 552h1v1h-1zM839 553h1v1h-1zM839 554h1v1h-1zM840 555h1v1h-1zM841 553h1v1h-1zM841 554h1v1h-1zM842 551h1v1h-1zM842 552h1v1h-1zM843 549h1v1h-1zM843 550h1v1h-1zM845 547h1v1h-1zM846 546h1v1h-1zM847 545h1v1h-1zM848 546h1v1h-1zM849 547h1v1h-1zM852 547h1v1h-1zM853 546h1v1h-1zM854 545h1v1h-1zM855 546h1v1h-1zM856 547h1v1h-1zM859 547h1v1h-1zM860 546h1v1h-1zM861 545h1v1h-1zM862 546h1v1h-1zM863 547h1v1h-1zM866 547h1v1h-1zM867 546h1v1h-1zM868 545h1v1h-1zM869 546h1v1h-1zM870 547h1v1h-1z"/><use href="#d1" x="969" y="546"/><use href="#d1" x="1183" y="546"/><use href="#d3" x="1190" y="546"/><use href="#dcol" x="1197" y="546"/><use href="#d4" x="1200" y="546"/><use href="#d2" x="1207" y="546"/><use href="#dcol" x="1214" y="546"/><use href="#d5" x="1217" y="546"/><use href="#d4" x="1224" y="546"/><use href="#d9" x="1250" y="546"/><use href="#d8" x="1257" y="546"/><use href="#d4" x="1264" y="546"/><use href="#ddot" x="1271" y="546"/><use href="#d1" x="1274" y="546"/><use href="#d6" x="1281" y="546"/><use href="#d2" x="1323" y="546"/><use href="#ddot" x="1330" y="546"/><use href="#d1" x="1333" y="546"/><use href="#d4" x="1340" y="546"/><use href="#d1" x="1384" y="546"/><use href="#d0" x="1391" y="546"/><use href="#d3" x="1398" y="546"/><use href="#d5" x="1405" y="546"/><use href="#ddot" x="1412" y="546"/><use href="#d4" x="1415" y="546"/><use href="#d7" x="1422" y="546"/><use href="#d2" x="1451" y="546"/><use href="#d3" x="82" y="565"/><use href="#d1" x="89" y="565"/><use href="#d4" x="96" y="565"/><use href="#d6" x="103" y="565"/><use href="#d3" x="110" y="565"/><use href="#d4" x="117" y="565"/><use href="#ddot" x="124" y="565"/><use href="#d0" x="127" y="565"/><use href="#d0" x="134" y="565"/><use href="#ddash" x="149" y="565"/><use href="#d2" x="156" y="565"/><use href="#d5" x="163" y="565"/><use href="#d6" x="170" y="565"/><use href="#d9" x="177" y="565"/><use href="#d9" x="184" y="565"/><use href="#d9" x="191" y="565"/><use href="#ddot" x="198" y="565"/><use href="#d0" x="201" y="565"/><use href="#d0" x="208" y="565"/><use href="#d3" x="221" y="565"/><use href="#d1" x="228" y="565"/><use href="#d4" x="235" y="565"/><use href="#d8" x="242" y="565"/><use href="#d1" x="249" y="565"/><use href="#d4" x="256" y="565"/><use href="#ddot" x="263" y="565"/><use href="#d0" x="266" y="565"/><use href="#d0" x="273" y="565"/><use href="#d1" x="291" y="565"/><use href="#d2" x="298" y="565"/><use href="#d2" x="305" y="565"/><use href="#d9" x="312" y="565"/><use href="#d3" x="319" y="565"/><use href="#ddot" x="326" y="565"/><use href="#d0" x="329" y="565"/><use href="#d0" x="336" y="565"/><use href="#d1" x="351" y="565"/><use href="#d2" x="358" y="565"/><use href="#d4" x="365" y="565"/><use href="#d2" x="372" y="565"/><use href="#d9" x="379" y="565"/><use href="#ddot" x="386" y="565"/><use href="#d0" x="389" y="565"/><use href="#d0" x="396" y="565"/><use href="#d0" x="482" y="565"/><use href="#d9" x="489" y="565"/><use href="#ddash" x="496" y="565"/><use href="#d2" x="500" y="565"/><use href="#d4" x="507" y="565"/><use href="#ddash" x="514" y="565"/><use href="#d2" x="518" y="565"/><use href="#d5" x="525" y="565"/><use href="#d1" x="549" y="565"/><use href="#d3" x="556" y="565"/><use href="#dcol" x="563" y="565"/><use href="#d4" x="566" y="565"/><use href="#d2" x="573" y="565"/><use href="#dcol" x="580" y="565"/><use href="#d5" x="583" y="565"/><use href="#d4" x="590" y="565"/><use href="#d3" x="616" y="565"/><use href="#d0" x="623" y="565"/><use href="#d2" x="630" y="565"/><use href="#d5" x="637" y="565"/><use href="#d2" x="644" y="565"/><use href="#d1" x="651" y="565"/><use href="#ddot" x="658" y="565"/><use href="#d0" x="661" y="565"/><use href="#d0" x="668" y="565"/><use href="#ddash" x="683" y="565"/><use href="#d4" x="687" y="565"/><use href="#d4" x="694" y="565"/><use href="#ddot" x="701" y="565"/><use href="#d9" x="704" y="565"/><use href="#d6" x="711" y="565"/><use href="#d5" x="750" y="565"/><use href="#d7" x="757" y="565"/><use href="#d1" x="764" y="565"/><use href="#d6" x="771" y="565"/><use href="#d3" x="778" y="565"/><use href="#d3" x="785" y="565"/><use href="#ddot" x="792" y="565"/><use href="#d0" x="795" y="565"/><use href="#d0" x="802" y="565"/><path d="M817 566h1v1h-1zM818 565h1v1h-1zM819 564h1v1h-1zM820 565h1v1h-1zM821 566h1v1h-1zM824 566h1v1h-1zM825 565h1v1h-1zM826 564h1v1h-1zM827 565h1v1h-1zM828 566h1v1h-1zM831 566h1v1h-1zM832 565h1v1h-1zM833 564h1v1h-1zM834 565h1v1h-1zM835 566h1v1h-1zM838 566h1v1h-1zM839 565h1v1h-1zM840 564h1v1h-1zM841 565h1v1h-1zM842 566h1v1h-1zM844 568h1v1h-1zM844 569h1v1h-1zM845 570h1v1h-1zM845 571h1v1h-1zM846 572h1v1h-1zM846 573h1v1h-1zM847 574h1v1h-1zM848 572h1v1h-1zM848 573h1v1h-1zM849 570h1v1h-1zM849 571h1v1h-1zM850 568h1v1h-1zM850 569h1v1h-1zM852 566h1v1h-1zM853 565h1v1h-1zM854 564h1v1h-1zM855 565h1v1h-1zM856 566h1v1h-1zM859 566h1v1h-1zM860 565h1v1h-1zM861 564h1v1h-1zM862 565h1v1h-1zM863 566h1v1h-1zM865 568h1v1h-1zM865 569h1v1h-1zM866 570h1v1h-1zM866 571h1v1h-1zM867 572h1v1h-1zM867 573h1v1h-1zM868 574h1v1h-1zM869 572h1v1h-1zM869 573h1v1h-1zM870 570h1v1h-1zM870 571h1v1h-1zM871 568h1v1h-1zM871 569h1v1h-1z"/><use href="#d1" x="969" y="565"/><use href="#d1" x="1183" y="565"/><use href="#d3" x="1190" y="565"/><use href="#dcol" x="1197" y="565"/><use href="#d4" x="1200" y="565"/><use href="#d2" x="1207" y="565"/><use href="#dcol" x="1214" y="565"/><use href="#d5" x="1217" y="565"/><use href="#d4" x="1224" y="565"/><use href="#d2" x="1250" y="565"/><use href="#d4" x="1257" y="565"/><use href="#d3" x="1264" y="565"/><use href="#d1" x="1271" y="565"/><use href="#ddot" x="1278" y="565"/><use href="#d4" x="1281" y="565"/><use href="#d5" x="1288" y="565"/><use href="#d0" x="1323" y="565"/><use href="#ddot" x="1330" y="565"/><use href="#d0" x="1333" y="565"/><use href="#d6" x="1340" y="565"/><use href="#d2" x="1384" y="565"/><use href="#d4" x="1391" y="565"/><use href="#d5" x="1398" y="565"/><use href="#d9" x="1405" y="565"/><use href="#ddot" x="1412" y="565"/><use href="#d4" x="1415" y="565"/><use href="#d6" x="1422" y="565"/><use href="#d2" x="1451" y="565"/><use href="#d2" x="88" y="584"/><use href="#d0" x="95" y="584"/><use href="#d1" x="102" y="584"/><use href="#d6" x="109" y="584"/><use href="#ddot" x="116" y="584"/><use href="#d0" x="119" y="584"/><use href="#d0" x="126" y="584"/><use href="#ddash" x="149" y="584"/><use href="#d1" x="156" y="584"/><use href="#d7" x="163" y="584"/><use href="#d6" x="170" y="584"/><use href="#d2" x="177" y="584"/><use href="#d1" x="184" y="584"/><use href="#ddot" x="191" y="584"/><use href="#d0" x="194" y="584"/><use href="#d0" x="201" y="584"/><use href="#d9" x="227" y="584"/><use href="#d3" x="234" y="584"/><use href="#d5" x="241" y="584"/><use href="#d2" x="248" y="584"/><use href="#ddot" x="255" y="584"/><use href="#d0" x="258" y="584"/><use href="#d0" x="265" y="584"/><use href="#d2" x="297" y="584"/><use href="#d6" x="304" y="584"/><use href="#d9" x="311" y="584"/><use href="#ddot" x="318" y="584"/><use href="#d0" x="321" y="584"/><use href="#d0" x="328" y="584"/><use href="#d8" x="357" y="584"/><use href="#d0" x="364" y="584"/><use href="#d4" x="371" y="584"/><use href="#ddot" x="378" y="584"/><use href="#d0" x="381" y="584"/><use href="#d0" x="388" y="584"/><use href="#d0" x="482" y="584"/><use href="#d9" x="489" y="584"/><use href="#ddash" x="496" y="584"/><use href="#d2" x="500" y="584"/><use href="#d4" x="507" y="584"/><use href="#ddash" x="514" y="584"/><use href="#d2" x="518" y="584"/><use href="#d5" x="525" y="584"/><use href="#d1" x="549" y="584"/><use href="#d3" x="556" y="584"/><use href="#dcol" x="563" y="584"/><use href="#d4" x="566" y="584"/><use href="#d2" x="573" y="584"/><use href="#dcol" x="580" y="584"/><use href="#d5" x="583" y="584"/><use href="#d4" x="590" y="584"/><use href="#d9" x="622" y="584"/><use href="#d0" x="629" y="584"/><use href="#d8" x="636" y="584"/><use href="#d3" x="643" y="584"/><use href="#ddot" x="650" y="584"/><use href="#d0" x="653" y="584"/><use href="#d0" x="660" y="584"/><use href="#ddash" x="683" y="584"/><use href="#d8" x="687" y="584"/><use href="#d9" x="694" y="584"/><use href="#ddot" x="701" y="584"/><use href="#d7" x="704" y="584"/><use href="#d3" x="711" y="584"/><use href="#d1" x="753" y="584"/><use href="#d9" x="760" y="584"/><use href="#d6" x="767" y="584"/><use href="#d3" x="774" y="584"/><use href="#d7" x="781" y="584"/><use href="#ddot" x="788" y="584"/><use href="#d0" x="791" y="584"/><use href="#d0" x="798" y="584"/><path d="M816 587h1v1h-1zM816 588h1v1h-1zM817 589h1v1h-1zM817 590h1v1h-1zM818 591h1v1h-1zM818 592h1v1h-1zM819 593h1v1h-1zM820 591h1v1h-1zM820 592h1v1h-1zM821 589h1v1h-1zM821 590h1v1h-1zM822 587h1v1h-1zM822 588h1v1h-1zM824 585h1v1h-1zM825 584h1v1h-1zM826 583h1v1h-1zM827 584h1v1h-1zM828 585h1v1h-1zM831 585h1v1h-1zM832 584h1v1h-1zM833 583h1v1h-1zM834 584h1v1h-1zM835 585h1v1h-1zM838 585h1v1h-1zM839 584h1v1h-1zM840 583h1v1h-1zM841 584h1v1h-1zM842 585h1v1h-1zM845 585h1v1h-1zM846 584h1v1h-1zM847 583h1v1h-1zM848 584h1v1h-1zM849 585h1v1h-1zM851 587h1v1h-1zM851 588h1v1h-1zM852 589h1v1h-1zM852 590h1v1h-1zM853 591h1v1h-1zM853 592h1v1h-1zM854 593h1v1h-1zM855 591h1v1h-1zM855 592h1v1h-1zM856 589h1v1h-1zM856 590h1v1h-1zM857 587h1v1h-1zM857 588h1v1h-1zM859 588h1v1h-1zM860 588h1v1h-1zM861 588h1v1h-1zM862 588h1v1h-1zM863 588h1v1h-1zM859 590h1v1h-1zM860 590h1v1h-1zM861 590h1v1h-1zM862 590h1v1h-1zM863 590h1v1h-1zM865 587h1v1h-1zM865 588h1v1h-1zM866 589h1v1h-1zM866 590h1v1h-1zM867 591h1v1h-1zM867 592h1v1h-1zM868 593h1v1h-1zM869 591h1v1h-1zM869 592h1v1h-1zM870 589h1v1h-1zM870 590h1v1h-1zM871 587h1v1h-1zM871 588h1v1h-1z"/><use href="#d1" x="969" y="584"/><use href="#d1" x="1183" y="584"/><use href="#d3" x="1190" y="584"/><use href="#dcol" x="1197" y="584"/><use href="#d4" x="1200" y="584"/><use href="#d2" x="1207" y="584"/><use href="#dcol" x="1214" y="584"/><use href="#d5" x="1217" y="584"/><use href="#d4" x="1224" y="584"/><use href="#d1" x="1250" y="584"/><use href="#d5" x="1257" y="584"/><use href="#d0" x="1264" y="584"/><use href="#ddot" x="1271" y="584"/><use href="#d7" x="1274" y="584"/><use href="#d5" x="1281" y="584"/><use href="#d3" x="1317" y="584"/><use href="#d6" x="1324" y="584"/><use href="#d3" x="1331" y="584"/><use href="#ddot" x="1338" y="584"/><use href="#d8" x="1341" y="584"/><use href="#d9" x="1348" y="584"/><use href="#d6" x="1384" y="584"/><use href="#d4" x="1391" y="584"/><use href="#d9" x="1398" y="584"/><use href="#ddot" x="1405" y="584"/><use href="#d4" x="1408" y="584"/><use href="#d4" x="1415" y="584"/><use href="#d2" x="1451" y="584"/><use href="#d7" x="94" y="603"/><use href="#d5" x="101" y="603"/><use href="#ddot" x="108" y="603"/><use href="#d0" x="111" y="603"/><use href="#d0" x="118" y="603"/><use href="#ddash" x="153" y="603"/><use href="#d1" x="160" y="603"/><use href="#d3" x="167" y="603"/><use href="#d0" x="174" y="603"/><use href="#ddot" x="181" y="603"/><use href="#d0" x="184" y="603"/><use href="#d0" x="191" y="603"/><use href="#d7" x="233" y="603"/><use href="#d5" x="240" y="603"/><use href="#ddot" x="247" y="603"/><use href="#d0" x="250" y="603"/><use href="#d0" x="257" y="603"/><use href="#d1" x="300" y="603"/><use href="#d3" x="307" y="603"/><use href="#ddot" x="314" y="603"/><use href="#d0" x="317" y="603"/><use href="#d0" x="324" y="603"/><use href="#d1" x="360" y="603"/><use href="#d3" x="367" y="603"/><use href="#ddot" x="374" y="603"/><use href="#d0" x="377" y="603"/><use href="#d0" x="384" y="603"/><use href="#d0" x="482" y="603"/><use href="#d9" x="489" y="603"/><use href="#ddash" x="496" y="603"/><use href="#d2" x="500" y="603"/><use href="#d4" x="507" y="603"/><use href="#ddash" x="514" y="603"/><use href="#d2" x="518" y="603"/><use href="#d5" x="525" y="603"/><use href="#d1" x="549" y="603"/><use href="#d3" x="556" y="603"/><use href="#dcol" x="563" y="603"/><use href="#d4" x="566" y="603"/><use href="#d2" x="573" y="603"/><use href="#dcol" x="580" y="603"/><use href="#d5" x="583" y="603"/><use href="#d4" x="590" y="603"/><use href="#d6" x="628" y="603"/><use href="#d2" x="635" y="603"/><use href="#ddot" x="642" y="603"/><use href="#d0" x="645" y="603"/><use href="#d0" x="652" y="603"/><use href="#ddash" x="683" y="603"/><use href="#d6" x="687" y="603"/><use href="#d3" x="694" y="603"/><use href="#ddot" x="701" y="603"/><use href="#d4" x="704" y="603"/><use href="#d1" x="711" y="603"/><use href="#d2" x="759" y="603"/><use href="#d0" x="766" y="603"/><use href="#d5" x="773" y="603"/><use href="#ddot" x="780" y="603"/><use href="#d0" x="783" y="603"/><use href="#d0" x="790" y="603"/><path d="M817 607h1v1h-1zM818 607h1v1h-1zM819 607h1v1h-1zM820 607h1v1h-1zM821 607h1v1h-1zM817 609h1v1h-1zM818 609h1v1h-1zM819 609h1v1h-1zM820 609h1v1h-1zM821 609h1v1h-1zM824 607h1v1h-1zM825 607h1v1h-1zM826 607h1v1h-1zM827 607h1v1h-1zM828 607h1v1h-1zM824 609h1v1h-1zM825 609h1v1h-1zM826 609h1v1h-1zM827 609h1v1h-1zM828 609h1v1h-1zM831 607h1v1h-1zM832 607h1v1h-1zM833 607h1v1h-1zM834 607h1v1h-1zM835 607h1v1h-1zM831 609h1v1h-1zM832 609h1v1h-1zM833 609h1v1h-1zM834 609h1v1h-1zM835 609h1v1h-1zM838 607h1v1h-1zM839 607h1v1h-1zM840 607h1v1h-1zM841 607h1v1h-1zM842 607h1v1h-1zM838 609h1v1h-1zM839 609h1v1h-1zM840 609h1v1h-1zM841 609h1v1h-1zM842 609h1v1h-1zM845 607h1v1h-1zM846 607h1v1h-1zM847 607h1v1h-1zM848 607h1v1h-1zM849 607h1v1h-1zM845 609h1v1h-1zM846 609h1v1h-1zM847 609h1v1h-1zM848 609h1v1h-1zM849 609h1v1h-1zM852 607h1v1h-1zM853 607h1v1h-1zM854 607h1v1h-1zM855 607h1v1h-1zM856 607h1v1h-1zM852 609h1v1h-1zM853 609h1v1h-1zM854 609h1v1h-1zM855 609h1v1h-1zM856 609h1v1h-1zM859 607h1v1h-1zM860 607h1v1h-1zM861 607h1v1h-1zM862 607h1v1h-1zM863 607h1v1h-1zM859 609h1v1h-1zM860 609h1v1h-1zM861 609h1v1h-1zM862 609h1v1h-1zM863 609h1v1h-1zM866 607h1v1h-1zM867 607h1v1h-1zM868 607h1v1h-1zM869 607h1v1h-1zM870 607h1v1h-1zM866 609h1v1h-1zM867 609h1v1h-1zM868 609h1v1h-1zM869 609h1v1h-1zM870 609h1v1h-1z"/><use href="#d1" x="969" y="603"/><use href="#d1" x="1183" y="603"/><use href="#d3" x="1190" y="603"/><use href="#dcol" x="1197" y="603"/><use href="#d4" x="1200" y="603"/><use href="#d2" x="1207" y="603"/><use href="#dcol" x="1214" y="603"/><use href="#d5" x="1217" y="603"/><use href="#d4" x="1224" y="603"/><use href="#d4" x="1250" y="603"/><use href="#d7" x="1257" y="603"/><use href="#d6" x="1264" y="603"/><use href="#ddot" x="1271" y="603"/><use href="#d9" x="1274" y="603"/><use href="#d2" x="1281" y="603"/><use href="#d4" x="1384" y="603"/><use href="#d7" x="1391" y="603"/><use href="#d6" x="1398" y="603"/><use href="#ddot" x="1405" y="603"/><use href="#d9" x="1408" y="603"/><use href="#d2" x="1415" y="603"/><use href="#d2" x="1451" y="603"/><use href="#d4" x="94" y="622"/><use href="#d2" x="101" y="622"/><use href="#ddot" x="108" y="622"/><use href="#d0" x="111" y="622"/><use href="#d0" x="118" y="622"/><use href="#ddash" x="159" y="622"/><use href="#d3" x="166" y="622"/><use href="#ddot" x="173" y="622"/><use href="#d0" x="176" y="622"/><use href="#d0" x="183" y="622"/><use href="#d4" x="233" y="622"/><use href="#d2" x="240" y="622"/><use href="#ddot" x="247" y="622"/><use href="#d0" x="250" y="622"/><use href="#d0" x="257" y="622"/><use href="#d1" x="300" y="622"/><use href="#d3" x="307" y="622"/><use href="#ddot" x="314" y="622"/><use href="#d0" x="317" y="622"/><use href="#d0" x="324" y="622"/><use href="#d1" x="360" y="622"/><use href="#d3" x="367" y="622"/><use href="#ddot" x="374" y="622"/><use href="#d0" x="377" y="622"/><use href="#d0" x="384" y="622"/><use href="#d0" x="482" y="622"/><use href="#d9" x="489" y="622"/><use href="#ddash" x="496" y="622"/><use href="#d2" x="500" y="622"/><use href="#d4" x="507" y="622"/><use href="#ddash" x="514" y="622"/><use href="#d2" x="518" y="622"/><use href="#d5" x="525" y="622"/><use href="#d1" x="549" y="622"/><use href="#d3" x="556" y="622"/><use href="#dcol" x="563" y="622"/><use href="#d4" x="566" y="622"/><use href="#d2" x="573" y="622"/><use href="#dcol" x="580" y="622"/><use href="#d5" x="583" y="622"/><use href="#d4" x="590" y="622"/><use href="#d2" x="628" y="622"/><use href="#d9" x="635" y="622"/><use href="#ddot" x="642" y="622"/><use href="#d0" x="645" y="622"/><use href="#d0" x="652" y="622"/><use href="#ddash" x="686" y="622"/><use href="#d6" x="690" y="622"/><use href="#ddot" x="697" y="622"/><use href="#d6" x="700" y="622"/><use href="#d7" x="707" y="622"/><use href="#d4" x="762" y="622"/><use href="#d5" x="769" y="622"/><use href="#ddot" x="776" y="622"/><use href="#d0" x="779" y="622"/><use href="#d0" x="786" y="622"/><path d="M817 626h1v1h-1zM818 626h1v1h-1zM819 626h1v1h-1zM820 626h1v1h-1zM821 626h1v1h-1zM817 628h1v1h-1zM818 628h1v1h-1zM819 628h1v1h-1zM820 628h1v1h-1zM821 628h1v1h-1zM824 626h1v1h-1zM825 626h1v1h-1zM826 626h1v1h-1zM827 626h1v1h-1zM828 626h1v1h-1zM824 628h1v1h-1zM825 628h1v1h-1zM826 628h1v1h-1zM827 628h1v1h-1zM828 628h1v1h-1zM831 626h1v1h-1zM832 626h1v1h-1zM833 626h1v1h-1zM834 626h1v1h-1zM835 626h1v1h-1zM831 628h1v1h-1zM832 628h1v1h-1zM833 628h1v1h-1zM834 628h1v1h-1zM835 628h1v1h-1zM838 626h1v1h-1zM839 626h1v1h-1zM840 626h1v1h-1zM841 626h1v1h-1zM842 626h1v1h-1zM838 628h1v1h-1zM839 628h1v1h-1zM840 628h1v1h-1zM841 628h1v1h-1zM842 628h1v1h-1zM845 626h1v1h-1zM846 626h1v1h-1zM847 626h1v1h-1zM848 626h1v1h-1zM849 626h1v1h-1zM845 628h1v1h-1zM846 628h1v1h-1zM847 628h1v1h-1zM848 628h1v1h-1zM849 628h1v1h-1zM852 626h1v1h-1zM853 626h1v1h-1zM854 626h1v1h-1zM855 626h1v1h-1zM856 626h1v1h-1zM852 628h1v1h-1zM853 628h1v1h-1zM854 628h1v1h-1zM855 628h1v1h-1zM856 628h1v1h-1zM859 626h1v1h-1zM860 626h1v1h-1zM861 626h1v1h-1zM862 626h1v1h-1zM863 626h1v1h-1zM859 628h1v1h-1zM860 628h1v1h-1zM861 628h1v1h-1zM862 628h1v1h-1zM863 628h1v1h-1zM866 626h1v1h-1zM867 626h1v1h-1zM868 626h1v1h-1zM869 626h1v1h-1zM870 626h1v1h-1zM866 628h1v1h-1zM867 628h1v1h-1zM868 628h1v1h-1zM869 628h1v1h-1zM870 628h1v1h-1z"/><use href="#d1" x="969" y="622"/><use href="#d1" x="1183" y="622"/><use href="#d3" x="1190" y="622"/><use href="#dcol" x="1197" y="622"/><use href="#d4" x="1200" y="622"/><use href="#d2" x="1207" y="622"/><use href="#dcol" x="1214" y="622"/><use href="#d5" x="1217" y="622"/><use href="#d4" x="1224" y="622"/><use href="#d2" x="1250" y="622"/><use href="#d2" x="1257" y="622"/><use href="#d3" x="1264" y="622"/><use href="#ddot" x="1271" y="622"/><use href="#d0" x="1274" y="622"/><use href="#d8" x="1281" y="622"/><use href="#d2" x="1384" y="622"/><use href="#d2" x="1391" y="622"/><use href="#d3" x="1398" y="622"/><use href="#ddot" x="1405" y="622"/><use href="#d0" x="1408" y="622"/><use href="#d8" x="1415" y="622"/><use href="#d2" x="1451" y="622"/><use href="#ddash" x="93" y="641"/><use href="#d1" x="100" y="641"/><use href="#d5" x="107" y="641"/><use href="#d4" x="114" y="641"/><use href="#d1" x="170" y="641"/><use href="#d5" x="177" y="641"/><use href="#d5" x="238" y="641"/><use href="#d1" x="245" y="641"/><use href="#d8" x="252" y="641"/><use href="#ddash" x="299" y="641"/><use href="#d7" x="306" y="641"/><use href="#d8" x="313" y="641"/><use href="#d6" x="320" y="641"/><use href="#d1" x="365" y="641"/><use href="#d2" x="372" y="641"/><use href="#d5" x="379" y="641"/><use href="#d0" x="482" y="641"/><use href="#d9" x="489" y="641"/><use href="#ddash" x="496" y="641"/><use href="#d2" x="500" y="641"/><use href="#d4" x="507" y="641"/><use href="#ddash" x="514" y="641"/><use href="#d2" x="518" y="641"/><use href="#d5" x="525" y="641"/><use href="#d1" x="549" y="641"/><use href="#d3" x="556" y="641"/><use href="#dcol" x="563" y="641"/><use href="#d4" x="566" y="641"/><use href="#d2" x="573" y="641"/><use href="#dcol" x="580" y="641"/><use href="#d5" x="583" y="641"/><use href="#d4" x="590" y="641"/><use href="#d1" x="630" y="641"/><use href="#d3" x="637" y="641"/><use href="#d0" x="644" y="641"/><use href="#d4" x="651" y="641"/><use href="#ddash" x="686" y="641"/><use href="#d8" x="690" y="641"/><use href="#ddot" x="697" y="641"/><use href="#d8" x="700" y="641"/><use href="#d8" x="707" y="641"/><use href="#ddash" x="761" y="641"/><use href="#d1" x="768" y="641"/><use href="#d6" x="775" y="641"/><use href="#d9" x="782" y="641"/><path d="M817 642h1v1h-1zM818 641h1v1h-1zM819 640h1v1h-1zM820 641h1v1h-1zM821 642h1v1h-1zM824 642h1v1h-1zM825 641h1v1h-1zM826 640h1v1h-1zM827 641h1v1h-1zM828 642h1v1h-1zM831 645h1v1h-1zM832 645h1v1h-1zM833 645h1v1h-1zM834 645h1v1h-1zM835 645h1v1h-1zM831 647h1v1h-1zM832 647h1v1h-1zM833 647h1v1h-1zM834 647h1v1h-1zM835 647h1v1h-1zM838 642h1v1h-1zM839 641h1v1h-1zM840 640h1v1h-1zM841 641h1v1h-1zM842 642h1v1h-1zM844 644h1v1h-1zM844 645h1v1h-1zM845 646h1v1h-1zM845 647h1v1h-1zM846 648h1v1h-1zM846 649h1v1h-1zM847 650h1v1h-1zM848 648h1v1h-1zM848 649h1v1h-1zM849 646h1v1h-1zM849 647h1v1h-1zM850 644h1v1h-1zM850 645h1v1h-1zM851 644h1v1h-1zM851 645h1v1h-1zM852 646h1v1h-1zM852 647h1v1h-1zM853 648h1v1h-1zM853 649h1v1h-1zM854 650h1v1h-1zM855 648h1v1h-1zM855 649h1v1h-1zM856 646h1v1h-1zM856 647h1v1h-1zM857 644h1v1h-1zM857 645h1v1h-1zM858 644h1v1h-1zM858 645h1v1h-1zM859 646h1v1h-1zM859 647h1v1h-1zM860 648h1v1h-1zM860 649h1v1h-1zM861 650h1v1h-1zM862 648h1v1h-1zM862 649h1v1h-1zM863 646h1v1h-1zM863 647h1v1h-1zM864 644h1v1h-1zM864 645h1v1h-1zM865 644h1v1h-1zM865 645h1v1h-1zM866 646h1v1h-1zM866 647h1v1h-1zM867 648h1v1h-1zM867 649h1v1h-1zM868 650h1v1h-1zM869 648h1v1h-1zM869 649h1v1h-1zM870 646h1v1h-1zM870 647h1v1h-1zM871 644h1v1h-1zM871 645h1v1h-1z"/><use href="#d1" x="969" y="641"/><use href="#d1" x="1183" y="641"/><use href="#d3" x="1190" y="641"/><use href="#dcol" x="1197" y="641"/><use href="#d4" x="1200" y="641"/><use href="#d2" x="1207" y="641"/><use href="#dcol" x="1214" y="641"/><use href="#d5" x="1217" y="641"/><use href="#d4" x="1224" y="641"/><use href="#ddash" x="1250" y="641"/><use href="#d2" x="1254" y="641"/><use href="#d2" x="1261" y="641"/><use href="#d3" x="1268" y="641"/><use href="#ddot" x="1275" y="641"/><use href="#d2" x="1278" y="641"/><use href="#d0" x="1285" y="641"/><use href="#ddash" x="1317" y="641"/><use href="#d4" x="1321" y="641"/><use href="#d3" x="1328" y="641"/><use href="#d6" x="1335" y="641"/><use href="#ddot" x="1342" y="641"/><use href="#d3" x="1345" y="641"/><use href="#d6" x="1352" y="641"/><use href="#ddash" x="1384" y="641"/><use href="#d8" x="1388" y="641"/><use href="#d0" x="1395" y="641"/><use href="#ddot" x="1402" y="641"/><use href="#d4" x="1405" y="641"/><use href="#d1" x="1412" y="641"/><use href="#d0" x="1451" y="641"/><use href="#d0" x="97" y="660"/><use href="#ddot" x="104" y="660"/><use href="#d8" x="107" y="660"/><use href="#d4" x="114" y="660"/><use href="#d0" x="165" y="660"/><use href="#ddot" x="172" y="660"/><use href="#d1" x="175" y="660"/><use href="#d6" x="182" y="660"/><use href="#d1" x="236" y="660"/><use href="#ddot" x="243" y="660"/><use href="#d2" x="246" y="660"/><use href="#d8" x="253" y="660"/><use href="#d0" x="303" y="660"/><use href="#ddot" x="310" y="660"/><use href="#d6" x="313" y="660"/><use href="#d0" x="320" y="660"/><use href="#d0" x="363" y="660"/><use href="#ddot" x="370" y="660"/><use href="#d7" x="373" y="660"/><use href="#d5" x="380" y="660"/><use href="#d0" x="482" y="660"/><use href="#d9" x="489" y="660"/><use href="#ddash" x="496" y="660"/><use href="#d2" x="500" y="660"/><use href="#d4" x="507" y="660"/><use href="#ddash" x="514" y="660"/><use href="#d2" x="518" y="660"/><use href="#d5" x="525" y="660"/><use href="#d1" x="549" y="660"/><use href="#d3" x="556" y="660"/><use href="#dcol" x="563" y="660"/><use href="#d4" x="566" y="660"/><use href="#d2" x="573" y="660"/><use href="#dcol" x="580" y="660"/><use href="#d5" x="583" y="660"/><use href="#d4" x="590" y="660"/><use href="#d0" x="631" y="660"/><use href="#ddot" x="638" y="660"/><use href="#d6" x="641" y="660"/><use href="#d9" x="648" y="660"/><use href="#d2" x="686" y="660"/><use href="#d3" x="693" y="660"/><use href="#ddot" x="700" y="660"/><use href="#d2" x="703" y="660"/><use href="#d5" x="710" y="660"/><use href="#d0" x="765" y="660"/><use href="#ddot" x="772" y="660"/><use href="#d6" x="775" y="660"/><use href="#d8" x="782" y="660"/><path d="M817 661h1v1h-1zM818 660h1v1h-1zM819 659h1v1h-1zM820 660h1v1h-1zM821 661h1v1h-1zM823 663h1v1h-1zM823 664h1v1h-1zM824 665h1v1h-1zM824 666h1v1h-1zM825 667h1v1h-1zM825 668h1v1h-1zM826 669h1v1h-1zM827 667h1v1h-1zM827 668h1v1h-1zM828 665h1v1h-1zM828 666h1v1h-1zM829 663h1v1h-1zM829 664h1v1h-1zM830 663h1v1h-1zM830 664h1v1h-1zM831 665h1v1h-1zM831 666h1v1h-1zM832 667h1v1h-1zM832 668h1v1h-1zM833 669h1v1h-1zM834 667h1v1h-1zM834 668h1v1h-1zM835 665h1v1h-1zM835 666h1v1h-1zM836 663h1v1h-1zM836 664h1v1h-1zM838 661h1v1h-1zM839 660h1v1h-1zM840 659h1v1h-1zM841 660h1v1h-1zM842 661h1v1h-1zM845 661h1v1h-1zM846 660h1v1h-1zM847 659h1v1h-1zM848 660h1v1h-1zM849 661h1v1h-1zM851 663h1v1h-1zM851 664h1v1h-1zM852 665h1v1h-1zM852 666h1v1h-1zM853 667h1v1h-1zM853 668h1v1h-1zM854 669h1v1h-1zM855 667h1v1h-1zM855 668h1v1h-1zM856 665h1v1h-1zM856 666h1v1h-1zM857 663h1v1h-1zM857 664h1v1h-1zM859 664h1v1h-1zM860 664h1v1h-1zM861 664h1v1h-1zM862 664h1v1h-1zM863 664h1v1h-1zM859 666h1v1h-1zM860 666h1v1h-1zM861 666h1v1h-1zM862 666h1v1h-1zM863 666h1v1h-1zM865 663h1v1h-1zM865 664h1v1h-1zM866 665h1v1h-1zM866 666h1v1h-1zM867 667h1v1h-1zM867 668h1v1h-1zM868 669h1v1h-1zM869 667h1v1h-1zM869 668h1v1h-1zM870 665h1v1h-1zM870 666h1v1h-1zM871 663h1v1h-1zM871 664h1v1h-1z"/><use href="#d1" x="969" y="660"/><use href="#d1" x="1183" y="660"/><use href="#d3" x="1190" y="660"/><use href="#dcol" x="1197" y="660"/><use href="#d4" x="1200" y="660"/><use href="#d2" x="1207" y="660"/><use href="#dcol" x="1214" y="660"/><use href="#d5" x="1217" y="660"/><use href="#d4" x="1224" y="660"/><use href="#d1" x="1253" y="660"/><use href="#d1" x="1260" y="660"/><use href="#ddot" x="1267" y="660"/><use href="#d7" x="1270" y="660"/><use href="#d8" x="1277" y="660"/><use href="#d5" x="1320" y="660"/><use href="#d3" x="1327" y="660"/><use href="#ddot" x="1334" y="660"/><use href="#d0" x="1337" y="660"/><use href="#d1" x="1344" y="660"/><use href="#d4" x="1387" y="660"/><use href="#d0" x="1394" y="660"/><use href="#ddot" x="1401" y="660"/><use href="#d6" x="1404" y="660"/><use href="#d7" x="1411" y="660"/><use href="#d2" x="1451" y="660"/></g></svg><div style="left:1670px;top:140px;width:18px;height:812px;background:#f0f0f0;"></div><div style="left:1671px;top:157px;width:16px;height:780px;background-color:#fff;background-image:linear-gradient(45deg,#f0f0f0 25%,transparent 25%,transparent 75%,#f0f0f0 75%),linear-gradient(45deg,#f0f0f0 25%,transparent 25%,transparent 75%,#f0f0f0 75%);background-size:2px 2px;background-position:0 0,1px 1px;"></div><div style="left:1671px;top:140px;width:1px;height:812px;background:#a0a0a0;"></div><div style="left:1687px;top:140px;width:1px;height:812px;background:#a0a0a0;"></div><div class="btn" style="left:1672px;top:140px;width:14px;height:17px;"></div><svg style="left:1676px;top:146px" width="7" height="4" viewBox="0 0 7 4"><path d="M3.5 0 L7 4 H0 Z" fill="#000"/></svg><div class="btn" style="left:1672px;top:157px;width:14px;height:18px;"></div><div class="btn" style="left:1672px;top:937px;width:14px;height:15px;"></div><svg style="left:1676px;top:943px" width="7" height="4" viewBox="0 0 7 4"><path d="M0 0 H7 L3.5 4 Z" fill="#000"/></svg><div style="left:9px;top:952px;width:1679px;height:1px;background:#fff;"></div><div class="btn" style="left:10px;top:955px;width:51px;height:20px;"></div><div class="t " style="left:-4.5px;top:960px;width:80px;text-align:center;font-size:12px;color:#000;transform:scaleX(0.87);">NYSE</div><div class="btn" style="left:61px;top:955px;width:51px;height:20px;"></div><div class="t " style="left:46.5px;top:960px;width:80px;text-align:center;font-size:12px;color:#000;transform:scaleX(0.87);">Nasdaq</div><div class="btn" style="left:112px;top:955px;width:51px;height:20px;"></div><div class="t " style="left:97.5px;top:960px;width:80px;text-align:center;font-size:12px;color:#000;transform:scaleX(0.87);">Canadian</div><div class="btn" style="left:163px;top:955px;width:51px;height:20px;"></div><div class="t " style="left:148.5px;top:960px;width:80px;text-align:center;font-size:12px;color:#000;transform:scaleX(0.87);">Other Stk</div><div class="btn" style="left:214px;top:955px;width:50px;height:20px;"></div><div class="t " style="left:199.0px;top:960px;width:80px;text-align:center;font-size:12px;color:#000;transform:scaleX(0.87);">SOptions</div><div class="btn" style="left:264px;top:955px;width:51px;height:20px;"></div><div class="t " style="left:249.5px;top:960px;width:80px;text-align:center;font-size:12px;color:#000;transform:scaleX(0.87);">GovBond</div><div class="btn" style="left:315px;top:955px;width:51px;height:20px;"></div><div class="t " style="left:300.5px;top:960px;width:80px;text-align:center;font-size:12px;color:#000;transform:scaleX(0.87);">Corporate</div><div class="btn" style="left:366px;top:955px;width:51px;height:20px;"></div><div class="t " style="left:351.5px;top:960px;width:80px;text-align:center;font-size:12px;color:#000;transform:scaleX(0.87);">Municipal</div><div class="btn" style="left:417px;top:955px;width:51px;height:20px;"></div><div class="t " style="left:402.5px;top:960px;width:80px;text-align:center;font-size:12px;color:#000;transform:scaleX(0.87);">StockFut</div><div class="btn" style="left:10px;top:975px;width:51px;height:20px;"></div><div class="t " style="left:-4.5px;top:980px;width:80px;text-align:center;font-size:12px;color:#000;transform:scaleX(0.87);">Index</div><div class="btn" style="left:61px;top:975px;width:51px;height:20px;"></div><div class="t " style="left:46.5px;top:980px;width:80px;text-align:center;font-size:12px;color:#000;transform:scaleX(0.87);">Forex</div><div class="btn" style="left:112px;top:975px;width:51px;height:20px;"></div><div class="t " style="left:97.5px;top:980px;width:80px;text-align:center;font-size:12px;color:#000;transform:scaleX(0.87);">Futures</div><div class="btn" style="left:163px;top:975px;width:51px;height:20px;"></div><div class="t " style="left:148.5px;top:980px;width:80px;text-align:center;font-size:12px;color:#000;transform:scaleX(0.87);">Other Fut</div><div class="btn" style="left:214px;top:975px;width:50px;height:20px;"></div><div class="t " style="left:199.0px;top:980px;width:80px;text-align:center;font-size:12px;color:#000;transform:scaleX(0.87);">FOptions</div><div class="btn" style="left:264px;top:975px;width:51px;height:20px;"></div><div class="t " style="left:249.5px;top:980px;width:80px;text-align:center;font-size:12px;color:#000;transform:scaleX(0.87);">Spreads</div><div class="btn" style="left:315px;top:975px;width:51px;height:20px;"></div><div class="t " style="left:300.5px;top:980px;width:80px;text-align:center;font-size:12px;color:#000;transform:scaleX(0.87);">Statistics</div><div class="btn" style="left:366px;top:975px;width:51px;height:20px;"></div><div class="t " style="left:351.5px;top:980px;width:80px;text-align:center;font-size:12px;color:#000;transform:scaleX(0.87);">Funds</div><div style="left:530px;top:957px;width:16px;height:16px;background:#00ff00;border:1px solid #a0a0a0;border-right-color:#fff;border-bottom-color:#fff;"></div><div style="left:530px;top:976px;width:16px;height:16px;background:#ff8080;border:1px solid #a0a0a0;border-right-color:#fff;border-bottom-color:#fff;"></div><div class="t " style="left:551px;top:960px;font-size:14px;color:#000;letter-spacing:-0.2px">Up Net</div><div class="t " style="left:551px;top:979px;font-size:14px;color:#000;letter-spacing:-0.2px">Down</div><div style="left:9px;top:997px;width:1679px;height:1px;background:#a0a0a0;"></div><div style="left:9px;top:998px;width:1679px;height:1px;background:#696969;"></div><div style="left:9px;top:999px;width:1679px;height:19px;background-color:#fff;background-image:linear-gradient(45deg,#f0f0f0 25%,transparent 25%,transparent 75%,#f0f0f0 75%),linear-gradient(45deg,#f0f0f0 25%,transparent 25%,transparent 75%,#f0f0f0 75%);background-size:2px 2px;background-position:0 0,1px 1px;"></div><svg style="left:9px;top:998px" width="1679" height="18" viewBox="0 0 1679 18"><path d="M3.5 0.5 L7.5 15.5 H42.5 L47.5 0.5" fill="#f0f0f0" stroke="#6d6d6d" stroke-width="1"/><path d="M47.5 0.5 L51.5 15.5 H72.5 L77.5 0.5" fill="#fff" stroke="#6d6d6d" stroke-width="1"/><path d="M77.5 0.5 L81.5 15.5 H111.5 L116.5 0.5" fill="#fff" stroke="#6d6d6d" stroke-width="1"/><path d="M116.5 0.5 L120.5 15.5 H146.5 L151.5 0.5" fill="#fff" stroke="#6d6d6d" stroke-width="1"/><path d="M151.5 0.5 L155.5 15.5 H175.5 L180.5 0.5" fill="#fff" stroke="#6d6d6d" stroke-width="1"/><path d="M180.5 0.5 L184.5 15.5 H232.5 L237.5 0.5" fill="#fff" stroke="#6d6d6d" stroke-width="1"/><path d="M237.5 0.5 L241.5 15.5 H311.5 L316.5 0.5" fill="#fff" stroke="#6d6d6d" stroke-width="1"/><path d="M316.5 0.5 L320.5 15.5 H354.5 L359.5 0.5" fill="#fff" stroke="#6d6d6d" stroke-width="1"/><path d="M359.5 0.5 L363.5 15.5 H418.5 L423.5 0.5" fill="#fff" stroke="#6d6d6d" stroke-width="1"/><path d="M423.5 0.5 L427.5 15.5 H518.5 L523.5 0.5" fill="#fff" stroke="#6d6d6d" stroke-width="1"/><path d="M523.5 0.5 L527.5 15.5 H559.5 L564.5 0.5" fill="#fff" stroke="#6d6d6d" stroke-width="1"/><path d="M564.5 0.5 L568.5 15.5 H574.5 L579.5 0.5" fill="#fff" stroke="#6d6d6d" stroke-width="1"/><path d="M579.5 0.5 L583.5 15.5 H618.5 L623.5 0.5" fill="#fff" stroke="#6d6d6d" stroke-width="1"/></svg><div class="t " style="left:-37.5px;top:1000px;width:140px;text-align:center;font-size:12px;color:#000;transform:scaleX(0.85);">indices</div><div class="t " style="left:-0.5px;top:1000px;width:140px;text-align:center;font-size:12px;color:#000;transform:scaleX(0.85);">gold</div><div class="t " style="left:34.0px;top:1000px;width:140px;text-align:center;font-size:12px;color:#000;transform:scaleX(0.85);">bonds</div><div class="t " style="left:71.0px;top:1000px;width:140px;text-align:center;font-size:12px;color:#000;transform:scaleX(0.85);">funds</div><div class="t " style="left:103.0px;top:1000px;width:140px;text-align:center;font-size:12px;color:#000;transform:scaleX(0.85);">data</div><div class="t " style="left:146.0px;top:1000px;width:140px;text-align:center;font-size:12px;color:#000;transform:scaleX(0.85);">currencies</div><div class="t " style="left:214.0px;top:1000px;width:140px;text-align:center;font-size:12px;color:#000;transform:scaleX(0.85);">Fidelity Selects</div><div class="t " style="left:275.0px;top:1000px;width:140px;text-align:center;font-size:12px;color:#000;transform:scaleX(0.85);">Dow30</div><div class="t " style="left:328.5px;top:1000px;width:140px;text-align:center;font-size:12px;color:#000;transform:scaleX(0.85);">Nasdaq100</div><div class="t " style="left:410.5px;top:1000px;width:140px;text-align:center;font-size:12px;color:#000;transform:scaleX(0.85);">STOCK FUTURES</div><div class="t " style="left:481.0px;top:1000px;width:140px;text-align:center;font-size:12px;color:#000;transform:scaleX(0.85);">SP500</div><div class="t " style="left:538.5px;top:1000px;width:140px;text-align:center;font-size:12px;color:#000;transform:scaleX(0.85);">Custom</div><div style="left:8px;top:1018px;width:49px;height:6px;background:#d0dae4;"></div><div style="left:57px;top:1018px;width:287px;height:6px;background:#fdfdfd;"></div><div style="left:344px;top:1018px;width:197px;height:6px;background:#ebdfe6;"></div><div style="left:541px;top:1018px;width:47px;height:6px;background:#f3eff3;"></div><div style="left:588px;top:1018px;width:1100px;height:6px;background:linear-gradient(to right,#e4dbe9 0px,#e2dcea 150px,#d8e1ea 350px,#dde3ed 600px,#dee4ee 1100px);"></div><div style="left:1684px;top:1018px;width:1px;height:6px;background:#a0a8b4;"></div></body></html>
